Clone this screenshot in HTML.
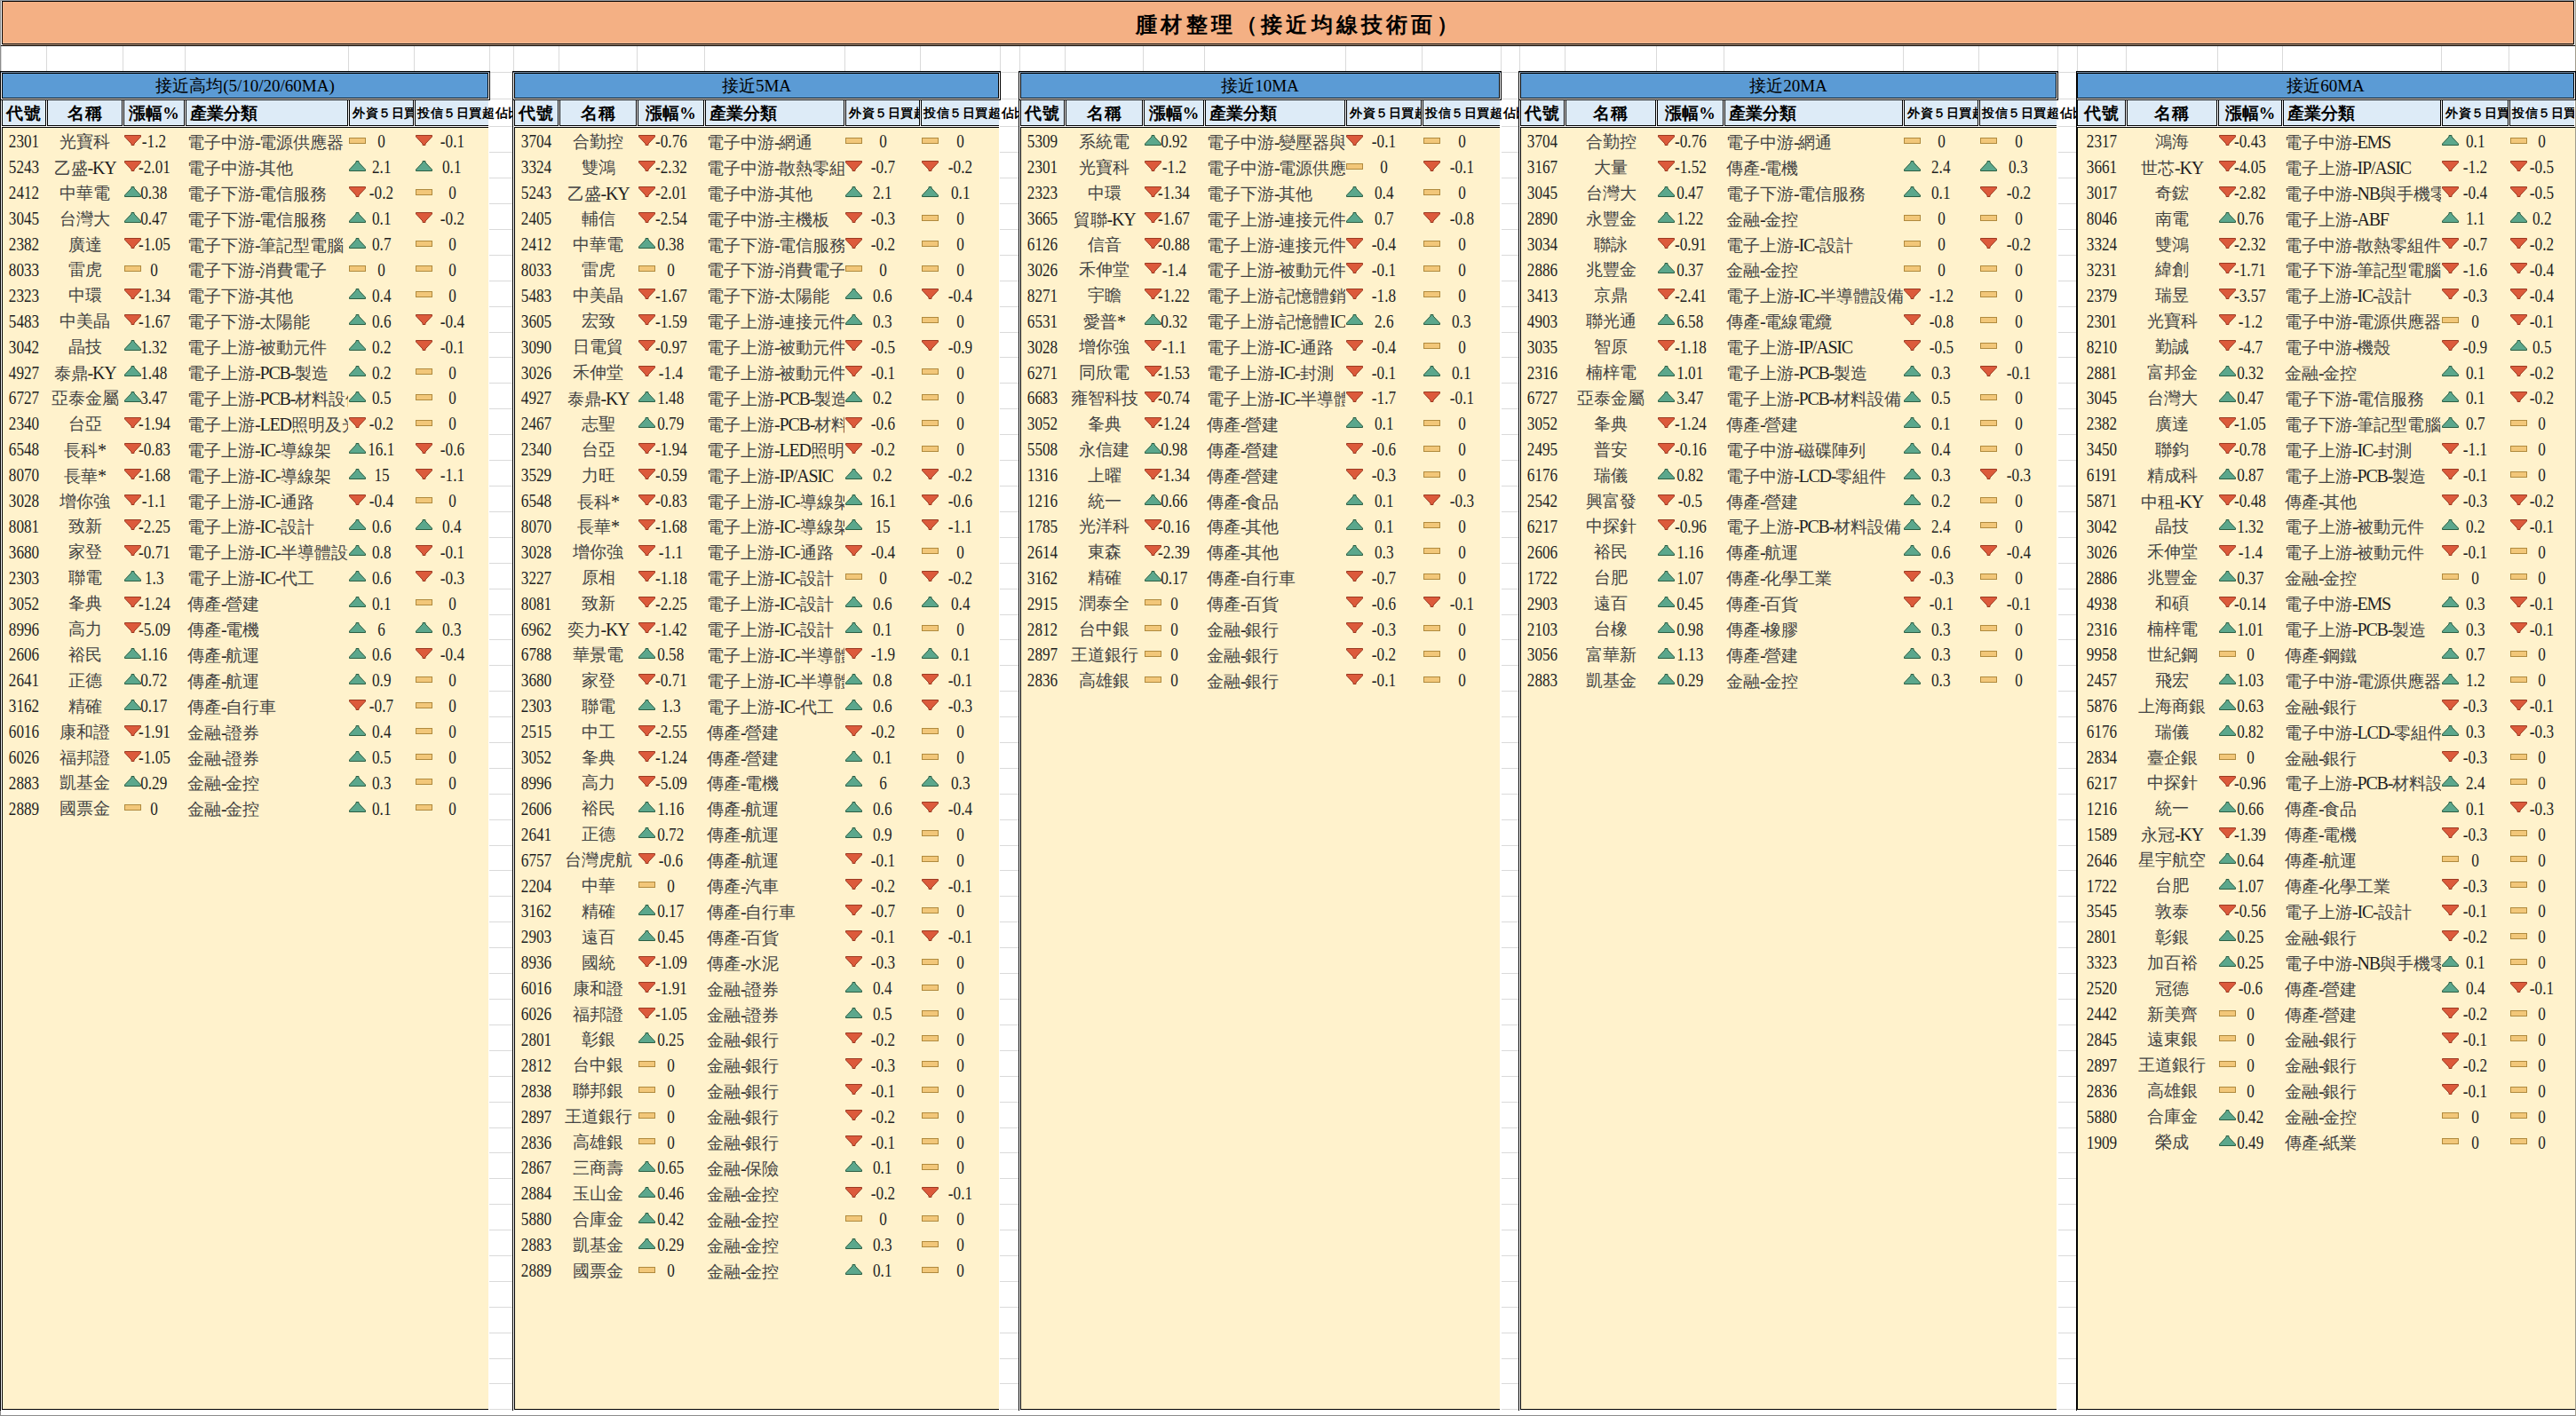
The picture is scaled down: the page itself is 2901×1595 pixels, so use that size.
<!DOCTYPE html><html><head><meta charset="utf-8"><style>
*{margin:0;padding:0;box-sizing:border-box}
html,body{width:2901px;height:1595px;overflow:hidden;background:#fff}
body{position:relative;font-family:"Liberation Serif",serif;color:#444}
.a{position:absolute}
.gv{position:absolute;width:1px;background:#dadada}
.gh{position:absolute;height:1px;background:#dadada}
.k{position:absolute;background:#000}
.c{position:absolute;white-space:nowrap;overflow:hidden;font-size:19px;line-height:28.9px}
.n{display:inline-block;color:#1e1e1e;font-size:22px;transform:scaleX(.78);position:relative;top:-0.5px}
.l{color:#1e1e1e;font-weight:normal;font-size:20px;letter-spacing:-1.2px}
.ic{position:absolute;width:19px;height:12px}
.pu{fill:#5ba78c;stroke:#2c5f44;stroke-width:1}
.pd{fill:#dc5a3b;stroke:#9c3a22;stroke-width:1}
.pz{fill:#f2c779;stroke:#b08a3e;stroke-width:1}
.hd{position:absolute;white-space:nowrap;overflow:hidden;font-weight:bold;font-size:17px;line-height:26px;color:#000}
</style></head><body>
<div class="a" style="left:0px;top:0px;width:1px;height:1595px;background:#8c8c8c"></div>
<div class="a" style="left:0px;top:0px;width:2901px;height:1px;background:#9aa0a6"></div>
<div class="a" style="left:0px;top:1594px;width:2901px;height:1px;background:#8c8c8c"></div>
<div class="a" style="left:2900px;top:0px;width:1px;height:1595px;background:#a09c8c"></div>
<div class="gv" style="left:1px;top:52px;height:28px"></div>
<div class="gv" style="left:52px;top:52px;height:28px"></div>
<div class="gv" style="left:138px;top:52px;height:28px"></div>
<div class="gv" style="left:208px;top:52px;height:28px"></div>
<div class="gv" style="left:392px;top:52px;height:28px"></div>
<div class="gv" style="left:466px;top:52px;height:28px"></div>
<div class="gv" style="left:551px;top:52px;height:28px"></div>
<div class="gv" style="left:578px;top:52px;height:28px"></div>
<div class="gv" style="left:629px;top:52px;height:28px"></div>
<div class="gv" style="left:717px;top:52px;height:28px"></div>
<div class="gv" style="left:793px;top:52px;height:28px"></div>
<div class="gv" style="left:951px;top:52px;height:28px"></div>
<div class="gv" style="left:1036px;top:52px;height:28px"></div>
<div class="gv" style="left:1126px;top:52px;height:28px"></div>
<div class="gv" style="left:1148px;top:52px;height:28px"></div>
<div class="gv" style="left:1199px;top:52px;height:28px"></div>
<div class="gv" style="left:1287px;top:52px;height:28px"></div>
<div class="gv" style="left:1356px;top:52px;height:28px"></div>
<div class="gv" style="left:1515px;top:52px;height:28px"></div>
<div class="gv" style="left:1601px;top:52px;height:28px"></div>
<div class="gv" style="left:1690px;top:52px;height:28px"></div>
<div class="gv" style="left:1711px;top:52px;height:28px"></div>
<div class="gv" style="left:1762px;top:52px;height:28px"></div>
<div class="gv" style="left:1865px;top:52px;height:28px"></div>
<div class="gv" style="left:1941px;top:52px;height:28px"></div>
<div class="gv" style="left:2143px;top:52px;height:28px"></div>
<div class="gv" style="left:2228px;top:52px;height:28px"></div>
<div class="gv" style="left:2317px;top:52px;height:28px"></div>
<div class="gv" style="left:2339px;top:52px;height:28px"></div>
<div class="gv" style="left:2394px;top:52px;height:28px"></div>
<div class="gv" style="left:2497px;top:52px;height:28px"></div>
<div class="gv" style="left:2570px;top:52px;height:28px"></div>
<div class="gv" style="left:2749px;top:52px;height:28px"></div>
<div class="gv" style="left:2825px;top:52px;height:28px"></div>
<div class="gv" style="left:2901px;top:52px;height:28px"></div>
<div class="gh" style="left:551px;top:81px;width:26px"></div>
<div class="gh" style="left:551px;top:111px;width:26px"></div>
<div class="gh" style="left:551px;top:142px;width:26px"></div>
<div class="gh" style="left:551px;top:171px;width:26px"></div>
<div class="gh" style="left:551px;top:200px;width:26px"></div>
<div class="gh" style="left:551px;top:229px;width:26px"></div>
<div class="gh" style="left:551px;top:258px;width:26px"></div>
<div class="gh" style="left:551px;top:287px;width:26px"></div>
<div class="gh" style="left:551px;top:316px;width:26px"></div>
<div class="gh" style="left:551px;top:345px;width:26px"></div>
<div class="gh" style="left:551px;top:374px;width:26px"></div>
<div class="gh" style="left:551px;top:402px;width:26px"></div>
<div class="gh" style="left:551px;top:431px;width:26px"></div>
<div class="gh" style="left:551px;top:460px;width:26px"></div>
<div class="gh" style="left:551px;top:489px;width:26px"></div>
<div class="gh" style="left:551px;top:518px;width:26px"></div>
<div class="gh" style="left:551px;top:547px;width:26px"></div>
<div class="gh" style="left:551px;top:576px;width:26px"></div>
<div class="gh" style="left:551px;top:605px;width:26px"></div>
<div class="gh" style="left:551px;top:634px;width:26px"></div>
<div class="gh" style="left:551px;top:663px;width:26px"></div>
<div class="gh" style="left:551px;top:692px;width:26px"></div>
<div class="gh" style="left:551px;top:720px;width:26px"></div>
<div class="gh" style="left:551px;top:749px;width:26px"></div>
<div class="gh" style="left:551px;top:778px;width:26px"></div>
<div class="gh" style="left:551px;top:807px;width:26px"></div>
<div class="gh" style="left:551px;top:836px;width:26px"></div>
<div class="gh" style="left:551px;top:865px;width:26px"></div>
<div class="gh" style="left:551px;top:894px;width:26px"></div>
<div class="gh" style="left:551px;top:923px;width:26px"></div>
<div class="gh" style="left:551px;top:952px;width:26px"></div>
<div class="gh" style="left:551px;top:980px;width:26px"></div>
<div class="gh" style="left:551px;top:1009px;width:26px"></div>
<div class="gh" style="left:551px;top:1038px;width:26px"></div>
<div class="gh" style="left:551px;top:1067px;width:26px"></div>
<div class="gh" style="left:551px;top:1096px;width:26px"></div>
<div class="gh" style="left:551px;top:1125px;width:26px"></div>
<div class="gh" style="left:551px;top:1154px;width:26px"></div>
<div class="gh" style="left:551px;top:1183px;width:26px"></div>
<div class="gh" style="left:551px;top:1212px;width:26px"></div>
<div class="gh" style="left:551px;top:1241px;width:26px"></div>
<div class="gh" style="left:551px;top:1270px;width:26px"></div>
<div class="gh" style="left:551px;top:1298px;width:26px"></div>
<div class="gh" style="left:551px;top:1327px;width:26px"></div>
<div class="gh" style="left:551px;top:1356px;width:26px"></div>
<div class="gh" style="left:551px;top:1385px;width:26px"></div>
<div class="gh" style="left:551px;top:1414px;width:26px"></div>
<div class="gh" style="left:551px;top:1443px;width:26px"></div>
<div class="gh" style="left:551px;top:1472px;width:26px"></div>
<div class="gh" style="left:551px;top:1501px;width:26px"></div>
<div class="gh" style="left:551px;top:1530px;width:26px"></div>
<div class="gh" style="left:551px;top:1558px;width:26px"></div>
<div class="gh" style="left:551px;top:1587px;width:26px"></div>
<div class="gh" style="left:1126px;top:81px;width:21px"></div>
<div class="gh" style="left:1126px;top:111px;width:21px"></div>
<div class="gh" style="left:1126px;top:142px;width:21px"></div>
<div class="gh" style="left:1126px;top:171px;width:21px"></div>
<div class="gh" style="left:1126px;top:200px;width:21px"></div>
<div class="gh" style="left:1126px;top:229px;width:21px"></div>
<div class="gh" style="left:1126px;top:258px;width:21px"></div>
<div class="gh" style="left:1126px;top:287px;width:21px"></div>
<div class="gh" style="left:1126px;top:316px;width:21px"></div>
<div class="gh" style="left:1126px;top:345px;width:21px"></div>
<div class="gh" style="left:1126px;top:374px;width:21px"></div>
<div class="gh" style="left:1126px;top:402px;width:21px"></div>
<div class="gh" style="left:1126px;top:431px;width:21px"></div>
<div class="gh" style="left:1126px;top:460px;width:21px"></div>
<div class="gh" style="left:1126px;top:489px;width:21px"></div>
<div class="gh" style="left:1126px;top:518px;width:21px"></div>
<div class="gh" style="left:1126px;top:547px;width:21px"></div>
<div class="gh" style="left:1126px;top:576px;width:21px"></div>
<div class="gh" style="left:1126px;top:605px;width:21px"></div>
<div class="gh" style="left:1126px;top:634px;width:21px"></div>
<div class="gh" style="left:1126px;top:663px;width:21px"></div>
<div class="gh" style="left:1126px;top:692px;width:21px"></div>
<div class="gh" style="left:1126px;top:720px;width:21px"></div>
<div class="gh" style="left:1126px;top:749px;width:21px"></div>
<div class="gh" style="left:1126px;top:778px;width:21px"></div>
<div class="gh" style="left:1126px;top:807px;width:21px"></div>
<div class="gh" style="left:1126px;top:836px;width:21px"></div>
<div class="gh" style="left:1126px;top:865px;width:21px"></div>
<div class="gh" style="left:1126px;top:894px;width:21px"></div>
<div class="gh" style="left:1126px;top:923px;width:21px"></div>
<div class="gh" style="left:1126px;top:952px;width:21px"></div>
<div class="gh" style="left:1126px;top:980px;width:21px"></div>
<div class="gh" style="left:1126px;top:1009px;width:21px"></div>
<div class="gh" style="left:1126px;top:1038px;width:21px"></div>
<div class="gh" style="left:1126px;top:1067px;width:21px"></div>
<div class="gh" style="left:1126px;top:1096px;width:21px"></div>
<div class="gh" style="left:1126px;top:1125px;width:21px"></div>
<div class="gh" style="left:1126px;top:1154px;width:21px"></div>
<div class="gh" style="left:1126px;top:1183px;width:21px"></div>
<div class="gh" style="left:1126px;top:1212px;width:21px"></div>
<div class="gh" style="left:1126px;top:1241px;width:21px"></div>
<div class="gh" style="left:1126px;top:1270px;width:21px"></div>
<div class="gh" style="left:1126px;top:1298px;width:21px"></div>
<div class="gh" style="left:1126px;top:1327px;width:21px"></div>
<div class="gh" style="left:1126px;top:1356px;width:21px"></div>
<div class="gh" style="left:1126px;top:1385px;width:21px"></div>
<div class="gh" style="left:1126px;top:1414px;width:21px"></div>
<div class="gh" style="left:1126px;top:1443px;width:21px"></div>
<div class="gh" style="left:1126px;top:1472px;width:21px"></div>
<div class="gh" style="left:1126px;top:1501px;width:21px"></div>
<div class="gh" style="left:1126px;top:1530px;width:21px"></div>
<div class="gh" style="left:1126px;top:1558px;width:21px"></div>
<div class="gh" style="left:1126px;top:1587px;width:21px"></div>
<div class="gh" style="left:1691px;top:81px;width:19px"></div>
<div class="gh" style="left:1691px;top:111px;width:19px"></div>
<div class="gh" style="left:1691px;top:142px;width:19px"></div>
<div class="gh" style="left:1691px;top:171px;width:19px"></div>
<div class="gh" style="left:1691px;top:200px;width:19px"></div>
<div class="gh" style="left:1691px;top:229px;width:19px"></div>
<div class="gh" style="left:1691px;top:258px;width:19px"></div>
<div class="gh" style="left:1691px;top:287px;width:19px"></div>
<div class="gh" style="left:1691px;top:316px;width:19px"></div>
<div class="gh" style="left:1691px;top:345px;width:19px"></div>
<div class="gh" style="left:1691px;top:374px;width:19px"></div>
<div class="gh" style="left:1691px;top:402px;width:19px"></div>
<div class="gh" style="left:1691px;top:431px;width:19px"></div>
<div class="gh" style="left:1691px;top:460px;width:19px"></div>
<div class="gh" style="left:1691px;top:489px;width:19px"></div>
<div class="gh" style="left:1691px;top:518px;width:19px"></div>
<div class="gh" style="left:1691px;top:547px;width:19px"></div>
<div class="gh" style="left:1691px;top:576px;width:19px"></div>
<div class="gh" style="left:1691px;top:605px;width:19px"></div>
<div class="gh" style="left:1691px;top:634px;width:19px"></div>
<div class="gh" style="left:1691px;top:663px;width:19px"></div>
<div class="gh" style="left:1691px;top:692px;width:19px"></div>
<div class="gh" style="left:1691px;top:720px;width:19px"></div>
<div class="gh" style="left:1691px;top:749px;width:19px"></div>
<div class="gh" style="left:1691px;top:778px;width:19px"></div>
<div class="gh" style="left:1691px;top:807px;width:19px"></div>
<div class="gh" style="left:1691px;top:836px;width:19px"></div>
<div class="gh" style="left:1691px;top:865px;width:19px"></div>
<div class="gh" style="left:1691px;top:894px;width:19px"></div>
<div class="gh" style="left:1691px;top:923px;width:19px"></div>
<div class="gh" style="left:1691px;top:952px;width:19px"></div>
<div class="gh" style="left:1691px;top:980px;width:19px"></div>
<div class="gh" style="left:1691px;top:1009px;width:19px"></div>
<div class="gh" style="left:1691px;top:1038px;width:19px"></div>
<div class="gh" style="left:1691px;top:1067px;width:19px"></div>
<div class="gh" style="left:1691px;top:1096px;width:19px"></div>
<div class="gh" style="left:1691px;top:1125px;width:19px"></div>
<div class="gh" style="left:1691px;top:1154px;width:19px"></div>
<div class="gh" style="left:1691px;top:1183px;width:19px"></div>
<div class="gh" style="left:1691px;top:1212px;width:19px"></div>
<div class="gh" style="left:1691px;top:1241px;width:19px"></div>
<div class="gh" style="left:1691px;top:1270px;width:19px"></div>
<div class="gh" style="left:1691px;top:1298px;width:19px"></div>
<div class="gh" style="left:1691px;top:1327px;width:19px"></div>
<div class="gh" style="left:1691px;top:1356px;width:19px"></div>
<div class="gh" style="left:1691px;top:1385px;width:19px"></div>
<div class="gh" style="left:1691px;top:1414px;width:19px"></div>
<div class="gh" style="left:1691px;top:1443px;width:19px"></div>
<div class="gh" style="left:1691px;top:1472px;width:19px"></div>
<div class="gh" style="left:1691px;top:1501px;width:19px"></div>
<div class="gh" style="left:1691px;top:1530px;width:19px"></div>
<div class="gh" style="left:1691px;top:1558px;width:19px"></div>
<div class="gh" style="left:1691px;top:1587px;width:19px"></div>
<div class="gh" style="left:2318px;top:81px;width:20px"></div>
<div class="gh" style="left:2318px;top:111px;width:20px"></div>
<div class="gh" style="left:2318px;top:142px;width:20px"></div>
<div class="gh" style="left:2318px;top:171px;width:20px"></div>
<div class="gh" style="left:2318px;top:200px;width:20px"></div>
<div class="gh" style="left:2318px;top:229px;width:20px"></div>
<div class="gh" style="left:2318px;top:258px;width:20px"></div>
<div class="gh" style="left:2318px;top:287px;width:20px"></div>
<div class="gh" style="left:2318px;top:316px;width:20px"></div>
<div class="gh" style="left:2318px;top:345px;width:20px"></div>
<div class="gh" style="left:2318px;top:374px;width:20px"></div>
<div class="gh" style="left:2318px;top:402px;width:20px"></div>
<div class="gh" style="left:2318px;top:431px;width:20px"></div>
<div class="gh" style="left:2318px;top:460px;width:20px"></div>
<div class="gh" style="left:2318px;top:489px;width:20px"></div>
<div class="gh" style="left:2318px;top:518px;width:20px"></div>
<div class="gh" style="left:2318px;top:547px;width:20px"></div>
<div class="gh" style="left:2318px;top:576px;width:20px"></div>
<div class="gh" style="left:2318px;top:605px;width:20px"></div>
<div class="gh" style="left:2318px;top:634px;width:20px"></div>
<div class="gh" style="left:2318px;top:663px;width:20px"></div>
<div class="gh" style="left:2318px;top:692px;width:20px"></div>
<div class="gh" style="left:2318px;top:720px;width:20px"></div>
<div class="gh" style="left:2318px;top:749px;width:20px"></div>
<div class="gh" style="left:2318px;top:778px;width:20px"></div>
<div class="gh" style="left:2318px;top:807px;width:20px"></div>
<div class="gh" style="left:2318px;top:836px;width:20px"></div>
<div class="gh" style="left:2318px;top:865px;width:20px"></div>
<div class="gh" style="left:2318px;top:894px;width:20px"></div>
<div class="gh" style="left:2318px;top:923px;width:20px"></div>
<div class="gh" style="left:2318px;top:952px;width:20px"></div>
<div class="gh" style="left:2318px;top:980px;width:20px"></div>
<div class="gh" style="left:2318px;top:1009px;width:20px"></div>
<div class="gh" style="left:2318px;top:1038px;width:20px"></div>
<div class="gh" style="left:2318px;top:1067px;width:20px"></div>
<div class="gh" style="left:2318px;top:1096px;width:20px"></div>
<div class="gh" style="left:2318px;top:1125px;width:20px"></div>
<div class="gh" style="left:2318px;top:1154px;width:20px"></div>
<div class="gh" style="left:2318px;top:1183px;width:20px"></div>
<div class="gh" style="left:2318px;top:1212px;width:20px"></div>
<div class="gh" style="left:2318px;top:1241px;width:20px"></div>
<div class="gh" style="left:2318px;top:1270px;width:20px"></div>
<div class="gh" style="left:2318px;top:1298px;width:20px"></div>
<div class="gh" style="left:2318px;top:1327px;width:20px"></div>
<div class="gh" style="left:2318px;top:1356px;width:20px"></div>
<div class="gh" style="left:2318px;top:1385px;width:20px"></div>
<div class="gh" style="left:2318px;top:1414px;width:20px"></div>
<div class="gh" style="left:2318px;top:1443px;width:20px"></div>
<div class="gh" style="left:2318px;top:1472px;width:20px"></div>
<div class="gh" style="left:2318px;top:1501px;width:20px"></div>
<div class="gh" style="left:2318px;top:1530px;width:20px"></div>
<div class="gh" style="left:2318px;top:1558px;width:20px"></div>
<div class="gh" style="left:2318px;top:1587px;width:20px"></div>
<div class="a" style="left:3px;top:2px;width:2895px;height:47px;background:#f4b084"></div>
<div class="k" style="left:2px;top:1px;width:2897px;height:1px"></div>
<div class="k" style="left:2px;top:1px;width:1px;height:49px"></div>
<div class="k" style="left:2898px;top:1px;width:1px;height:49px"></div>
<div class="k" style="left:2px;top:49px;width:2897px;height:1px"></div>
<div class="k" style="left:1px;top:51px;width:2899px;height:1px"></div>
<div class="a" style="left:3px;top:50px;width:2895px;height:1px;background:#c9a386"></div>
<div class="a" style="left:3px;top:48px;width:2895px;height:1px;background:#f6bd98"></div>
<div class="a" style="left:0;top:2px;width:2901px;height:47px;text-align:center;font-weight:bold;font-size:24px;line-height:47px;letter-spacing:4.2px;padding-left:24px;padding-top:3px;color:#000">腫材整理（接近均線技術面）</div>
<div class="a" style="left:3px;top:83px;width:546px;height:27px;background:#5b9bd5"></div>
<div class="k" style="left:0px;top:80px;width:552px;height:1px"></div>
<div class="a" style="left:1px;top:81px;width:550px;height:1px;background:#6f8aa6"></div>
<div class="k" style="left:2px;top:82px;width:548px;height:1px"></div>
<div class="k" style="left:2px;top:110px;width:548px;height:1px"></div>
<div class="k" style="left:2px;top:82px;width:1px;height:29px"></div>
<div class="k" style="left:549px;top:82px;width:1px;height:29px"></div>
<div class="k" style="left:551px;top:80px;width:1px;height:33px"></div>
<div class="k" style="left:0px;top:80px;width:1px;height:1509px"></div>
<div class="a" style="left:3px;top:83px;width:546px;height:27px;text-align:center;font-size:19px;line-height:27px;color:#000">接近高均<span style="font-size:19px;letter-spacing:0;font-weight:normal">(5/10/20/60MA)</span></div>
<div class="k" style="left:0px;top:112px;width:551px;height:1px"></div>
<div class="a" style="left:3px;top:113px;width:49px;height:28px;background:#ddebf7"></div>
<div class="k" style="left:2px;top:112px;width:50px;height:1px"></div>
<div class="k" style="left:2px;top:141px;width:50px;height:1px"></div>
<div class="k" style="left:2px;top:112px;width:1px;height:30px"></div>
<div class="k" style="left:51px;top:112px;width:1px;height:30px"></div>
<div class="hd" style="left:3px;top:115px;width:48px;height:26px;text-align:center;padding-left:0px;font-size:18.5px;letter-spacing:1px">代號</div>
<div class="a" style="left:54px;top:113px;width:84px;height:28px;background:#ddebf7"></div>
<div class="k" style="left:53px;top:112px;width:85px;height:1px"></div>
<div class="k" style="left:53px;top:141px;width:85px;height:1px"></div>
<div class="k" style="left:53px;top:112px;width:1px;height:30px"></div>
<div class="k" style="left:137px;top:112px;width:1px;height:30px"></div>
<div class="hd" style="left:54px;top:115px;width:83px;height:26px;text-align:center;padding-left:0px;font-size:18.5px;letter-spacing:1px">名稱</div>
<div class="a" style="left:140px;top:113px;width:68px;height:28px;background:#ddebf7"></div>
<div class="k" style="left:139px;top:112px;width:69px;height:1px"></div>
<div class="k" style="left:139px;top:141px;width:69px;height:1px"></div>
<div class="k" style="left:139px;top:112px;width:1px;height:30px"></div>
<div class="k" style="left:207px;top:112px;width:1px;height:30px"></div>
<div class="hd" style="left:140px;top:115px;width:67px;height:26px;text-align:center;padding-left:0px;font-size:18.5px;letter-spacing:0">漲幅%</div>
<div class="a" style="left:210px;top:113px;width:182px;height:28px;background:#ddebf7"></div>
<div class="k" style="left:209px;top:112px;width:183px;height:1px"></div>
<div class="k" style="left:209px;top:141px;width:183px;height:1px"></div>
<div class="k" style="left:209px;top:112px;width:1px;height:30px"></div>
<div class="k" style="left:391px;top:112px;width:1px;height:30px"></div>
<div class="hd" style="left:210px;top:115px;width:181px;height:26px;text-align:left;padding-left:4px;font-size:18.5px;letter-spacing:0">產業分類</div>
<div class="a" style="left:394px;top:113px;width:72px;height:28px;background:#ddebf7"></div>
<div class="k" style="left:393px;top:112px;width:73px;height:1px"></div>
<div class="k" style="left:393px;top:141px;width:73px;height:1px"></div>
<div class="k" style="left:393px;top:112px;width:1px;height:30px"></div>
<div class="k" style="left:465px;top:112px;width:1px;height:30px"></div>
<div class="hd" style="left:394px;top:115px;width:71px;height:26px;text-align:left;padding-left:3px;font-size:13.5px;letter-spacing:0.6px">外資５日買超佔比</div>
<div class="a" style="left:468px;top:113px;width:82px;height:28px;background:#ddebf7"></div>
<div class="k" style="left:467px;top:112px;width:83px;height:1px"></div>
<div class="k" style="left:467px;top:141px;width:83px;height:1px"></div>
<div class="k" style="left:467px;top:112px;width:1px;height:30px"></div>
<div class="hd" style="left:468px;top:115px;width:109px;height:26px;text-align:left;padding-left:2px;font-size:13.5px;letter-spacing:0.6px">投信５日買超佔比</div>
<div class="a" style="left:3px;top:144px;width:547px;height:1443px;background:#fff2cc"></div>
<div class="k" style="left:2px;top:143px;width:548px;height:1px"></div>
<div class="k" style="left:2px;top:143px;width:1px;height:1445px"></div>
<div class="k" style="left:2px;top:1587px;width:548px;height:1px"></div>
<div class="c" style="left:2px;top:145.9px;width:50px;text-align:center"><span class="n">2301</span></div>
<div class="c" style="left:53px;top:145.9px;width:85px;text-align:center">光寶科</div>
<div class="c" style="left:209px;top:145.9px;width:183px;padding-left:2px">電子中游<span class="l">-</span>電源供應器</div>
<svg class="ic" viewBox="0 0 19 12" style="left:140px;top:151.9px"><path class="pd" d="M.5 .5H18.5V2L11 10V11.5H8V10L.5 2Z"/></svg>
<div class="c" style="left:139px;top:145.9px;width:69px;text-align:center"><span class="n">-1.2</span></div>
<svg class="ic" viewBox="0 0 19 12" style="left:393px;top:151.9px"><rect class="pz" x=".5" y="3.5" width="18" height="6"/></svg>
<div class="c" style="left:393px;top:145.9px;width:73px;text-align:center"><span class="n">0</span></div>
<svg class="ic" viewBox="0 0 19 12" style="left:468px;top:151.9px"><path class="pd" d="M.5 .5H18.5V2L11 10V11.5H8V10L.5 2Z"/></svg>
<div class="c" style="left:467px;top:145.9px;width:84px;text-align:center"><span class="n">-0.1</span></div>
<div class="c" style="left:2px;top:174.8px;width:50px;text-align:center"><span class="n">5243</span></div>
<div class="c" style="left:53px;top:174.8px;width:85px;text-align:center">乙盛<span class="l">-KY</span></div>
<div class="c" style="left:209px;top:174.8px;width:183px;padding-left:2px">電子中游<span class="l">-</span>其他</div>
<svg class="ic" viewBox="0 0 19 12" style="left:140px;top:180.8px"><path class="pd" d="M.5 .5H18.5V2L11 10V11.5H8V10L.5 2Z"/></svg>
<div class="c" style="left:139px;top:174.8px;width:69px;text-align:center"><span class="n">-2.01</span></div>
<svg class="ic" viewBox="0 0 19 12" style="left:393px;top:180.8px"><path class="pu" d="M8 .5H11V2L18.5 10V11.5H.5V10L8 2Z"/></svg>
<div class="c" style="left:393px;top:174.8px;width:73px;text-align:center"><span class="n">2.1</span></div>
<svg class="ic" viewBox="0 0 19 12" style="left:468px;top:180.8px"><path class="pu" d="M8 .5H11V2L18.5 10V11.5H.5V10L8 2Z"/></svg>
<div class="c" style="left:467px;top:174.8px;width:84px;text-align:center"><span class="n">0.1</span></div>
<div class="c" style="left:2px;top:203.7px;width:50px;text-align:center"><span class="n">2412</span></div>
<div class="c" style="left:53px;top:203.7px;width:85px;text-align:center">中華電</div>
<div class="c" style="left:209px;top:203.7px;width:183px;padding-left:2px">電子下游<span class="l">-</span>電信服務</div>
<svg class="ic" viewBox="0 0 19 12" style="left:140px;top:209.7px"><path class="pu" d="M8 .5H11V2L18.5 10V11.5H.5V10L8 2Z"/></svg>
<div class="c" style="left:139px;top:203.7px;width:69px;text-align:center"><span class="n">0.38</span></div>
<svg class="ic" viewBox="0 0 19 12" style="left:393px;top:209.7px"><path class="pd" d="M.5 .5H18.5V2L11 10V11.5H8V10L.5 2Z"/></svg>
<div class="c" style="left:393px;top:203.7px;width:73px;text-align:center"><span class="n">-0.2</span></div>
<svg class="ic" viewBox="0 0 19 12" style="left:468px;top:209.7px"><rect class="pz" x=".5" y="3.5" width="18" height="6"/></svg>
<div class="c" style="left:467px;top:203.7px;width:84px;text-align:center"><span class="n">0</span></div>
<div class="c" style="left:2px;top:232.6px;width:50px;text-align:center"><span class="n">3045</span></div>
<div class="c" style="left:53px;top:232.6px;width:85px;text-align:center">台灣大</div>
<div class="c" style="left:209px;top:232.6px;width:183px;padding-left:2px">電子下游<span class="l">-</span>電信服務</div>
<svg class="ic" viewBox="0 0 19 12" style="left:140px;top:238.6px"><path class="pu" d="M8 .5H11V2L18.5 10V11.5H.5V10L8 2Z"/></svg>
<div class="c" style="left:139px;top:232.6px;width:69px;text-align:center"><span class="n">0.47</span></div>
<svg class="ic" viewBox="0 0 19 12" style="left:393px;top:238.6px"><path class="pu" d="M8 .5H11V2L18.5 10V11.5H.5V10L8 2Z"/></svg>
<div class="c" style="left:393px;top:232.6px;width:73px;text-align:center"><span class="n">0.1</span></div>
<svg class="ic" viewBox="0 0 19 12" style="left:468px;top:238.6px"><path class="pd" d="M.5 .5H18.5V2L11 10V11.5H8V10L.5 2Z"/></svg>
<div class="c" style="left:467px;top:232.6px;width:84px;text-align:center"><span class="n">-0.2</span></div>
<div class="c" style="left:2px;top:261.5px;width:50px;text-align:center"><span class="n">2382</span></div>
<div class="c" style="left:53px;top:261.5px;width:85px;text-align:center">廣達</div>
<div class="c" style="left:209px;top:261.5px;width:183px;padding-left:2px">電子下游<span class="l">-</span>筆記型電腦</div>
<svg class="ic" viewBox="0 0 19 12" style="left:140px;top:267.5px"><path class="pd" d="M.5 .5H18.5V2L11 10V11.5H8V10L.5 2Z"/></svg>
<div class="c" style="left:139px;top:261.5px;width:69px;text-align:center"><span class="n">-1.05</span></div>
<svg class="ic" viewBox="0 0 19 12" style="left:393px;top:267.5px"><path class="pu" d="M8 .5H11V2L18.5 10V11.5H.5V10L8 2Z"/></svg>
<div class="c" style="left:393px;top:261.5px;width:73px;text-align:center"><span class="n">0.7</span></div>
<svg class="ic" viewBox="0 0 19 12" style="left:468px;top:267.5px"><rect class="pz" x=".5" y="3.5" width="18" height="6"/></svg>
<div class="c" style="left:467px;top:261.5px;width:84px;text-align:center"><span class="n">0</span></div>
<div class="c" style="left:2px;top:290.4px;width:50px;text-align:center"><span class="n">8033</span></div>
<div class="c" style="left:53px;top:290.4px;width:85px;text-align:center">雷虎</div>
<div class="c" style="left:209px;top:290.4px;width:183px;padding-left:2px">電子下游<span class="l">-</span>消費電子</div>
<svg class="ic" viewBox="0 0 19 12" style="left:140px;top:296.4px"><rect class="pz" x=".5" y="3.5" width="18" height="6"/></svg>
<div class="c" style="left:139px;top:290.4px;width:69px;text-align:center"><span class="n">0</span></div>
<svg class="ic" viewBox="0 0 19 12" style="left:393px;top:296.4px"><rect class="pz" x=".5" y="3.5" width="18" height="6"/></svg>
<div class="c" style="left:393px;top:290.4px;width:73px;text-align:center"><span class="n">0</span></div>
<svg class="ic" viewBox="0 0 19 12" style="left:468px;top:296.4px"><rect class="pz" x=".5" y="3.5" width="18" height="6"/></svg>
<div class="c" style="left:467px;top:290.4px;width:84px;text-align:center"><span class="n">0</span></div>
<div class="c" style="left:2px;top:319.3px;width:50px;text-align:center"><span class="n">2323</span></div>
<div class="c" style="left:53px;top:319.3px;width:85px;text-align:center">中環</div>
<div class="c" style="left:209px;top:319.3px;width:183px;padding-left:2px">電子下游<span class="l">-</span>其他</div>
<svg class="ic" viewBox="0 0 19 12" style="left:140px;top:325.3px"><path class="pd" d="M.5 .5H18.5V2L11 10V11.5H8V10L.5 2Z"/></svg>
<div class="c" style="left:139px;top:319.3px;width:69px;text-align:center"><span class="n">-1.34</span></div>
<svg class="ic" viewBox="0 0 19 12" style="left:393px;top:325.3px"><path class="pu" d="M8 .5H11V2L18.5 10V11.5H.5V10L8 2Z"/></svg>
<div class="c" style="left:393px;top:319.3px;width:73px;text-align:center"><span class="n">0.4</span></div>
<svg class="ic" viewBox="0 0 19 12" style="left:468px;top:325.3px"><rect class="pz" x=".5" y="3.5" width="18" height="6"/></svg>
<div class="c" style="left:467px;top:319.3px;width:84px;text-align:center"><span class="n">0</span></div>
<div class="c" style="left:2px;top:348.2px;width:50px;text-align:center"><span class="n">5483</span></div>
<div class="c" style="left:53px;top:348.2px;width:85px;text-align:center">中美晶</div>
<div class="c" style="left:209px;top:348.2px;width:183px;padding-left:2px">電子下游<span class="l">-</span>太陽能</div>
<svg class="ic" viewBox="0 0 19 12" style="left:140px;top:354.2px"><path class="pd" d="M.5 .5H18.5V2L11 10V11.5H8V10L.5 2Z"/></svg>
<div class="c" style="left:139px;top:348.2px;width:69px;text-align:center"><span class="n">-1.67</span></div>
<svg class="ic" viewBox="0 0 19 12" style="left:393px;top:354.2px"><path class="pu" d="M8 .5H11V2L18.5 10V11.5H.5V10L8 2Z"/></svg>
<div class="c" style="left:393px;top:348.2px;width:73px;text-align:center"><span class="n">0.6</span></div>
<svg class="ic" viewBox="0 0 19 12" style="left:468px;top:354.2px"><path class="pd" d="M.5 .5H18.5V2L11 10V11.5H8V10L.5 2Z"/></svg>
<div class="c" style="left:467px;top:348.2px;width:84px;text-align:center"><span class="n">-0.4</span></div>
<div class="c" style="left:2px;top:377.1px;width:50px;text-align:center"><span class="n">3042</span></div>
<div class="c" style="left:53px;top:377.1px;width:85px;text-align:center">晶技</div>
<div class="c" style="left:209px;top:377.1px;width:183px;padding-left:2px">電子上游<span class="l">-</span>被動元件</div>
<svg class="ic" viewBox="0 0 19 12" style="left:140px;top:383.1px"><path class="pu" d="M8 .5H11V2L18.5 10V11.5H.5V10L8 2Z"/></svg>
<div class="c" style="left:139px;top:377.1px;width:69px;text-align:center"><span class="n">1.32</span></div>
<svg class="ic" viewBox="0 0 19 12" style="left:393px;top:383.1px"><path class="pu" d="M8 .5H11V2L18.5 10V11.5H.5V10L8 2Z"/></svg>
<div class="c" style="left:393px;top:377.1px;width:73px;text-align:center"><span class="n">0.2</span></div>
<svg class="ic" viewBox="0 0 19 12" style="left:468px;top:383.1px"><path class="pd" d="M.5 .5H18.5V2L11 10V11.5H8V10L.5 2Z"/></svg>
<div class="c" style="left:467px;top:377.1px;width:84px;text-align:center"><span class="n">-0.1</span></div>
<div class="c" style="left:2px;top:406.0px;width:50px;text-align:center"><span class="n">4927</span></div>
<div class="c" style="left:53px;top:406.0px;width:85px;text-align:center">泰鼎<span class="l">-KY</span></div>
<div class="c" style="left:209px;top:406.0px;width:183px;padding-left:2px">電子上游<span class="l">-PCB-</span>製造</div>
<svg class="ic" viewBox="0 0 19 12" style="left:140px;top:412.0px"><path class="pu" d="M8 .5H11V2L18.5 10V11.5H.5V10L8 2Z"/></svg>
<div class="c" style="left:139px;top:406.0px;width:69px;text-align:center"><span class="n">1.48</span></div>
<svg class="ic" viewBox="0 0 19 12" style="left:393px;top:412.0px"><path class="pu" d="M8 .5H11V2L18.5 10V11.5H.5V10L8 2Z"/></svg>
<div class="c" style="left:393px;top:406.0px;width:73px;text-align:center"><span class="n">0.2</span></div>
<svg class="ic" viewBox="0 0 19 12" style="left:468px;top:412.0px"><rect class="pz" x=".5" y="3.5" width="18" height="6"/></svg>
<div class="c" style="left:467px;top:406.0px;width:84px;text-align:center"><span class="n">0</span></div>
<div class="c" style="left:2px;top:434.9px;width:50px;text-align:center"><span class="n">6727</span></div>
<div class="c" style="left:53px;top:434.9px;width:85px;text-align:center">亞泰金屬</div>
<div class="c" style="left:209px;top:434.9px;width:183px;padding-left:2px">電子上游<span class="l">-PCB-</span>材料設備</div>
<svg class="ic" viewBox="0 0 19 12" style="left:140px;top:440.9px"><path class="pu" d="M8 .5H11V2L18.5 10V11.5H.5V10L8 2Z"/></svg>
<div class="c" style="left:139px;top:434.9px;width:69px;text-align:center"><span class="n">3.47</span></div>
<svg class="ic" viewBox="0 0 19 12" style="left:393px;top:440.9px"><path class="pu" d="M8 .5H11V2L18.5 10V11.5H.5V10L8 2Z"/></svg>
<div class="c" style="left:393px;top:434.9px;width:73px;text-align:center"><span class="n">0.5</span></div>
<svg class="ic" viewBox="0 0 19 12" style="left:468px;top:440.9px"><rect class="pz" x=".5" y="3.5" width="18" height="6"/></svg>
<div class="c" style="left:467px;top:434.9px;width:84px;text-align:center"><span class="n">0</span></div>
<div class="c" style="left:2px;top:463.8px;width:50px;text-align:center"><span class="n">2340</span></div>
<div class="c" style="left:53px;top:463.8px;width:85px;text-align:center">台亞</div>
<div class="c" style="left:209px;top:463.8px;width:183px;padding-left:2px">電子上游<span class="l">-LED</span>照明及光電</div>
<svg class="ic" viewBox="0 0 19 12" style="left:140px;top:469.8px"><path class="pd" d="M.5 .5H18.5V2L11 10V11.5H8V10L.5 2Z"/></svg>
<div class="c" style="left:139px;top:463.8px;width:69px;text-align:center"><span class="n">-1.94</span></div>
<svg class="ic" viewBox="0 0 19 12" style="left:393px;top:469.8px"><path class="pd" d="M.5 .5H18.5V2L11 10V11.5H8V10L.5 2Z"/></svg>
<div class="c" style="left:393px;top:463.8px;width:73px;text-align:center"><span class="n">-0.2</span></div>
<svg class="ic" viewBox="0 0 19 12" style="left:468px;top:469.8px"><rect class="pz" x=".5" y="3.5" width="18" height="6"/></svg>
<div class="c" style="left:467px;top:463.8px;width:84px;text-align:center"><span class="n">0</span></div>
<div class="c" style="left:2px;top:492.7px;width:50px;text-align:center"><span class="n">6548</span></div>
<div class="c" style="left:53px;top:492.7px;width:85px;text-align:center">長科<span class="l">*</span></div>
<div class="c" style="left:209px;top:492.7px;width:183px;padding-left:2px">電子上游<span class="l">-IC-</span>導線架</div>
<svg class="ic" viewBox="0 0 19 12" style="left:140px;top:498.7px"><path class="pd" d="M.5 .5H18.5V2L11 10V11.5H8V10L.5 2Z"/></svg>
<div class="c" style="left:139px;top:492.7px;width:69px;text-align:center"><span class="n">-0.83</span></div>
<svg class="ic" viewBox="0 0 19 12" style="left:393px;top:498.7px"><path class="pu" d="M8 .5H11V2L18.5 10V11.5H.5V10L8 2Z"/></svg>
<div class="c" style="left:393px;top:492.7px;width:73px;text-align:center"><span class="n">16.1</span></div>
<svg class="ic" viewBox="0 0 19 12" style="left:468px;top:498.7px"><path class="pd" d="M.5 .5H18.5V2L11 10V11.5H8V10L.5 2Z"/></svg>
<div class="c" style="left:467px;top:492.7px;width:84px;text-align:center"><span class="n">-0.6</span></div>
<div class="c" style="left:2px;top:521.6px;width:50px;text-align:center"><span class="n">8070</span></div>
<div class="c" style="left:53px;top:521.6px;width:85px;text-align:center">長華<span class="l">*</span></div>
<div class="c" style="left:209px;top:521.6px;width:183px;padding-left:2px">電子上游<span class="l">-IC-</span>導線架</div>
<svg class="ic" viewBox="0 0 19 12" style="left:140px;top:527.6px"><path class="pd" d="M.5 .5H18.5V2L11 10V11.5H8V10L.5 2Z"/></svg>
<div class="c" style="left:139px;top:521.6px;width:69px;text-align:center"><span class="n">-1.68</span></div>
<svg class="ic" viewBox="0 0 19 12" style="left:393px;top:527.6px"><path class="pu" d="M8 .5H11V2L18.5 10V11.5H.5V10L8 2Z"/></svg>
<div class="c" style="left:393px;top:521.6px;width:73px;text-align:center"><span class="n">15</span></div>
<svg class="ic" viewBox="0 0 19 12" style="left:468px;top:527.6px"><path class="pd" d="M.5 .5H18.5V2L11 10V11.5H8V10L.5 2Z"/></svg>
<div class="c" style="left:467px;top:521.6px;width:84px;text-align:center"><span class="n">-1.1</span></div>
<div class="c" style="left:2px;top:550.5px;width:50px;text-align:center"><span class="n">3028</span></div>
<div class="c" style="left:53px;top:550.5px;width:85px;text-align:center">增你強</div>
<div class="c" style="left:209px;top:550.5px;width:183px;padding-left:2px">電子上游<span class="l">-IC-</span>通路</div>
<svg class="ic" viewBox="0 0 19 12" style="left:140px;top:556.5px"><path class="pd" d="M.5 .5H18.5V2L11 10V11.5H8V10L.5 2Z"/></svg>
<div class="c" style="left:139px;top:550.5px;width:69px;text-align:center"><span class="n">-1.1</span></div>
<svg class="ic" viewBox="0 0 19 12" style="left:393px;top:556.5px"><path class="pd" d="M.5 .5H18.5V2L11 10V11.5H8V10L.5 2Z"/></svg>
<div class="c" style="left:393px;top:550.5px;width:73px;text-align:center"><span class="n">-0.4</span></div>
<svg class="ic" viewBox="0 0 19 12" style="left:468px;top:556.5px"><rect class="pz" x=".5" y="3.5" width="18" height="6"/></svg>
<div class="c" style="left:467px;top:550.5px;width:84px;text-align:center"><span class="n">0</span></div>
<div class="c" style="left:2px;top:579.4px;width:50px;text-align:center"><span class="n">8081</span></div>
<div class="c" style="left:53px;top:579.4px;width:85px;text-align:center">致新</div>
<div class="c" style="left:209px;top:579.4px;width:183px;padding-left:2px">電子上游<span class="l">-IC-</span>設計</div>
<svg class="ic" viewBox="0 0 19 12" style="left:140px;top:585.4px"><path class="pd" d="M.5 .5H18.5V2L11 10V11.5H8V10L.5 2Z"/></svg>
<div class="c" style="left:139px;top:579.4px;width:69px;text-align:center"><span class="n">-2.25</span></div>
<svg class="ic" viewBox="0 0 19 12" style="left:393px;top:585.4px"><path class="pu" d="M8 .5H11V2L18.5 10V11.5H.5V10L8 2Z"/></svg>
<div class="c" style="left:393px;top:579.4px;width:73px;text-align:center"><span class="n">0.6</span></div>
<svg class="ic" viewBox="0 0 19 12" style="left:468px;top:585.4px"><path class="pu" d="M8 .5H11V2L18.5 10V11.5H.5V10L8 2Z"/></svg>
<div class="c" style="left:467px;top:579.4px;width:84px;text-align:center"><span class="n">0.4</span></div>
<div class="c" style="left:2px;top:608.3px;width:50px;text-align:center"><span class="n">3680</span></div>
<div class="c" style="left:53px;top:608.3px;width:85px;text-align:center">家登</div>
<div class="c" style="left:209px;top:608.3px;width:183px;padding-left:2px">電子上游<span class="l">-IC-</span>半導體設備</div>
<svg class="ic" viewBox="0 0 19 12" style="left:140px;top:614.3px"><path class="pd" d="M.5 .5H18.5V2L11 10V11.5H8V10L.5 2Z"/></svg>
<div class="c" style="left:139px;top:608.3px;width:69px;text-align:center"><span class="n">-0.71</span></div>
<svg class="ic" viewBox="0 0 19 12" style="left:393px;top:614.3px"><path class="pu" d="M8 .5H11V2L18.5 10V11.5H.5V10L8 2Z"/></svg>
<div class="c" style="left:393px;top:608.3px;width:73px;text-align:center"><span class="n">0.8</span></div>
<svg class="ic" viewBox="0 0 19 12" style="left:468px;top:614.3px"><path class="pd" d="M.5 .5H18.5V2L11 10V11.5H8V10L.5 2Z"/></svg>
<div class="c" style="left:467px;top:608.3px;width:84px;text-align:center"><span class="n">-0.1</span></div>
<div class="c" style="left:2px;top:637.2px;width:50px;text-align:center"><span class="n">2303</span></div>
<div class="c" style="left:53px;top:637.2px;width:85px;text-align:center">聯電</div>
<div class="c" style="left:209px;top:637.2px;width:183px;padding-left:2px">電子上游<span class="l">-IC-</span>代工</div>
<svg class="ic" viewBox="0 0 19 12" style="left:140px;top:643.2px"><path class="pu" d="M8 .5H11V2L18.5 10V11.5H.5V10L8 2Z"/></svg>
<div class="c" style="left:139px;top:637.2px;width:69px;text-align:center"><span class="n">1.3</span></div>
<svg class="ic" viewBox="0 0 19 12" style="left:393px;top:643.2px"><path class="pu" d="M8 .5H11V2L18.5 10V11.5H.5V10L8 2Z"/></svg>
<div class="c" style="left:393px;top:637.2px;width:73px;text-align:center"><span class="n">0.6</span></div>
<svg class="ic" viewBox="0 0 19 12" style="left:468px;top:643.2px"><path class="pd" d="M.5 .5H18.5V2L11 10V11.5H8V10L.5 2Z"/></svg>
<div class="c" style="left:467px;top:637.2px;width:84px;text-align:center"><span class="n">-0.3</span></div>
<div class="c" style="left:2px;top:666.1px;width:50px;text-align:center"><span class="n">3052</span></div>
<div class="c" style="left:53px;top:666.1px;width:85px;text-align:center">夆典</div>
<div class="c" style="left:209px;top:666.1px;width:183px;padding-left:2px">傳產<span class="l">-</span>營建</div>
<svg class="ic" viewBox="0 0 19 12" style="left:140px;top:672.1px"><path class="pd" d="M.5 .5H18.5V2L11 10V11.5H8V10L.5 2Z"/></svg>
<div class="c" style="left:139px;top:666.1px;width:69px;text-align:center"><span class="n">-1.24</span></div>
<svg class="ic" viewBox="0 0 19 12" style="left:393px;top:672.1px"><path class="pu" d="M8 .5H11V2L18.5 10V11.5H.5V10L8 2Z"/></svg>
<div class="c" style="left:393px;top:666.1px;width:73px;text-align:center"><span class="n">0.1</span></div>
<svg class="ic" viewBox="0 0 19 12" style="left:468px;top:672.1px"><rect class="pz" x=".5" y="3.5" width="18" height="6"/></svg>
<div class="c" style="left:467px;top:666.1px;width:84px;text-align:center"><span class="n">0</span></div>
<div class="c" style="left:2px;top:695.0px;width:50px;text-align:center"><span class="n">8996</span></div>
<div class="c" style="left:53px;top:695.0px;width:85px;text-align:center">高力</div>
<div class="c" style="left:209px;top:695.0px;width:183px;padding-left:2px">傳產<span class="l">-</span>電機</div>
<svg class="ic" viewBox="0 0 19 12" style="left:140px;top:701.0px"><path class="pd" d="M.5 .5H18.5V2L11 10V11.5H8V10L.5 2Z"/></svg>
<div class="c" style="left:139px;top:695.0px;width:69px;text-align:center"><span class="n">-5.09</span></div>
<svg class="ic" viewBox="0 0 19 12" style="left:393px;top:701.0px"><path class="pu" d="M8 .5H11V2L18.5 10V11.5H.5V10L8 2Z"/></svg>
<div class="c" style="left:393px;top:695.0px;width:73px;text-align:center"><span class="n">6</span></div>
<svg class="ic" viewBox="0 0 19 12" style="left:468px;top:701.0px"><path class="pu" d="M8 .5H11V2L18.5 10V11.5H.5V10L8 2Z"/></svg>
<div class="c" style="left:467px;top:695.0px;width:84px;text-align:center"><span class="n">0.3</span></div>
<div class="c" style="left:2px;top:723.9px;width:50px;text-align:center"><span class="n">2606</span></div>
<div class="c" style="left:53px;top:723.9px;width:85px;text-align:center">裕民</div>
<div class="c" style="left:209px;top:723.9px;width:183px;padding-left:2px">傳產<span class="l">-</span>航運</div>
<svg class="ic" viewBox="0 0 19 12" style="left:140px;top:729.9px"><path class="pu" d="M8 .5H11V2L18.5 10V11.5H.5V10L8 2Z"/></svg>
<div class="c" style="left:139px;top:723.9px;width:69px;text-align:center"><span class="n">1.16</span></div>
<svg class="ic" viewBox="0 0 19 12" style="left:393px;top:729.9px"><path class="pu" d="M8 .5H11V2L18.5 10V11.5H.5V10L8 2Z"/></svg>
<div class="c" style="left:393px;top:723.9px;width:73px;text-align:center"><span class="n">0.6</span></div>
<svg class="ic" viewBox="0 0 19 12" style="left:468px;top:729.9px"><path class="pd" d="M.5 .5H18.5V2L11 10V11.5H8V10L.5 2Z"/></svg>
<div class="c" style="left:467px;top:723.9px;width:84px;text-align:center"><span class="n">-0.4</span></div>
<div class="c" style="left:2px;top:752.8px;width:50px;text-align:center"><span class="n">2641</span></div>
<div class="c" style="left:53px;top:752.8px;width:85px;text-align:center">正德</div>
<div class="c" style="left:209px;top:752.8px;width:183px;padding-left:2px">傳產<span class="l">-</span>航運</div>
<svg class="ic" viewBox="0 0 19 12" style="left:140px;top:758.8px"><path class="pu" d="M8 .5H11V2L18.5 10V11.5H.5V10L8 2Z"/></svg>
<div class="c" style="left:139px;top:752.8px;width:69px;text-align:center"><span class="n">0.72</span></div>
<svg class="ic" viewBox="0 0 19 12" style="left:393px;top:758.8px"><path class="pu" d="M8 .5H11V2L18.5 10V11.5H.5V10L8 2Z"/></svg>
<div class="c" style="left:393px;top:752.8px;width:73px;text-align:center"><span class="n">0.9</span></div>
<svg class="ic" viewBox="0 0 19 12" style="left:468px;top:758.8px"><rect class="pz" x=".5" y="3.5" width="18" height="6"/></svg>
<div class="c" style="left:467px;top:752.8px;width:84px;text-align:center"><span class="n">0</span></div>
<div class="c" style="left:2px;top:781.7px;width:50px;text-align:center"><span class="n">3162</span></div>
<div class="c" style="left:53px;top:781.7px;width:85px;text-align:center">精確</div>
<div class="c" style="left:209px;top:781.7px;width:183px;padding-left:2px">傳產<span class="l">-</span>自行車</div>
<svg class="ic" viewBox="0 0 19 12" style="left:140px;top:787.7px"><path class="pu" d="M8 .5H11V2L18.5 10V11.5H.5V10L8 2Z"/></svg>
<div class="c" style="left:139px;top:781.7px;width:69px;text-align:center"><span class="n">0.17</span></div>
<svg class="ic" viewBox="0 0 19 12" style="left:393px;top:787.7px"><path class="pd" d="M.5 .5H18.5V2L11 10V11.5H8V10L.5 2Z"/></svg>
<div class="c" style="left:393px;top:781.7px;width:73px;text-align:center"><span class="n">-0.7</span></div>
<svg class="ic" viewBox="0 0 19 12" style="left:468px;top:787.7px"><rect class="pz" x=".5" y="3.5" width="18" height="6"/></svg>
<div class="c" style="left:467px;top:781.7px;width:84px;text-align:center"><span class="n">0</span></div>
<div class="c" style="left:2px;top:810.6px;width:50px;text-align:center"><span class="n">6016</span></div>
<div class="c" style="left:53px;top:810.6px;width:85px;text-align:center">康和證</div>
<div class="c" style="left:209px;top:810.6px;width:183px;padding-left:2px">金融<span class="l">-</span>證券</div>
<svg class="ic" viewBox="0 0 19 12" style="left:140px;top:816.6px"><path class="pd" d="M.5 .5H18.5V2L11 10V11.5H8V10L.5 2Z"/></svg>
<div class="c" style="left:139px;top:810.6px;width:69px;text-align:center"><span class="n">-1.91</span></div>
<svg class="ic" viewBox="0 0 19 12" style="left:393px;top:816.6px"><path class="pu" d="M8 .5H11V2L18.5 10V11.5H.5V10L8 2Z"/></svg>
<div class="c" style="left:393px;top:810.6px;width:73px;text-align:center"><span class="n">0.4</span></div>
<svg class="ic" viewBox="0 0 19 12" style="left:468px;top:816.6px"><rect class="pz" x=".5" y="3.5" width="18" height="6"/></svg>
<div class="c" style="left:467px;top:810.6px;width:84px;text-align:center"><span class="n">0</span></div>
<div class="c" style="left:2px;top:839.5px;width:50px;text-align:center"><span class="n">6026</span></div>
<div class="c" style="left:53px;top:839.5px;width:85px;text-align:center">福邦證</div>
<div class="c" style="left:209px;top:839.5px;width:183px;padding-left:2px">金融<span class="l">-</span>證券</div>
<svg class="ic" viewBox="0 0 19 12" style="left:140px;top:845.5px"><path class="pd" d="M.5 .5H18.5V2L11 10V11.5H8V10L.5 2Z"/></svg>
<div class="c" style="left:139px;top:839.5px;width:69px;text-align:center"><span class="n">-1.05</span></div>
<svg class="ic" viewBox="0 0 19 12" style="left:393px;top:845.5px"><path class="pu" d="M8 .5H11V2L18.5 10V11.5H.5V10L8 2Z"/></svg>
<div class="c" style="left:393px;top:839.5px;width:73px;text-align:center"><span class="n">0.5</span></div>
<svg class="ic" viewBox="0 0 19 12" style="left:468px;top:845.5px"><rect class="pz" x=".5" y="3.5" width="18" height="6"/></svg>
<div class="c" style="left:467px;top:839.5px;width:84px;text-align:center"><span class="n">0</span></div>
<div class="c" style="left:2px;top:868.4px;width:50px;text-align:center"><span class="n">2883</span></div>
<div class="c" style="left:53px;top:868.4px;width:85px;text-align:center">凱基金</div>
<div class="c" style="left:209px;top:868.4px;width:183px;padding-left:2px">金融<span class="l">-</span>金控</div>
<svg class="ic" viewBox="0 0 19 12" style="left:140px;top:874.4px"><path class="pu" d="M8 .5H11V2L18.5 10V11.5H.5V10L8 2Z"/></svg>
<div class="c" style="left:139px;top:868.4px;width:69px;text-align:center"><span class="n">0.29</span></div>
<svg class="ic" viewBox="0 0 19 12" style="left:393px;top:874.4px"><path class="pu" d="M8 .5H11V2L18.5 10V11.5H.5V10L8 2Z"/></svg>
<div class="c" style="left:393px;top:868.4px;width:73px;text-align:center"><span class="n">0.3</span></div>
<svg class="ic" viewBox="0 0 19 12" style="left:468px;top:874.4px"><rect class="pz" x=".5" y="3.5" width="18" height="6"/></svg>
<div class="c" style="left:467px;top:868.4px;width:84px;text-align:center"><span class="n">0</span></div>
<div class="c" style="left:2px;top:897.3px;width:50px;text-align:center"><span class="n">2889</span></div>
<div class="c" style="left:53px;top:897.3px;width:85px;text-align:center">國票金</div>
<div class="c" style="left:209px;top:897.3px;width:183px;padding-left:2px">金融<span class="l">-</span>金控</div>
<svg class="ic" viewBox="0 0 19 12" style="left:140px;top:903.3px"><rect class="pz" x=".5" y="3.5" width="18" height="6"/></svg>
<div class="c" style="left:139px;top:897.3px;width:69px;text-align:center"><span class="n">0</span></div>
<svg class="ic" viewBox="0 0 19 12" style="left:393px;top:903.3px"><path class="pu" d="M8 .5H11V2L18.5 10V11.5H.5V10L8 2Z"/></svg>
<div class="c" style="left:393px;top:897.3px;width:73px;text-align:center"><span class="n">0.1</span></div>
<svg class="ic" viewBox="0 0 19 12" style="left:468px;top:903.3px"><rect class="pz" x=".5" y="3.5" width="18" height="6"/></svg>
<div class="c" style="left:467px;top:897.3px;width:84px;text-align:center"><span class="n">0</span></div>
<div class="a" style="left:580px;top:83px;width:544px;height:27px;background:#5b9bd5"></div>
<div class="k" style="left:577px;top:80px;width:550px;height:1px"></div>
<div class="a" style="left:578px;top:81px;width:548px;height:1px;background:#6f8aa6"></div>
<div class="k" style="left:579px;top:82px;width:546px;height:1px"></div>
<div class="k" style="left:579px;top:110px;width:546px;height:1px"></div>
<div class="k" style="left:579px;top:82px;width:1px;height:29px"></div>
<div class="k" style="left:1124px;top:82px;width:1px;height:29px"></div>
<div class="k" style="left:1126px;top:80px;width:1px;height:33px"></div>
<div class="k" style="left:577px;top:80px;width:1px;height:1509px"></div>
<div class="a" style="left:580px;top:83px;width:544px;height:27px;text-align:center;font-size:19px;line-height:27px;color:#000">接近<span style="font-size:19px;letter-spacing:0;font-weight:normal">5MA</span></div>
<div class="k" style="left:577px;top:112px;width:549px;height:1px"></div>
<div class="a" style="left:580px;top:113px;width:49px;height:28px;background:#ddebf7"></div>
<div class="k" style="left:579px;top:112px;width:50px;height:1px"></div>
<div class="k" style="left:579px;top:141px;width:50px;height:1px"></div>
<div class="k" style="left:579px;top:112px;width:1px;height:30px"></div>
<div class="k" style="left:628px;top:112px;width:1px;height:30px"></div>
<div class="hd" style="left:580px;top:115px;width:48px;height:26px;text-align:center;padding-left:0px;font-size:18.5px;letter-spacing:1px">代號</div>
<div class="a" style="left:631px;top:113px;width:86px;height:28px;background:#ddebf7"></div>
<div class="k" style="left:630px;top:112px;width:87px;height:1px"></div>
<div class="k" style="left:630px;top:141px;width:87px;height:1px"></div>
<div class="k" style="left:630px;top:112px;width:1px;height:30px"></div>
<div class="k" style="left:716px;top:112px;width:1px;height:30px"></div>
<div class="hd" style="left:631px;top:115px;width:85px;height:26px;text-align:center;padding-left:0px;font-size:18.5px;letter-spacing:1px">名稱</div>
<div class="a" style="left:719px;top:113px;width:74px;height:28px;background:#ddebf7"></div>
<div class="k" style="left:718px;top:112px;width:75px;height:1px"></div>
<div class="k" style="left:718px;top:141px;width:75px;height:1px"></div>
<div class="k" style="left:718px;top:112px;width:1px;height:30px"></div>
<div class="k" style="left:792px;top:112px;width:1px;height:30px"></div>
<div class="hd" style="left:719px;top:115px;width:73px;height:26px;text-align:center;padding-left:0px;font-size:18.5px;letter-spacing:0">漲幅%</div>
<div class="a" style="left:795px;top:113px;width:156px;height:28px;background:#ddebf7"></div>
<div class="k" style="left:794px;top:112px;width:157px;height:1px"></div>
<div class="k" style="left:794px;top:141px;width:157px;height:1px"></div>
<div class="k" style="left:794px;top:112px;width:1px;height:30px"></div>
<div class="k" style="left:950px;top:112px;width:1px;height:30px"></div>
<div class="hd" style="left:795px;top:115px;width:155px;height:26px;text-align:left;padding-left:4px;font-size:18.5px;letter-spacing:0">產業分類</div>
<div class="a" style="left:953px;top:113px;width:83px;height:28px;background:#ddebf7"></div>
<div class="k" style="left:952px;top:112px;width:84px;height:1px"></div>
<div class="k" style="left:952px;top:141px;width:84px;height:1px"></div>
<div class="k" style="left:952px;top:112px;width:1px;height:30px"></div>
<div class="k" style="left:1035px;top:112px;width:1px;height:30px"></div>
<div class="hd" style="left:953px;top:115px;width:82px;height:26px;text-align:left;padding-left:3px;font-size:13.5px;letter-spacing:0.6px">外資５日買超佔比</div>
<div class="a" style="left:1038px;top:113px;width:87px;height:28px;background:#ddebf7"></div>
<div class="k" style="left:1037px;top:112px;width:88px;height:1px"></div>
<div class="k" style="left:1037px;top:141px;width:88px;height:1px"></div>
<div class="k" style="left:1037px;top:112px;width:1px;height:30px"></div>
<div class="hd" style="left:1038px;top:115px;width:109px;height:26px;text-align:left;padding-left:2px;font-size:13.5px;letter-spacing:0.6px">投信５日買超佔比</div>
<div class="a" style="left:580px;top:144px;width:545px;height:1443px;background:#fff2cc"></div>
<div class="k" style="left:579px;top:143px;width:546px;height:1px"></div>
<div class="k" style="left:579px;top:143px;width:1px;height:1445px"></div>
<div class="k" style="left:579px;top:1587px;width:546px;height:1px"></div>
<div class="c" style="left:579px;top:145.9px;width:50px;text-align:center"><span class="n">3704</span></div>
<div class="c" style="left:630px;top:145.9px;width:87px;text-align:center">合勤控</div>
<div class="c" style="left:794px;top:145.9px;width:157px;padding-left:2px">電子中游<span class="l">-</span>網通</div>
<svg class="ic" viewBox="0 0 19 12" style="left:719px;top:151.9px"><path class="pd" d="M.5 .5H18.5V2L11 10V11.5H8V10L.5 2Z"/></svg>
<div class="c" style="left:718px;top:145.9px;width:75px;text-align:center"><span class="n">-0.76</span></div>
<svg class="ic" viewBox="0 0 19 12" style="left:952px;top:151.9px"><rect class="pz" x=".5" y="3.5" width="18" height="6"/></svg>
<div class="c" style="left:952px;top:145.9px;width:84px;text-align:center"><span class="n">0</span></div>
<svg class="ic" viewBox="0 0 19 12" style="left:1038px;top:151.9px"><rect class="pz" x=".5" y="3.5" width="18" height="6"/></svg>
<div class="c" style="left:1037px;top:145.9px;width:89px;text-align:center"><span class="n">0</span></div>
<div class="c" style="left:579px;top:174.8px;width:50px;text-align:center"><span class="n">3324</span></div>
<div class="c" style="left:630px;top:174.8px;width:87px;text-align:center">雙鴻</div>
<div class="c" style="left:794px;top:174.8px;width:157px;padding-left:2px">電子中游<span class="l">-</span>散熱零組件</div>
<svg class="ic" viewBox="0 0 19 12" style="left:719px;top:180.8px"><path class="pd" d="M.5 .5H18.5V2L11 10V11.5H8V10L.5 2Z"/></svg>
<div class="c" style="left:718px;top:174.8px;width:75px;text-align:center"><span class="n">-2.32</span></div>
<svg class="ic" viewBox="0 0 19 12" style="left:952px;top:180.8px"><path class="pd" d="M.5 .5H18.5V2L11 10V11.5H8V10L.5 2Z"/></svg>
<div class="c" style="left:952px;top:174.8px;width:84px;text-align:center"><span class="n">-0.7</span></div>
<svg class="ic" viewBox="0 0 19 12" style="left:1038px;top:180.8px"><path class="pd" d="M.5 .5H18.5V2L11 10V11.5H8V10L.5 2Z"/></svg>
<div class="c" style="left:1037px;top:174.8px;width:89px;text-align:center"><span class="n">-0.2</span></div>
<div class="c" style="left:579px;top:203.7px;width:50px;text-align:center"><span class="n">5243</span></div>
<div class="c" style="left:630px;top:203.7px;width:87px;text-align:center">乙盛<span class="l">-KY</span></div>
<div class="c" style="left:794px;top:203.7px;width:157px;padding-left:2px">電子中游<span class="l">-</span>其他</div>
<svg class="ic" viewBox="0 0 19 12" style="left:719px;top:209.7px"><path class="pd" d="M.5 .5H18.5V2L11 10V11.5H8V10L.5 2Z"/></svg>
<div class="c" style="left:718px;top:203.7px;width:75px;text-align:center"><span class="n">-2.01</span></div>
<svg class="ic" viewBox="0 0 19 12" style="left:952px;top:209.7px"><path class="pu" d="M8 .5H11V2L18.5 10V11.5H.5V10L8 2Z"/></svg>
<div class="c" style="left:952px;top:203.7px;width:84px;text-align:center"><span class="n">2.1</span></div>
<svg class="ic" viewBox="0 0 19 12" style="left:1038px;top:209.7px"><path class="pu" d="M8 .5H11V2L18.5 10V11.5H.5V10L8 2Z"/></svg>
<div class="c" style="left:1037px;top:203.7px;width:89px;text-align:center"><span class="n">0.1</span></div>
<div class="c" style="left:579px;top:232.6px;width:50px;text-align:center"><span class="n">2405</span></div>
<div class="c" style="left:630px;top:232.6px;width:87px;text-align:center">輔信</div>
<div class="c" style="left:794px;top:232.6px;width:157px;padding-left:2px">電子中游<span class="l">-</span>主機板</div>
<svg class="ic" viewBox="0 0 19 12" style="left:719px;top:238.6px"><path class="pd" d="M.5 .5H18.5V2L11 10V11.5H8V10L.5 2Z"/></svg>
<div class="c" style="left:718px;top:232.6px;width:75px;text-align:center"><span class="n">-2.54</span></div>
<svg class="ic" viewBox="0 0 19 12" style="left:952px;top:238.6px"><path class="pd" d="M.5 .5H18.5V2L11 10V11.5H8V10L.5 2Z"/></svg>
<div class="c" style="left:952px;top:232.6px;width:84px;text-align:center"><span class="n">-0.3</span></div>
<svg class="ic" viewBox="0 0 19 12" style="left:1038px;top:238.6px"><rect class="pz" x=".5" y="3.5" width="18" height="6"/></svg>
<div class="c" style="left:1037px;top:232.6px;width:89px;text-align:center"><span class="n">0</span></div>
<div class="c" style="left:579px;top:261.5px;width:50px;text-align:center"><span class="n">2412</span></div>
<div class="c" style="left:630px;top:261.5px;width:87px;text-align:center">中華電</div>
<div class="c" style="left:794px;top:261.5px;width:157px;padding-left:2px">電子下游<span class="l">-</span>電信服務</div>
<svg class="ic" viewBox="0 0 19 12" style="left:719px;top:267.5px"><path class="pu" d="M8 .5H11V2L18.5 10V11.5H.5V10L8 2Z"/></svg>
<div class="c" style="left:718px;top:261.5px;width:75px;text-align:center"><span class="n">0.38</span></div>
<svg class="ic" viewBox="0 0 19 12" style="left:952px;top:267.5px"><path class="pd" d="M.5 .5H18.5V2L11 10V11.5H8V10L.5 2Z"/></svg>
<div class="c" style="left:952px;top:261.5px;width:84px;text-align:center"><span class="n">-0.2</span></div>
<svg class="ic" viewBox="0 0 19 12" style="left:1038px;top:267.5px"><rect class="pz" x=".5" y="3.5" width="18" height="6"/></svg>
<div class="c" style="left:1037px;top:261.5px;width:89px;text-align:center"><span class="n">0</span></div>
<div class="c" style="left:579px;top:290.4px;width:50px;text-align:center"><span class="n">8033</span></div>
<div class="c" style="left:630px;top:290.4px;width:87px;text-align:center">雷虎</div>
<div class="c" style="left:794px;top:290.4px;width:157px;padding-left:2px">電子下游<span class="l">-</span>消費電子</div>
<svg class="ic" viewBox="0 0 19 12" style="left:719px;top:296.4px"><rect class="pz" x=".5" y="3.5" width="18" height="6"/></svg>
<div class="c" style="left:718px;top:290.4px;width:75px;text-align:center"><span class="n">0</span></div>
<svg class="ic" viewBox="0 0 19 12" style="left:952px;top:296.4px"><rect class="pz" x=".5" y="3.5" width="18" height="6"/></svg>
<div class="c" style="left:952px;top:290.4px;width:84px;text-align:center"><span class="n">0</span></div>
<svg class="ic" viewBox="0 0 19 12" style="left:1038px;top:296.4px"><rect class="pz" x=".5" y="3.5" width="18" height="6"/></svg>
<div class="c" style="left:1037px;top:290.4px;width:89px;text-align:center"><span class="n">0</span></div>
<div class="c" style="left:579px;top:319.3px;width:50px;text-align:center"><span class="n">5483</span></div>
<div class="c" style="left:630px;top:319.3px;width:87px;text-align:center">中美晶</div>
<div class="c" style="left:794px;top:319.3px;width:157px;padding-left:2px">電子下游<span class="l">-</span>太陽能</div>
<svg class="ic" viewBox="0 0 19 12" style="left:719px;top:325.3px"><path class="pd" d="M.5 .5H18.5V2L11 10V11.5H8V10L.5 2Z"/></svg>
<div class="c" style="left:718px;top:319.3px;width:75px;text-align:center"><span class="n">-1.67</span></div>
<svg class="ic" viewBox="0 0 19 12" style="left:952px;top:325.3px"><path class="pu" d="M8 .5H11V2L18.5 10V11.5H.5V10L8 2Z"/></svg>
<div class="c" style="left:952px;top:319.3px;width:84px;text-align:center"><span class="n">0.6</span></div>
<svg class="ic" viewBox="0 0 19 12" style="left:1038px;top:325.3px"><path class="pd" d="M.5 .5H18.5V2L11 10V11.5H8V10L.5 2Z"/></svg>
<div class="c" style="left:1037px;top:319.3px;width:89px;text-align:center"><span class="n">-0.4</span></div>
<div class="c" style="left:579px;top:348.2px;width:50px;text-align:center"><span class="n">3605</span></div>
<div class="c" style="left:630px;top:348.2px;width:87px;text-align:center">宏致</div>
<div class="c" style="left:794px;top:348.2px;width:157px;padding-left:2px">電子上游<span class="l">-</span>連接元件</div>
<svg class="ic" viewBox="0 0 19 12" style="left:719px;top:354.2px"><path class="pd" d="M.5 .5H18.5V2L11 10V11.5H8V10L.5 2Z"/></svg>
<div class="c" style="left:718px;top:348.2px;width:75px;text-align:center"><span class="n">-1.59</span></div>
<svg class="ic" viewBox="0 0 19 12" style="left:952px;top:354.2px"><path class="pu" d="M8 .5H11V2L18.5 10V11.5H.5V10L8 2Z"/></svg>
<div class="c" style="left:952px;top:348.2px;width:84px;text-align:center"><span class="n">0.3</span></div>
<svg class="ic" viewBox="0 0 19 12" style="left:1038px;top:354.2px"><rect class="pz" x=".5" y="3.5" width="18" height="6"/></svg>
<div class="c" style="left:1037px;top:348.2px;width:89px;text-align:center"><span class="n">0</span></div>
<div class="c" style="left:579px;top:377.1px;width:50px;text-align:center"><span class="n">3090</span></div>
<div class="c" style="left:630px;top:377.1px;width:87px;text-align:center">日電貿</div>
<div class="c" style="left:794px;top:377.1px;width:157px;padding-left:2px">電子上游<span class="l">-</span>被動元件</div>
<svg class="ic" viewBox="0 0 19 12" style="left:719px;top:383.1px"><path class="pd" d="M.5 .5H18.5V2L11 10V11.5H8V10L.5 2Z"/></svg>
<div class="c" style="left:718px;top:377.1px;width:75px;text-align:center"><span class="n">-0.97</span></div>
<svg class="ic" viewBox="0 0 19 12" style="left:952px;top:383.1px"><path class="pd" d="M.5 .5H18.5V2L11 10V11.5H8V10L.5 2Z"/></svg>
<div class="c" style="left:952px;top:377.1px;width:84px;text-align:center"><span class="n">-0.5</span></div>
<svg class="ic" viewBox="0 0 19 12" style="left:1038px;top:383.1px"><path class="pd" d="M.5 .5H18.5V2L11 10V11.5H8V10L.5 2Z"/></svg>
<div class="c" style="left:1037px;top:377.1px;width:89px;text-align:center"><span class="n">-0.9</span></div>
<div class="c" style="left:579px;top:406.0px;width:50px;text-align:center"><span class="n">3026</span></div>
<div class="c" style="left:630px;top:406.0px;width:87px;text-align:center">禾伸堂</div>
<div class="c" style="left:794px;top:406.0px;width:157px;padding-left:2px">電子上游<span class="l">-</span>被動元件</div>
<svg class="ic" viewBox="0 0 19 12" style="left:719px;top:412.0px"><path class="pd" d="M.5 .5H18.5V2L11 10V11.5H8V10L.5 2Z"/></svg>
<div class="c" style="left:718px;top:406.0px;width:75px;text-align:center"><span class="n">-1.4</span></div>
<svg class="ic" viewBox="0 0 19 12" style="left:952px;top:412.0px"><path class="pd" d="M.5 .5H18.5V2L11 10V11.5H8V10L.5 2Z"/></svg>
<div class="c" style="left:952px;top:406.0px;width:84px;text-align:center"><span class="n">-0.1</span></div>
<svg class="ic" viewBox="0 0 19 12" style="left:1038px;top:412.0px"><rect class="pz" x=".5" y="3.5" width="18" height="6"/></svg>
<div class="c" style="left:1037px;top:406.0px;width:89px;text-align:center"><span class="n">0</span></div>
<div class="c" style="left:579px;top:434.9px;width:50px;text-align:center"><span class="n">4927</span></div>
<div class="c" style="left:630px;top:434.9px;width:87px;text-align:center">泰鼎<span class="l">-KY</span></div>
<div class="c" style="left:794px;top:434.9px;width:157px;padding-left:2px">電子上游<span class="l">-PCB-</span>製造</div>
<svg class="ic" viewBox="0 0 19 12" style="left:719px;top:440.9px"><path class="pu" d="M8 .5H11V2L18.5 10V11.5H.5V10L8 2Z"/></svg>
<div class="c" style="left:718px;top:434.9px;width:75px;text-align:center"><span class="n">1.48</span></div>
<svg class="ic" viewBox="0 0 19 12" style="left:952px;top:440.9px"><path class="pu" d="M8 .5H11V2L18.5 10V11.5H.5V10L8 2Z"/></svg>
<div class="c" style="left:952px;top:434.9px;width:84px;text-align:center"><span class="n">0.2</span></div>
<svg class="ic" viewBox="0 0 19 12" style="left:1038px;top:440.9px"><rect class="pz" x=".5" y="3.5" width="18" height="6"/></svg>
<div class="c" style="left:1037px;top:434.9px;width:89px;text-align:center"><span class="n">0</span></div>
<div class="c" style="left:579px;top:463.8px;width:50px;text-align:center"><span class="n">2467</span></div>
<div class="c" style="left:630px;top:463.8px;width:87px;text-align:center">志聖</div>
<div class="c" style="left:794px;top:463.8px;width:157px;padding-left:2px">電子上游<span class="l">-PCB-</span>材料設備</div>
<svg class="ic" viewBox="0 0 19 12" style="left:719px;top:469.8px"><path class="pu" d="M8 .5H11V2L18.5 10V11.5H.5V10L8 2Z"/></svg>
<div class="c" style="left:718px;top:463.8px;width:75px;text-align:center"><span class="n">0.79</span></div>
<svg class="ic" viewBox="0 0 19 12" style="left:952px;top:469.8px"><path class="pd" d="M.5 .5H18.5V2L11 10V11.5H8V10L.5 2Z"/></svg>
<div class="c" style="left:952px;top:463.8px;width:84px;text-align:center"><span class="n">-0.6</span></div>
<svg class="ic" viewBox="0 0 19 12" style="left:1038px;top:469.8px"><rect class="pz" x=".5" y="3.5" width="18" height="6"/></svg>
<div class="c" style="left:1037px;top:463.8px;width:89px;text-align:center"><span class="n">0</span></div>
<div class="c" style="left:579px;top:492.7px;width:50px;text-align:center"><span class="n">2340</span></div>
<div class="c" style="left:630px;top:492.7px;width:87px;text-align:center">台亞</div>
<div class="c" style="left:794px;top:492.7px;width:157px;padding-left:2px">電子上游<span class="l">-LED</span>照明及光電</div>
<svg class="ic" viewBox="0 0 19 12" style="left:719px;top:498.7px"><path class="pd" d="M.5 .5H18.5V2L11 10V11.5H8V10L.5 2Z"/></svg>
<div class="c" style="left:718px;top:492.7px;width:75px;text-align:center"><span class="n">-1.94</span></div>
<svg class="ic" viewBox="0 0 19 12" style="left:952px;top:498.7px"><path class="pd" d="M.5 .5H18.5V2L11 10V11.5H8V10L.5 2Z"/></svg>
<div class="c" style="left:952px;top:492.7px;width:84px;text-align:center"><span class="n">-0.2</span></div>
<svg class="ic" viewBox="0 0 19 12" style="left:1038px;top:498.7px"><rect class="pz" x=".5" y="3.5" width="18" height="6"/></svg>
<div class="c" style="left:1037px;top:492.7px;width:89px;text-align:center"><span class="n">0</span></div>
<div class="c" style="left:579px;top:521.6px;width:50px;text-align:center"><span class="n">3529</span></div>
<div class="c" style="left:630px;top:521.6px;width:87px;text-align:center">力旺</div>
<div class="c" style="left:794px;top:521.6px;width:157px;padding-left:2px">電子上游<span class="l">-IP/ASIC</span></div>
<svg class="ic" viewBox="0 0 19 12" style="left:719px;top:527.6px"><path class="pd" d="M.5 .5H18.5V2L11 10V11.5H8V10L.5 2Z"/></svg>
<div class="c" style="left:718px;top:521.6px;width:75px;text-align:center"><span class="n">-0.59</span></div>
<svg class="ic" viewBox="0 0 19 12" style="left:952px;top:527.6px"><path class="pu" d="M8 .5H11V2L18.5 10V11.5H.5V10L8 2Z"/></svg>
<div class="c" style="left:952px;top:521.6px;width:84px;text-align:center"><span class="n">0.2</span></div>
<svg class="ic" viewBox="0 0 19 12" style="left:1038px;top:527.6px"><path class="pd" d="M.5 .5H18.5V2L11 10V11.5H8V10L.5 2Z"/></svg>
<div class="c" style="left:1037px;top:521.6px;width:89px;text-align:center"><span class="n">-0.2</span></div>
<div class="c" style="left:579px;top:550.5px;width:50px;text-align:center"><span class="n">6548</span></div>
<div class="c" style="left:630px;top:550.5px;width:87px;text-align:center">長科<span class="l">*</span></div>
<div class="c" style="left:794px;top:550.5px;width:157px;padding-left:2px">電子上游<span class="l">-IC-</span>導線架</div>
<svg class="ic" viewBox="0 0 19 12" style="left:719px;top:556.5px"><path class="pd" d="M.5 .5H18.5V2L11 10V11.5H8V10L.5 2Z"/></svg>
<div class="c" style="left:718px;top:550.5px;width:75px;text-align:center"><span class="n">-0.83</span></div>
<svg class="ic" viewBox="0 0 19 12" style="left:952px;top:556.5px"><path class="pu" d="M8 .5H11V2L18.5 10V11.5H.5V10L8 2Z"/></svg>
<div class="c" style="left:952px;top:550.5px;width:84px;text-align:center"><span class="n">16.1</span></div>
<svg class="ic" viewBox="0 0 19 12" style="left:1038px;top:556.5px"><path class="pd" d="M.5 .5H18.5V2L11 10V11.5H8V10L.5 2Z"/></svg>
<div class="c" style="left:1037px;top:550.5px;width:89px;text-align:center"><span class="n">-0.6</span></div>
<div class="c" style="left:579px;top:579.4px;width:50px;text-align:center"><span class="n">8070</span></div>
<div class="c" style="left:630px;top:579.4px;width:87px;text-align:center">長華<span class="l">*</span></div>
<div class="c" style="left:794px;top:579.4px;width:157px;padding-left:2px">電子上游<span class="l">-IC-</span>導線架</div>
<svg class="ic" viewBox="0 0 19 12" style="left:719px;top:585.4px"><path class="pd" d="M.5 .5H18.5V2L11 10V11.5H8V10L.5 2Z"/></svg>
<div class="c" style="left:718px;top:579.4px;width:75px;text-align:center"><span class="n">-1.68</span></div>
<svg class="ic" viewBox="0 0 19 12" style="left:952px;top:585.4px"><path class="pu" d="M8 .5H11V2L18.5 10V11.5H.5V10L8 2Z"/></svg>
<div class="c" style="left:952px;top:579.4px;width:84px;text-align:center"><span class="n">15</span></div>
<svg class="ic" viewBox="0 0 19 12" style="left:1038px;top:585.4px"><path class="pd" d="M.5 .5H18.5V2L11 10V11.5H8V10L.5 2Z"/></svg>
<div class="c" style="left:1037px;top:579.4px;width:89px;text-align:center"><span class="n">-1.1</span></div>
<div class="c" style="left:579px;top:608.3px;width:50px;text-align:center"><span class="n">3028</span></div>
<div class="c" style="left:630px;top:608.3px;width:87px;text-align:center">增你強</div>
<div class="c" style="left:794px;top:608.3px;width:157px;padding-left:2px">電子上游<span class="l">-IC-</span>通路</div>
<svg class="ic" viewBox="0 0 19 12" style="left:719px;top:614.3px"><path class="pd" d="M.5 .5H18.5V2L11 10V11.5H8V10L.5 2Z"/></svg>
<div class="c" style="left:718px;top:608.3px;width:75px;text-align:center"><span class="n">-1.1</span></div>
<svg class="ic" viewBox="0 0 19 12" style="left:952px;top:614.3px"><path class="pd" d="M.5 .5H18.5V2L11 10V11.5H8V10L.5 2Z"/></svg>
<div class="c" style="left:952px;top:608.3px;width:84px;text-align:center"><span class="n">-0.4</span></div>
<svg class="ic" viewBox="0 0 19 12" style="left:1038px;top:614.3px"><rect class="pz" x=".5" y="3.5" width="18" height="6"/></svg>
<div class="c" style="left:1037px;top:608.3px;width:89px;text-align:center"><span class="n">0</span></div>
<div class="c" style="left:579px;top:637.2px;width:50px;text-align:center"><span class="n">3227</span></div>
<div class="c" style="left:630px;top:637.2px;width:87px;text-align:center">原相</div>
<div class="c" style="left:794px;top:637.2px;width:157px;padding-left:2px">電子上游<span class="l">-IC-</span>設計</div>
<svg class="ic" viewBox="0 0 19 12" style="left:719px;top:643.2px"><path class="pd" d="M.5 .5H18.5V2L11 10V11.5H8V10L.5 2Z"/></svg>
<div class="c" style="left:718px;top:637.2px;width:75px;text-align:center"><span class="n">-1.18</span></div>
<svg class="ic" viewBox="0 0 19 12" style="left:952px;top:643.2px"><rect class="pz" x=".5" y="3.5" width="18" height="6"/></svg>
<div class="c" style="left:952px;top:637.2px;width:84px;text-align:center"><span class="n">0</span></div>
<svg class="ic" viewBox="0 0 19 12" style="left:1038px;top:643.2px"><path class="pd" d="M.5 .5H18.5V2L11 10V11.5H8V10L.5 2Z"/></svg>
<div class="c" style="left:1037px;top:637.2px;width:89px;text-align:center"><span class="n">-0.2</span></div>
<div class="c" style="left:579px;top:666.1px;width:50px;text-align:center"><span class="n">8081</span></div>
<div class="c" style="left:630px;top:666.1px;width:87px;text-align:center">致新</div>
<div class="c" style="left:794px;top:666.1px;width:157px;padding-left:2px">電子上游<span class="l">-IC-</span>設計</div>
<svg class="ic" viewBox="0 0 19 12" style="left:719px;top:672.1px"><path class="pd" d="M.5 .5H18.5V2L11 10V11.5H8V10L.5 2Z"/></svg>
<div class="c" style="left:718px;top:666.1px;width:75px;text-align:center"><span class="n">-2.25</span></div>
<svg class="ic" viewBox="0 0 19 12" style="left:952px;top:672.1px"><path class="pu" d="M8 .5H11V2L18.5 10V11.5H.5V10L8 2Z"/></svg>
<div class="c" style="left:952px;top:666.1px;width:84px;text-align:center"><span class="n">0.6</span></div>
<svg class="ic" viewBox="0 0 19 12" style="left:1038px;top:672.1px"><path class="pu" d="M8 .5H11V2L18.5 10V11.5H.5V10L8 2Z"/></svg>
<div class="c" style="left:1037px;top:666.1px;width:89px;text-align:center"><span class="n">0.4</span></div>
<div class="c" style="left:579px;top:695.0px;width:50px;text-align:center"><span class="n">6962</span></div>
<div class="c" style="left:630px;top:695.0px;width:87px;text-align:center">奕力<span class="l">-KY</span></div>
<div class="c" style="left:794px;top:695.0px;width:157px;padding-left:2px">電子上游<span class="l">-IC-</span>設計</div>
<svg class="ic" viewBox="0 0 19 12" style="left:719px;top:701.0px"><path class="pd" d="M.5 .5H18.5V2L11 10V11.5H8V10L.5 2Z"/></svg>
<div class="c" style="left:718px;top:695.0px;width:75px;text-align:center"><span class="n">-1.42</span></div>
<svg class="ic" viewBox="0 0 19 12" style="left:952px;top:701.0px"><path class="pu" d="M8 .5H11V2L18.5 10V11.5H.5V10L8 2Z"/></svg>
<div class="c" style="left:952px;top:695.0px;width:84px;text-align:center"><span class="n">0.1</span></div>
<svg class="ic" viewBox="0 0 19 12" style="left:1038px;top:701.0px"><rect class="pz" x=".5" y="3.5" width="18" height="6"/></svg>
<div class="c" style="left:1037px;top:695.0px;width:89px;text-align:center"><span class="n">0</span></div>
<div class="c" style="left:579px;top:723.9px;width:50px;text-align:center"><span class="n">6788</span></div>
<div class="c" style="left:630px;top:723.9px;width:87px;text-align:center">華景電</div>
<div class="c" style="left:794px;top:723.9px;width:157px;padding-left:2px">電子上游<span class="l">-IC-</span>半導體設備</div>
<svg class="ic" viewBox="0 0 19 12" style="left:719px;top:729.9px"><path class="pu" d="M8 .5H11V2L18.5 10V11.5H.5V10L8 2Z"/></svg>
<div class="c" style="left:718px;top:723.9px;width:75px;text-align:center"><span class="n">0.58</span></div>
<svg class="ic" viewBox="0 0 19 12" style="left:952px;top:729.9px"><path class="pd" d="M.5 .5H18.5V2L11 10V11.5H8V10L.5 2Z"/></svg>
<div class="c" style="left:952px;top:723.9px;width:84px;text-align:center"><span class="n">-1.9</span></div>
<svg class="ic" viewBox="0 0 19 12" style="left:1038px;top:729.9px"><path class="pu" d="M8 .5H11V2L18.5 10V11.5H.5V10L8 2Z"/></svg>
<div class="c" style="left:1037px;top:723.9px;width:89px;text-align:center"><span class="n">0.1</span></div>
<div class="c" style="left:579px;top:752.8px;width:50px;text-align:center"><span class="n">3680</span></div>
<div class="c" style="left:630px;top:752.8px;width:87px;text-align:center">家登</div>
<div class="c" style="left:794px;top:752.8px;width:157px;padding-left:2px">電子上游<span class="l">-IC-</span>半導體設備</div>
<svg class="ic" viewBox="0 0 19 12" style="left:719px;top:758.8px"><path class="pd" d="M.5 .5H18.5V2L11 10V11.5H8V10L.5 2Z"/></svg>
<div class="c" style="left:718px;top:752.8px;width:75px;text-align:center"><span class="n">-0.71</span></div>
<svg class="ic" viewBox="0 0 19 12" style="left:952px;top:758.8px"><path class="pu" d="M8 .5H11V2L18.5 10V11.5H.5V10L8 2Z"/></svg>
<div class="c" style="left:952px;top:752.8px;width:84px;text-align:center"><span class="n">0.8</span></div>
<svg class="ic" viewBox="0 0 19 12" style="left:1038px;top:758.8px"><path class="pd" d="M.5 .5H18.5V2L11 10V11.5H8V10L.5 2Z"/></svg>
<div class="c" style="left:1037px;top:752.8px;width:89px;text-align:center"><span class="n">-0.1</span></div>
<div class="c" style="left:579px;top:781.7px;width:50px;text-align:center"><span class="n">2303</span></div>
<div class="c" style="left:630px;top:781.7px;width:87px;text-align:center">聯電</div>
<div class="c" style="left:794px;top:781.7px;width:157px;padding-left:2px">電子上游<span class="l">-IC-</span>代工</div>
<svg class="ic" viewBox="0 0 19 12" style="left:719px;top:787.7px"><path class="pu" d="M8 .5H11V2L18.5 10V11.5H.5V10L8 2Z"/></svg>
<div class="c" style="left:718px;top:781.7px;width:75px;text-align:center"><span class="n">1.3</span></div>
<svg class="ic" viewBox="0 0 19 12" style="left:952px;top:787.7px"><path class="pu" d="M8 .5H11V2L18.5 10V11.5H.5V10L8 2Z"/></svg>
<div class="c" style="left:952px;top:781.7px;width:84px;text-align:center"><span class="n">0.6</span></div>
<svg class="ic" viewBox="0 0 19 12" style="left:1038px;top:787.7px"><path class="pd" d="M.5 .5H18.5V2L11 10V11.5H8V10L.5 2Z"/></svg>
<div class="c" style="left:1037px;top:781.7px;width:89px;text-align:center"><span class="n">-0.3</span></div>
<div class="c" style="left:579px;top:810.6px;width:50px;text-align:center"><span class="n">2515</span></div>
<div class="c" style="left:630px;top:810.6px;width:87px;text-align:center">中工</div>
<div class="c" style="left:794px;top:810.6px;width:157px;padding-left:2px">傳產<span class="l">-</span>營建</div>
<svg class="ic" viewBox="0 0 19 12" style="left:719px;top:816.6px"><path class="pd" d="M.5 .5H18.5V2L11 10V11.5H8V10L.5 2Z"/></svg>
<div class="c" style="left:718px;top:810.6px;width:75px;text-align:center"><span class="n">-2.55</span></div>
<svg class="ic" viewBox="0 0 19 12" style="left:952px;top:816.6px"><path class="pd" d="M.5 .5H18.5V2L11 10V11.5H8V10L.5 2Z"/></svg>
<div class="c" style="left:952px;top:810.6px;width:84px;text-align:center"><span class="n">-0.2</span></div>
<svg class="ic" viewBox="0 0 19 12" style="left:1038px;top:816.6px"><rect class="pz" x=".5" y="3.5" width="18" height="6"/></svg>
<div class="c" style="left:1037px;top:810.6px;width:89px;text-align:center"><span class="n">0</span></div>
<div class="c" style="left:579px;top:839.5px;width:50px;text-align:center"><span class="n">3052</span></div>
<div class="c" style="left:630px;top:839.5px;width:87px;text-align:center">夆典</div>
<div class="c" style="left:794px;top:839.5px;width:157px;padding-left:2px">傳產<span class="l">-</span>營建</div>
<svg class="ic" viewBox="0 0 19 12" style="left:719px;top:845.5px"><path class="pd" d="M.5 .5H18.5V2L11 10V11.5H8V10L.5 2Z"/></svg>
<div class="c" style="left:718px;top:839.5px;width:75px;text-align:center"><span class="n">-1.24</span></div>
<svg class="ic" viewBox="0 0 19 12" style="left:952px;top:845.5px"><path class="pu" d="M8 .5H11V2L18.5 10V11.5H.5V10L8 2Z"/></svg>
<div class="c" style="left:952px;top:839.5px;width:84px;text-align:center"><span class="n">0.1</span></div>
<svg class="ic" viewBox="0 0 19 12" style="left:1038px;top:845.5px"><rect class="pz" x=".5" y="3.5" width="18" height="6"/></svg>
<div class="c" style="left:1037px;top:839.5px;width:89px;text-align:center"><span class="n">0</span></div>
<div class="c" style="left:579px;top:868.4px;width:50px;text-align:center"><span class="n">8996</span></div>
<div class="c" style="left:630px;top:868.4px;width:87px;text-align:center">高力</div>
<div class="c" style="left:794px;top:868.4px;width:157px;padding-left:2px">傳產<span class="l">-</span>電機</div>
<svg class="ic" viewBox="0 0 19 12" style="left:719px;top:874.4px"><path class="pd" d="M.5 .5H18.5V2L11 10V11.5H8V10L.5 2Z"/></svg>
<div class="c" style="left:718px;top:868.4px;width:75px;text-align:center"><span class="n">-5.09</span></div>
<svg class="ic" viewBox="0 0 19 12" style="left:952px;top:874.4px"><path class="pu" d="M8 .5H11V2L18.5 10V11.5H.5V10L8 2Z"/></svg>
<div class="c" style="left:952px;top:868.4px;width:84px;text-align:center"><span class="n">6</span></div>
<svg class="ic" viewBox="0 0 19 12" style="left:1038px;top:874.4px"><path class="pu" d="M8 .5H11V2L18.5 10V11.5H.5V10L8 2Z"/></svg>
<div class="c" style="left:1037px;top:868.4px;width:89px;text-align:center"><span class="n">0.3</span></div>
<div class="c" style="left:579px;top:897.3px;width:50px;text-align:center"><span class="n">2606</span></div>
<div class="c" style="left:630px;top:897.3px;width:87px;text-align:center">裕民</div>
<div class="c" style="left:794px;top:897.3px;width:157px;padding-left:2px">傳產<span class="l">-</span>航運</div>
<svg class="ic" viewBox="0 0 19 12" style="left:719px;top:903.3px"><path class="pu" d="M8 .5H11V2L18.5 10V11.5H.5V10L8 2Z"/></svg>
<div class="c" style="left:718px;top:897.3px;width:75px;text-align:center"><span class="n">1.16</span></div>
<svg class="ic" viewBox="0 0 19 12" style="left:952px;top:903.3px"><path class="pu" d="M8 .5H11V2L18.5 10V11.5H.5V10L8 2Z"/></svg>
<div class="c" style="left:952px;top:897.3px;width:84px;text-align:center"><span class="n">0.6</span></div>
<svg class="ic" viewBox="0 0 19 12" style="left:1038px;top:903.3px"><path class="pd" d="M.5 .5H18.5V2L11 10V11.5H8V10L.5 2Z"/></svg>
<div class="c" style="left:1037px;top:897.3px;width:89px;text-align:center"><span class="n">-0.4</span></div>
<div class="c" style="left:579px;top:926.2px;width:50px;text-align:center"><span class="n">2641</span></div>
<div class="c" style="left:630px;top:926.2px;width:87px;text-align:center">正德</div>
<div class="c" style="left:794px;top:926.2px;width:157px;padding-left:2px">傳產<span class="l">-</span>航運</div>
<svg class="ic" viewBox="0 0 19 12" style="left:719px;top:932.2px"><path class="pu" d="M8 .5H11V2L18.5 10V11.5H.5V10L8 2Z"/></svg>
<div class="c" style="left:718px;top:926.2px;width:75px;text-align:center"><span class="n">0.72</span></div>
<svg class="ic" viewBox="0 0 19 12" style="left:952px;top:932.2px"><path class="pu" d="M8 .5H11V2L18.5 10V11.5H.5V10L8 2Z"/></svg>
<div class="c" style="left:952px;top:926.2px;width:84px;text-align:center"><span class="n">0.9</span></div>
<svg class="ic" viewBox="0 0 19 12" style="left:1038px;top:932.2px"><rect class="pz" x=".5" y="3.5" width="18" height="6"/></svg>
<div class="c" style="left:1037px;top:926.2px;width:89px;text-align:center"><span class="n">0</span></div>
<div class="c" style="left:579px;top:955.1px;width:50px;text-align:center"><span class="n">6757</span></div>
<div class="c" style="left:630px;top:955.1px;width:87px;text-align:center">台灣虎航</div>
<div class="c" style="left:794px;top:955.1px;width:157px;padding-left:2px">傳產<span class="l">-</span>航運</div>
<svg class="ic" viewBox="0 0 19 12" style="left:719px;top:961.1px"><path class="pd" d="M.5 .5H18.5V2L11 10V11.5H8V10L.5 2Z"/></svg>
<div class="c" style="left:718px;top:955.1px;width:75px;text-align:center"><span class="n">-0.6</span></div>
<svg class="ic" viewBox="0 0 19 12" style="left:952px;top:961.1px"><path class="pd" d="M.5 .5H18.5V2L11 10V11.5H8V10L.5 2Z"/></svg>
<div class="c" style="left:952px;top:955.1px;width:84px;text-align:center"><span class="n">-0.1</span></div>
<svg class="ic" viewBox="0 0 19 12" style="left:1038px;top:961.1px"><rect class="pz" x=".5" y="3.5" width="18" height="6"/></svg>
<div class="c" style="left:1037px;top:955.1px;width:89px;text-align:center"><span class="n">0</span></div>
<div class="c" style="left:579px;top:984.0px;width:50px;text-align:center"><span class="n">2204</span></div>
<div class="c" style="left:630px;top:984.0px;width:87px;text-align:center">中華</div>
<div class="c" style="left:794px;top:984.0px;width:157px;padding-left:2px">傳產<span class="l">-</span>汽車</div>
<svg class="ic" viewBox="0 0 19 12" style="left:719px;top:990.0px"><rect class="pz" x=".5" y="3.5" width="18" height="6"/></svg>
<div class="c" style="left:718px;top:984.0px;width:75px;text-align:center"><span class="n">0</span></div>
<svg class="ic" viewBox="0 0 19 12" style="left:952px;top:990.0px"><path class="pd" d="M.5 .5H18.5V2L11 10V11.5H8V10L.5 2Z"/></svg>
<div class="c" style="left:952px;top:984.0px;width:84px;text-align:center"><span class="n">-0.2</span></div>
<svg class="ic" viewBox="0 0 19 12" style="left:1038px;top:990.0px"><path class="pd" d="M.5 .5H18.5V2L11 10V11.5H8V10L.5 2Z"/></svg>
<div class="c" style="left:1037px;top:984.0px;width:89px;text-align:center"><span class="n">-0.1</span></div>
<div class="c" style="left:579px;top:1012.9px;width:50px;text-align:center"><span class="n">3162</span></div>
<div class="c" style="left:630px;top:1012.9px;width:87px;text-align:center">精確</div>
<div class="c" style="left:794px;top:1012.9px;width:157px;padding-left:2px">傳產<span class="l">-</span>自行車</div>
<svg class="ic" viewBox="0 0 19 12" style="left:719px;top:1018.9px"><path class="pu" d="M8 .5H11V2L18.5 10V11.5H.5V10L8 2Z"/></svg>
<div class="c" style="left:718px;top:1012.9px;width:75px;text-align:center"><span class="n">0.17</span></div>
<svg class="ic" viewBox="0 0 19 12" style="left:952px;top:1018.9px"><path class="pd" d="M.5 .5H18.5V2L11 10V11.5H8V10L.5 2Z"/></svg>
<div class="c" style="left:952px;top:1012.9px;width:84px;text-align:center"><span class="n">-0.7</span></div>
<svg class="ic" viewBox="0 0 19 12" style="left:1038px;top:1018.9px"><rect class="pz" x=".5" y="3.5" width="18" height="6"/></svg>
<div class="c" style="left:1037px;top:1012.9px;width:89px;text-align:center"><span class="n">0</span></div>
<div class="c" style="left:579px;top:1041.8px;width:50px;text-align:center"><span class="n">2903</span></div>
<div class="c" style="left:630px;top:1041.8px;width:87px;text-align:center">遠百</div>
<div class="c" style="left:794px;top:1041.8px;width:157px;padding-left:2px">傳產<span class="l">-</span>百貨</div>
<svg class="ic" viewBox="0 0 19 12" style="left:719px;top:1047.8px"><path class="pu" d="M8 .5H11V2L18.5 10V11.5H.5V10L8 2Z"/></svg>
<div class="c" style="left:718px;top:1041.8px;width:75px;text-align:center"><span class="n">0.45</span></div>
<svg class="ic" viewBox="0 0 19 12" style="left:952px;top:1047.8px"><path class="pd" d="M.5 .5H18.5V2L11 10V11.5H8V10L.5 2Z"/></svg>
<div class="c" style="left:952px;top:1041.8px;width:84px;text-align:center"><span class="n">-0.1</span></div>
<svg class="ic" viewBox="0 0 19 12" style="left:1038px;top:1047.8px"><path class="pd" d="M.5 .5H18.5V2L11 10V11.5H8V10L.5 2Z"/></svg>
<div class="c" style="left:1037px;top:1041.8px;width:89px;text-align:center"><span class="n">-0.1</span></div>
<div class="c" style="left:579px;top:1070.7px;width:50px;text-align:center"><span class="n">8936</span></div>
<div class="c" style="left:630px;top:1070.7px;width:87px;text-align:center">國統</div>
<div class="c" style="left:794px;top:1070.7px;width:157px;padding-left:2px">傳產<span class="l">-</span>水泥</div>
<svg class="ic" viewBox="0 0 19 12" style="left:719px;top:1076.7px"><path class="pd" d="M.5 .5H18.5V2L11 10V11.5H8V10L.5 2Z"/></svg>
<div class="c" style="left:718px;top:1070.7px;width:75px;text-align:center"><span class="n">-1.09</span></div>
<svg class="ic" viewBox="0 0 19 12" style="left:952px;top:1076.7px"><path class="pd" d="M.5 .5H18.5V2L11 10V11.5H8V10L.5 2Z"/></svg>
<div class="c" style="left:952px;top:1070.7px;width:84px;text-align:center"><span class="n">-0.3</span></div>
<svg class="ic" viewBox="0 0 19 12" style="left:1038px;top:1076.7px"><rect class="pz" x=".5" y="3.5" width="18" height="6"/></svg>
<div class="c" style="left:1037px;top:1070.7px;width:89px;text-align:center"><span class="n">0</span></div>
<div class="c" style="left:579px;top:1099.6px;width:50px;text-align:center"><span class="n">6016</span></div>
<div class="c" style="left:630px;top:1099.6px;width:87px;text-align:center">康和證</div>
<div class="c" style="left:794px;top:1099.6px;width:157px;padding-left:2px">金融<span class="l">-</span>證券</div>
<svg class="ic" viewBox="0 0 19 12" style="left:719px;top:1105.6px"><path class="pd" d="M.5 .5H18.5V2L11 10V11.5H8V10L.5 2Z"/></svg>
<div class="c" style="left:718px;top:1099.6px;width:75px;text-align:center"><span class="n">-1.91</span></div>
<svg class="ic" viewBox="0 0 19 12" style="left:952px;top:1105.6px"><path class="pu" d="M8 .5H11V2L18.5 10V11.5H.5V10L8 2Z"/></svg>
<div class="c" style="left:952px;top:1099.6px;width:84px;text-align:center"><span class="n">0.4</span></div>
<svg class="ic" viewBox="0 0 19 12" style="left:1038px;top:1105.6px"><rect class="pz" x=".5" y="3.5" width="18" height="6"/></svg>
<div class="c" style="left:1037px;top:1099.6px;width:89px;text-align:center"><span class="n">0</span></div>
<div class="c" style="left:579px;top:1128.5px;width:50px;text-align:center"><span class="n">6026</span></div>
<div class="c" style="left:630px;top:1128.5px;width:87px;text-align:center">福邦證</div>
<div class="c" style="left:794px;top:1128.5px;width:157px;padding-left:2px">金融<span class="l">-</span>證券</div>
<svg class="ic" viewBox="0 0 19 12" style="left:719px;top:1134.5px"><path class="pd" d="M.5 .5H18.5V2L11 10V11.5H8V10L.5 2Z"/></svg>
<div class="c" style="left:718px;top:1128.5px;width:75px;text-align:center"><span class="n">-1.05</span></div>
<svg class="ic" viewBox="0 0 19 12" style="left:952px;top:1134.5px"><path class="pu" d="M8 .5H11V2L18.5 10V11.5H.5V10L8 2Z"/></svg>
<div class="c" style="left:952px;top:1128.5px;width:84px;text-align:center"><span class="n">0.5</span></div>
<svg class="ic" viewBox="0 0 19 12" style="left:1038px;top:1134.5px"><rect class="pz" x=".5" y="3.5" width="18" height="6"/></svg>
<div class="c" style="left:1037px;top:1128.5px;width:89px;text-align:center"><span class="n">0</span></div>
<div class="c" style="left:579px;top:1157.4px;width:50px;text-align:center"><span class="n">2801</span></div>
<div class="c" style="left:630px;top:1157.4px;width:87px;text-align:center">彰銀</div>
<div class="c" style="left:794px;top:1157.4px;width:157px;padding-left:2px">金融<span class="l">-</span>銀行</div>
<svg class="ic" viewBox="0 0 19 12" style="left:719px;top:1163.4px"><path class="pu" d="M8 .5H11V2L18.5 10V11.5H.5V10L8 2Z"/></svg>
<div class="c" style="left:718px;top:1157.4px;width:75px;text-align:center"><span class="n">0.25</span></div>
<svg class="ic" viewBox="0 0 19 12" style="left:952px;top:1163.4px"><path class="pd" d="M.5 .5H18.5V2L11 10V11.5H8V10L.5 2Z"/></svg>
<div class="c" style="left:952px;top:1157.4px;width:84px;text-align:center"><span class="n">-0.2</span></div>
<svg class="ic" viewBox="0 0 19 12" style="left:1038px;top:1163.4px"><rect class="pz" x=".5" y="3.5" width="18" height="6"/></svg>
<div class="c" style="left:1037px;top:1157.4px;width:89px;text-align:center"><span class="n">0</span></div>
<div class="c" style="left:579px;top:1186.3px;width:50px;text-align:center"><span class="n">2812</span></div>
<div class="c" style="left:630px;top:1186.3px;width:87px;text-align:center">台中銀</div>
<div class="c" style="left:794px;top:1186.3px;width:157px;padding-left:2px">金融<span class="l">-</span>銀行</div>
<svg class="ic" viewBox="0 0 19 12" style="left:719px;top:1192.3px"><rect class="pz" x=".5" y="3.5" width="18" height="6"/></svg>
<div class="c" style="left:718px;top:1186.3px;width:75px;text-align:center"><span class="n">0</span></div>
<svg class="ic" viewBox="0 0 19 12" style="left:952px;top:1192.3px"><path class="pd" d="M.5 .5H18.5V2L11 10V11.5H8V10L.5 2Z"/></svg>
<div class="c" style="left:952px;top:1186.3px;width:84px;text-align:center"><span class="n">-0.3</span></div>
<svg class="ic" viewBox="0 0 19 12" style="left:1038px;top:1192.3px"><rect class="pz" x=".5" y="3.5" width="18" height="6"/></svg>
<div class="c" style="left:1037px;top:1186.3px;width:89px;text-align:center"><span class="n">0</span></div>
<div class="c" style="left:579px;top:1215.2px;width:50px;text-align:center"><span class="n">2838</span></div>
<div class="c" style="left:630px;top:1215.2px;width:87px;text-align:center">聯邦銀</div>
<div class="c" style="left:794px;top:1215.2px;width:157px;padding-left:2px">金融<span class="l">-</span>銀行</div>
<svg class="ic" viewBox="0 0 19 12" style="left:719px;top:1221.2px"><rect class="pz" x=".5" y="3.5" width="18" height="6"/></svg>
<div class="c" style="left:718px;top:1215.2px;width:75px;text-align:center"><span class="n">0</span></div>
<svg class="ic" viewBox="0 0 19 12" style="left:952px;top:1221.2px"><path class="pd" d="M.5 .5H18.5V2L11 10V11.5H8V10L.5 2Z"/></svg>
<div class="c" style="left:952px;top:1215.2px;width:84px;text-align:center"><span class="n">-0.1</span></div>
<svg class="ic" viewBox="0 0 19 12" style="left:1038px;top:1221.2px"><rect class="pz" x=".5" y="3.5" width="18" height="6"/></svg>
<div class="c" style="left:1037px;top:1215.2px;width:89px;text-align:center"><span class="n">0</span></div>
<div class="c" style="left:579px;top:1244.1px;width:50px;text-align:center"><span class="n">2897</span></div>
<div class="c" style="left:630px;top:1244.1px;width:87px;text-align:center">王道銀行</div>
<div class="c" style="left:794px;top:1244.1px;width:157px;padding-left:2px">金融<span class="l">-</span>銀行</div>
<svg class="ic" viewBox="0 0 19 12" style="left:719px;top:1250.1px"><rect class="pz" x=".5" y="3.5" width="18" height="6"/></svg>
<div class="c" style="left:718px;top:1244.1px;width:75px;text-align:center"><span class="n">0</span></div>
<svg class="ic" viewBox="0 0 19 12" style="left:952px;top:1250.1px"><path class="pd" d="M.5 .5H18.5V2L11 10V11.5H8V10L.5 2Z"/></svg>
<div class="c" style="left:952px;top:1244.1px;width:84px;text-align:center"><span class="n">-0.2</span></div>
<svg class="ic" viewBox="0 0 19 12" style="left:1038px;top:1250.1px"><rect class="pz" x=".5" y="3.5" width="18" height="6"/></svg>
<div class="c" style="left:1037px;top:1244.1px;width:89px;text-align:center"><span class="n">0</span></div>
<div class="c" style="left:579px;top:1273.0px;width:50px;text-align:center"><span class="n">2836</span></div>
<div class="c" style="left:630px;top:1273.0px;width:87px;text-align:center">高雄銀</div>
<div class="c" style="left:794px;top:1273.0px;width:157px;padding-left:2px">金融<span class="l">-</span>銀行</div>
<svg class="ic" viewBox="0 0 19 12" style="left:719px;top:1279.0px"><rect class="pz" x=".5" y="3.5" width="18" height="6"/></svg>
<div class="c" style="left:718px;top:1273.0px;width:75px;text-align:center"><span class="n">0</span></div>
<svg class="ic" viewBox="0 0 19 12" style="left:952px;top:1279.0px"><path class="pd" d="M.5 .5H18.5V2L11 10V11.5H8V10L.5 2Z"/></svg>
<div class="c" style="left:952px;top:1273.0px;width:84px;text-align:center"><span class="n">-0.1</span></div>
<svg class="ic" viewBox="0 0 19 12" style="left:1038px;top:1279.0px"><rect class="pz" x=".5" y="3.5" width="18" height="6"/></svg>
<div class="c" style="left:1037px;top:1273.0px;width:89px;text-align:center"><span class="n">0</span></div>
<div class="c" style="left:579px;top:1301.9px;width:50px;text-align:center"><span class="n">2867</span></div>
<div class="c" style="left:630px;top:1301.9px;width:87px;text-align:center">三商壽</div>
<div class="c" style="left:794px;top:1301.9px;width:157px;padding-left:2px">金融<span class="l">-</span>保險</div>
<svg class="ic" viewBox="0 0 19 12" style="left:719px;top:1307.9px"><path class="pu" d="M8 .5H11V2L18.5 10V11.5H.5V10L8 2Z"/></svg>
<div class="c" style="left:718px;top:1301.9px;width:75px;text-align:center"><span class="n">0.65</span></div>
<svg class="ic" viewBox="0 0 19 12" style="left:952px;top:1307.9px"><path class="pu" d="M8 .5H11V2L18.5 10V11.5H.5V10L8 2Z"/></svg>
<div class="c" style="left:952px;top:1301.9px;width:84px;text-align:center"><span class="n">0.1</span></div>
<svg class="ic" viewBox="0 0 19 12" style="left:1038px;top:1307.9px"><rect class="pz" x=".5" y="3.5" width="18" height="6"/></svg>
<div class="c" style="left:1037px;top:1301.9px;width:89px;text-align:center"><span class="n">0</span></div>
<div class="c" style="left:579px;top:1330.8px;width:50px;text-align:center"><span class="n">2884</span></div>
<div class="c" style="left:630px;top:1330.8px;width:87px;text-align:center">玉山金</div>
<div class="c" style="left:794px;top:1330.8px;width:157px;padding-left:2px">金融<span class="l">-</span>金控</div>
<svg class="ic" viewBox="0 0 19 12" style="left:719px;top:1336.8px"><path class="pu" d="M8 .5H11V2L18.5 10V11.5H.5V10L8 2Z"/></svg>
<div class="c" style="left:718px;top:1330.8px;width:75px;text-align:center"><span class="n">0.46</span></div>
<svg class="ic" viewBox="0 0 19 12" style="left:952px;top:1336.8px"><path class="pd" d="M.5 .5H18.5V2L11 10V11.5H8V10L.5 2Z"/></svg>
<div class="c" style="left:952px;top:1330.8px;width:84px;text-align:center"><span class="n">-0.2</span></div>
<svg class="ic" viewBox="0 0 19 12" style="left:1038px;top:1336.8px"><path class="pd" d="M.5 .5H18.5V2L11 10V11.5H8V10L.5 2Z"/></svg>
<div class="c" style="left:1037px;top:1330.8px;width:89px;text-align:center"><span class="n">-0.1</span></div>
<div class="c" style="left:579px;top:1359.7px;width:50px;text-align:center"><span class="n">5880</span></div>
<div class="c" style="left:630px;top:1359.7px;width:87px;text-align:center">合庫金</div>
<div class="c" style="left:794px;top:1359.7px;width:157px;padding-left:2px">金融<span class="l">-</span>金控</div>
<svg class="ic" viewBox="0 0 19 12" style="left:719px;top:1365.7px"><path class="pu" d="M8 .5H11V2L18.5 10V11.5H.5V10L8 2Z"/></svg>
<div class="c" style="left:718px;top:1359.7px;width:75px;text-align:center"><span class="n">0.42</span></div>
<svg class="ic" viewBox="0 0 19 12" style="left:952px;top:1365.7px"><rect class="pz" x=".5" y="3.5" width="18" height="6"/></svg>
<div class="c" style="left:952px;top:1359.7px;width:84px;text-align:center"><span class="n">0</span></div>
<svg class="ic" viewBox="0 0 19 12" style="left:1038px;top:1365.7px"><rect class="pz" x=".5" y="3.5" width="18" height="6"/></svg>
<div class="c" style="left:1037px;top:1359.7px;width:89px;text-align:center"><span class="n">0</span></div>
<div class="c" style="left:579px;top:1388.6px;width:50px;text-align:center"><span class="n">2883</span></div>
<div class="c" style="left:630px;top:1388.6px;width:87px;text-align:center">凱基金</div>
<div class="c" style="left:794px;top:1388.6px;width:157px;padding-left:2px">金融<span class="l">-</span>金控</div>
<svg class="ic" viewBox="0 0 19 12" style="left:719px;top:1394.6px"><path class="pu" d="M8 .5H11V2L18.5 10V11.5H.5V10L8 2Z"/></svg>
<div class="c" style="left:718px;top:1388.6px;width:75px;text-align:center"><span class="n">0.29</span></div>
<svg class="ic" viewBox="0 0 19 12" style="left:952px;top:1394.6px"><path class="pu" d="M8 .5H11V2L18.5 10V11.5H.5V10L8 2Z"/></svg>
<div class="c" style="left:952px;top:1388.6px;width:84px;text-align:center"><span class="n">0.3</span></div>
<svg class="ic" viewBox="0 0 19 12" style="left:1038px;top:1394.6px"><rect class="pz" x=".5" y="3.5" width="18" height="6"/></svg>
<div class="c" style="left:1037px;top:1388.6px;width:89px;text-align:center"><span class="n">0</span></div>
<div class="c" style="left:579px;top:1417.5px;width:50px;text-align:center"><span class="n">2889</span></div>
<div class="c" style="left:630px;top:1417.5px;width:87px;text-align:center">國票金</div>
<div class="c" style="left:794px;top:1417.5px;width:157px;padding-left:2px">金融<span class="l">-</span>金控</div>
<svg class="ic" viewBox="0 0 19 12" style="left:719px;top:1423.5px"><rect class="pz" x=".5" y="3.5" width="18" height="6"/></svg>
<div class="c" style="left:718px;top:1417.5px;width:75px;text-align:center"><span class="n">0</span></div>
<svg class="ic" viewBox="0 0 19 12" style="left:952px;top:1423.5px"><path class="pu" d="M8 .5H11V2L18.5 10V11.5H.5V10L8 2Z"/></svg>
<div class="c" style="left:952px;top:1417.5px;width:84px;text-align:center"><span class="n">0.1</span></div>
<svg class="ic" viewBox="0 0 19 12" style="left:1038px;top:1423.5px"><rect class="pz" x=".5" y="3.5" width="18" height="6"/></svg>
<div class="c" style="left:1037px;top:1417.5px;width:89px;text-align:center"><span class="n">0</span></div>
<div class="a" style="left:1150px;top:83px;width:538px;height:27px;background:#5b9bd5"></div>
<div class="k" style="left:1147px;top:80px;width:544px;height:1px"></div>
<div class="a" style="left:1148px;top:81px;width:542px;height:1px;background:#6f8aa6"></div>
<div class="k" style="left:1149px;top:82px;width:540px;height:1px"></div>
<div class="k" style="left:1149px;top:110px;width:540px;height:1px"></div>
<div class="k" style="left:1149px;top:82px;width:1px;height:29px"></div>
<div class="k" style="left:1688px;top:82px;width:1px;height:29px"></div>
<div class="k" style="left:1690px;top:80px;width:1px;height:33px"></div>
<div class="k" style="left:1147px;top:80px;width:1px;height:1509px"></div>
<div class="a" style="left:1150px;top:83px;width:538px;height:27px;text-align:center;font-size:19px;line-height:27px;color:#000">接近<span style="font-size:19px;letter-spacing:0;font-weight:normal">10MA</span></div>
<div class="k" style="left:1147px;top:112px;width:543px;height:1px"></div>
<div class="a" style="left:1150px;top:113px;width:49px;height:28px;background:#ddebf7"></div>
<div class="k" style="left:1149px;top:112px;width:50px;height:1px"></div>
<div class="k" style="left:1149px;top:141px;width:50px;height:1px"></div>
<div class="k" style="left:1149px;top:112px;width:1px;height:30px"></div>
<div class="k" style="left:1198px;top:112px;width:1px;height:30px"></div>
<div class="hd" style="left:1150px;top:115px;width:48px;height:26px;text-align:center;padding-left:0px;font-size:18.5px;letter-spacing:1px">代號</div>
<div class="a" style="left:1201px;top:113px;width:86px;height:28px;background:#ddebf7"></div>
<div class="k" style="left:1200px;top:112px;width:87px;height:1px"></div>
<div class="k" style="left:1200px;top:141px;width:87px;height:1px"></div>
<div class="k" style="left:1200px;top:112px;width:1px;height:30px"></div>
<div class="k" style="left:1286px;top:112px;width:1px;height:30px"></div>
<div class="hd" style="left:1201px;top:115px;width:85px;height:26px;text-align:center;padding-left:0px;font-size:18.5px;letter-spacing:1px">名稱</div>
<div class="a" style="left:1289px;top:113px;width:67px;height:28px;background:#ddebf7"></div>
<div class="k" style="left:1288px;top:112px;width:68px;height:1px"></div>
<div class="k" style="left:1288px;top:141px;width:68px;height:1px"></div>
<div class="k" style="left:1288px;top:112px;width:1px;height:30px"></div>
<div class="k" style="left:1355px;top:112px;width:1px;height:30px"></div>
<div class="hd" style="left:1289px;top:115px;width:66px;height:26px;text-align:center;padding-left:0px;font-size:18.5px;letter-spacing:0">漲幅%</div>
<div class="a" style="left:1358px;top:113px;width:157px;height:28px;background:#ddebf7"></div>
<div class="k" style="left:1357px;top:112px;width:158px;height:1px"></div>
<div class="k" style="left:1357px;top:141px;width:158px;height:1px"></div>
<div class="k" style="left:1357px;top:112px;width:1px;height:30px"></div>
<div class="k" style="left:1514px;top:112px;width:1px;height:30px"></div>
<div class="hd" style="left:1358px;top:115px;width:156px;height:26px;text-align:left;padding-left:4px;font-size:18.5px;letter-spacing:0">產業分類</div>
<div class="a" style="left:1517px;top:113px;width:84px;height:28px;background:#ddebf7"></div>
<div class="k" style="left:1516px;top:112px;width:85px;height:1px"></div>
<div class="k" style="left:1516px;top:141px;width:85px;height:1px"></div>
<div class="k" style="left:1516px;top:112px;width:1px;height:30px"></div>
<div class="k" style="left:1600px;top:112px;width:1px;height:30px"></div>
<div class="hd" style="left:1517px;top:115px;width:83px;height:26px;text-align:left;padding-left:3px;font-size:13.5px;letter-spacing:0.6px">外資５日買超佔比</div>
<div class="a" style="left:1603px;top:113px;width:86px;height:28px;background:#ddebf7"></div>
<div class="k" style="left:1602px;top:112px;width:87px;height:1px"></div>
<div class="k" style="left:1602px;top:141px;width:87px;height:1px"></div>
<div class="k" style="left:1602px;top:112px;width:1px;height:30px"></div>
<div class="hd" style="left:1603px;top:115px;width:107px;height:26px;text-align:left;padding-left:2px;font-size:13.5px;letter-spacing:0.6px">投信５日買超佔比</div>
<div class="a" style="left:1150px;top:144px;width:539px;height:1443px;background:#fff2cc"></div>
<div class="k" style="left:1149px;top:143px;width:540px;height:1px"></div>
<div class="k" style="left:1149px;top:143px;width:1px;height:1445px"></div>
<div class="k" style="left:1149px;top:1587px;width:540px;height:1px"></div>
<div class="c" style="left:1149px;top:145.9px;width:50px;text-align:center"><span class="n">5309</span></div>
<div class="c" style="left:1200px;top:145.9px;width:87px;text-align:center">系統電</div>
<div class="c" style="left:1357px;top:145.9px;width:158px;padding-left:2px">電子中游<span class="l">-</span>變壓器與電源</div>
<svg class="ic" viewBox="0 0 19 12" style="left:1289px;top:151.9px"><path class="pu" d="M8 .5H11V2L18.5 10V11.5H.5V10L8 2Z"/></svg>
<div class="c" style="left:1288px;top:145.9px;width:68px;text-align:center"><span class="n">0.92</span></div>
<svg class="ic" viewBox="0 0 19 12" style="left:1516px;top:151.9px"><path class="pd" d="M.5 .5H18.5V2L11 10V11.5H8V10L.5 2Z"/></svg>
<div class="c" style="left:1516px;top:145.9px;width:85px;text-align:center"><span class="n">-0.1</span></div>
<svg class="ic" viewBox="0 0 19 12" style="left:1603px;top:151.9px"><rect class="pz" x=".5" y="3.5" width="18" height="6"/></svg>
<div class="c" style="left:1602px;top:145.9px;width:88px;text-align:center"><span class="n">0</span></div>
<div class="c" style="left:1149px;top:174.8px;width:50px;text-align:center"><span class="n">2301</span></div>
<div class="c" style="left:1200px;top:174.8px;width:87px;text-align:center">光寶科</div>
<div class="c" style="left:1357px;top:174.8px;width:158px;padding-left:2px">電子中游<span class="l">-</span>電源供應器</div>
<svg class="ic" viewBox="0 0 19 12" style="left:1289px;top:180.8px"><path class="pd" d="M.5 .5H18.5V2L11 10V11.5H8V10L.5 2Z"/></svg>
<div class="c" style="left:1288px;top:174.8px;width:68px;text-align:center"><span class="n">-1.2</span></div>
<svg class="ic" viewBox="0 0 19 12" style="left:1516px;top:180.8px"><rect class="pz" x=".5" y="3.5" width="18" height="6"/></svg>
<div class="c" style="left:1516px;top:174.8px;width:85px;text-align:center"><span class="n">0</span></div>
<svg class="ic" viewBox="0 0 19 12" style="left:1603px;top:180.8px"><path class="pd" d="M.5 .5H18.5V2L11 10V11.5H8V10L.5 2Z"/></svg>
<div class="c" style="left:1602px;top:174.8px;width:88px;text-align:center"><span class="n">-0.1</span></div>
<div class="c" style="left:1149px;top:203.7px;width:50px;text-align:center"><span class="n">2323</span></div>
<div class="c" style="left:1200px;top:203.7px;width:87px;text-align:center">中環</div>
<div class="c" style="left:1357px;top:203.7px;width:158px;padding-left:2px">電子下游<span class="l">-</span>其他</div>
<svg class="ic" viewBox="0 0 19 12" style="left:1289px;top:209.7px"><path class="pd" d="M.5 .5H18.5V2L11 10V11.5H8V10L.5 2Z"/></svg>
<div class="c" style="left:1288px;top:203.7px;width:68px;text-align:center"><span class="n">-1.34</span></div>
<svg class="ic" viewBox="0 0 19 12" style="left:1516px;top:209.7px"><path class="pu" d="M8 .5H11V2L18.5 10V11.5H.5V10L8 2Z"/></svg>
<div class="c" style="left:1516px;top:203.7px;width:85px;text-align:center"><span class="n">0.4</span></div>
<svg class="ic" viewBox="0 0 19 12" style="left:1603px;top:209.7px"><rect class="pz" x=".5" y="3.5" width="18" height="6"/></svg>
<div class="c" style="left:1602px;top:203.7px;width:88px;text-align:center"><span class="n">0</span></div>
<div class="c" style="left:1149px;top:232.6px;width:50px;text-align:center"><span class="n">3665</span></div>
<div class="c" style="left:1200px;top:232.6px;width:87px;text-align:center">貿聯<span class="l">-KY</span></div>
<div class="c" style="left:1357px;top:232.6px;width:158px;padding-left:2px">電子上游<span class="l">-</span>連接元件</div>
<svg class="ic" viewBox="0 0 19 12" style="left:1289px;top:238.6px"><path class="pd" d="M.5 .5H18.5V2L11 10V11.5H8V10L.5 2Z"/></svg>
<div class="c" style="left:1288px;top:232.6px;width:68px;text-align:center"><span class="n">-1.67</span></div>
<svg class="ic" viewBox="0 0 19 12" style="left:1516px;top:238.6px"><path class="pu" d="M8 .5H11V2L18.5 10V11.5H.5V10L8 2Z"/></svg>
<div class="c" style="left:1516px;top:232.6px;width:85px;text-align:center"><span class="n">0.7</span></div>
<svg class="ic" viewBox="0 0 19 12" style="left:1603px;top:238.6px"><path class="pd" d="M.5 .5H18.5V2L11 10V11.5H8V10L.5 2Z"/></svg>
<div class="c" style="left:1602px;top:232.6px;width:88px;text-align:center"><span class="n">-0.8</span></div>
<div class="c" style="left:1149px;top:261.5px;width:50px;text-align:center"><span class="n">6126</span></div>
<div class="c" style="left:1200px;top:261.5px;width:87px;text-align:center">信音</div>
<div class="c" style="left:1357px;top:261.5px;width:158px;padding-left:2px">電子上游<span class="l">-</span>連接元件</div>
<svg class="ic" viewBox="0 0 19 12" style="left:1289px;top:267.5px"><path class="pd" d="M.5 .5H18.5V2L11 10V11.5H8V10L.5 2Z"/></svg>
<div class="c" style="left:1288px;top:261.5px;width:68px;text-align:center"><span class="n">-0.88</span></div>
<svg class="ic" viewBox="0 0 19 12" style="left:1516px;top:267.5px"><path class="pd" d="M.5 .5H18.5V2L11 10V11.5H8V10L.5 2Z"/></svg>
<div class="c" style="left:1516px;top:261.5px;width:85px;text-align:center"><span class="n">-0.4</span></div>
<svg class="ic" viewBox="0 0 19 12" style="left:1603px;top:267.5px"><rect class="pz" x=".5" y="3.5" width="18" height="6"/></svg>
<div class="c" style="left:1602px;top:261.5px;width:88px;text-align:center"><span class="n">0</span></div>
<div class="c" style="left:1149px;top:290.4px;width:50px;text-align:center"><span class="n">3026</span></div>
<div class="c" style="left:1200px;top:290.4px;width:87px;text-align:center">禾伸堂</div>
<div class="c" style="left:1357px;top:290.4px;width:158px;padding-left:2px">電子上游<span class="l">-</span>被動元件</div>
<svg class="ic" viewBox="0 0 19 12" style="left:1289px;top:296.4px"><path class="pd" d="M.5 .5H18.5V2L11 10V11.5H8V10L.5 2Z"/></svg>
<div class="c" style="left:1288px;top:290.4px;width:68px;text-align:center"><span class="n">-1.4</span></div>
<svg class="ic" viewBox="0 0 19 12" style="left:1516px;top:296.4px"><path class="pd" d="M.5 .5H18.5V2L11 10V11.5H8V10L.5 2Z"/></svg>
<div class="c" style="left:1516px;top:290.4px;width:85px;text-align:center"><span class="n">-0.1</span></div>
<svg class="ic" viewBox="0 0 19 12" style="left:1603px;top:296.4px"><rect class="pz" x=".5" y="3.5" width="18" height="6"/></svg>
<div class="c" style="left:1602px;top:290.4px;width:88px;text-align:center"><span class="n">0</span></div>
<div class="c" style="left:1149px;top:319.3px;width:50px;text-align:center"><span class="n">8271</span></div>
<div class="c" style="left:1200px;top:319.3px;width:87px;text-align:center">宇瞻</div>
<div class="c" style="left:1357px;top:319.3px;width:158px;padding-left:2px">電子上游<span class="l">-</span>記憶體銷售</div>
<svg class="ic" viewBox="0 0 19 12" style="left:1289px;top:325.3px"><path class="pd" d="M.5 .5H18.5V2L11 10V11.5H8V10L.5 2Z"/></svg>
<div class="c" style="left:1288px;top:319.3px;width:68px;text-align:center"><span class="n">-1.22</span></div>
<svg class="ic" viewBox="0 0 19 12" style="left:1516px;top:325.3px"><path class="pd" d="M.5 .5H18.5V2L11 10V11.5H8V10L.5 2Z"/></svg>
<div class="c" style="left:1516px;top:319.3px;width:85px;text-align:center"><span class="n">-1.8</span></div>
<svg class="ic" viewBox="0 0 19 12" style="left:1603px;top:325.3px"><rect class="pz" x=".5" y="3.5" width="18" height="6"/></svg>
<div class="c" style="left:1602px;top:319.3px;width:88px;text-align:center"><span class="n">0</span></div>
<div class="c" style="left:1149px;top:348.2px;width:50px;text-align:center"><span class="n">6531</span></div>
<div class="c" style="left:1200px;top:348.2px;width:87px;text-align:center">愛普<span class="l">*</span></div>
<div class="c" style="left:1357px;top:348.2px;width:158px;padding-left:2px">電子上游<span class="l">-</span>記憶體<span class="l">IC</span>設計</div>
<svg class="ic" viewBox="0 0 19 12" style="left:1289px;top:354.2px"><path class="pu" d="M8 .5H11V2L18.5 10V11.5H.5V10L8 2Z"/></svg>
<div class="c" style="left:1288px;top:348.2px;width:68px;text-align:center"><span class="n">0.32</span></div>
<svg class="ic" viewBox="0 0 19 12" style="left:1516px;top:354.2px"><path class="pu" d="M8 .5H11V2L18.5 10V11.5H.5V10L8 2Z"/></svg>
<div class="c" style="left:1516px;top:348.2px;width:85px;text-align:center"><span class="n">2.6</span></div>
<svg class="ic" viewBox="0 0 19 12" style="left:1603px;top:354.2px"><path class="pu" d="M8 .5H11V2L18.5 10V11.5H.5V10L8 2Z"/></svg>
<div class="c" style="left:1602px;top:348.2px;width:88px;text-align:center"><span class="n">0.3</span></div>
<div class="c" style="left:1149px;top:377.1px;width:50px;text-align:center"><span class="n">3028</span></div>
<div class="c" style="left:1200px;top:377.1px;width:87px;text-align:center">增你強</div>
<div class="c" style="left:1357px;top:377.1px;width:158px;padding-left:2px">電子上游<span class="l">-IC-</span>通路</div>
<svg class="ic" viewBox="0 0 19 12" style="left:1289px;top:383.1px"><path class="pd" d="M.5 .5H18.5V2L11 10V11.5H8V10L.5 2Z"/></svg>
<div class="c" style="left:1288px;top:377.1px;width:68px;text-align:center"><span class="n">-1.1</span></div>
<svg class="ic" viewBox="0 0 19 12" style="left:1516px;top:383.1px"><path class="pd" d="M.5 .5H18.5V2L11 10V11.5H8V10L.5 2Z"/></svg>
<div class="c" style="left:1516px;top:377.1px;width:85px;text-align:center"><span class="n">-0.4</span></div>
<svg class="ic" viewBox="0 0 19 12" style="left:1603px;top:383.1px"><rect class="pz" x=".5" y="3.5" width="18" height="6"/></svg>
<div class="c" style="left:1602px;top:377.1px;width:88px;text-align:center"><span class="n">0</span></div>
<div class="c" style="left:1149px;top:406.0px;width:50px;text-align:center"><span class="n">6271</span></div>
<div class="c" style="left:1200px;top:406.0px;width:87px;text-align:center">同欣電</div>
<div class="c" style="left:1357px;top:406.0px;width:158px;padding-left:2px">電子上游<span class="l">-IC-</span>封測</div>
<svg class="ic" viewBox="0 0 19 12" style="left:1289px;top:412.0px"><path class="pd" d="M.5 .5H18.5V2L11 10V11.5H8V10L.5 2Z"/></svg>
<div class="c" style="left:1288px;top:406.0px;width:68px;text-align:center"><span class="n">-1.53</span></div>
<svg class="ic" viewBox="0 0 19 12" style="left:1516px;top:412.0px"><path class="pd" d="M.5 .5H18.5V2L11 10V11.5H8V10L.5 2Z"/></svg>
<div class="c" style="left:1516px;top:406.0px;width:85px;text-align:center"><span class="n">-0.1</span></div>
<svg class="ic" viewBox="0 0 19 12" style="left:1603px;top:412.0px"><path class="pu" d="M8 .5H11V2L18.5 10V11.5H.5V10L8 2Z"/></svg>
<div class="c" style="left:1602px;top:406.0px;width:88px;text-align:center"><span class="n">0.1</span></div>
<div class="c" style="left:1149px;top:434.9px;width:50px;text-align:center"><span class="n">6683</span></div>
<div class="c" style="left:1200px;top:434.9px;width:87px;text-align:center">雍智科技</div>
<div class="c" style="left:1357px;top:434.9px;width:158px;padding-left:2px">電子上游<span class="l">-IC-</span>半導體設備</div>
<svg class="ic" viewBox="0 0 19 12" style="left:1289px;top:440.9px"><path class="pd" d="M.5 .5H18.5V2L11 10V11.5H8V10L.5 2Z"/></svg>
<div class="c" style="left:1288px;top:434.9px;width:68px;text-align:center"><span class="n">-0.74</span></div>
<svg class="ic" viewBox="0 0 19 12" style="left:1516px;top:440.9px"><path class="pd" d="M.5 .5H18.5V2L11 10V11.5H8V10L.5 2Z"/></svg>
<div class="c" style="left:1516px;top:434.9px;width:85px;text-align:center"><span class="n">-1.7</span></div>
<svg class="ic" viewBox="0 0 19 12" style="left:1603px;top:440.9px"><path class="pd" d="M.5 .5H18.5V2L11 10V11.5H8V10L.5 2Z"/></svg>
<div class="c" style="left:1602px;top:434.9px;width:88px;text-align:center"><span class="n">-0.1</span></div>
<div class="c" style="left:1149px;top:463.8px;width:50px;text-align:center"><span class="n">3052</span></div>
<div class="c" style="left:1200px;top:463.8px;width:87px;text-align:center">夆典</div>
<div class="c" style="left:1357px;top:463.8px;width:158px;padding-left:2px">傳產<span class="l">-</span>營建</div>
<svg class="ic" viewBox="0 0 19 12" style="left:1289px;top:469.8px"><path class="pd" d="M.5 .5H18.5V2L11 10V11.5H8V10L.5 2Z"/></svg>
<div class="c" style="left:1288px;top:463.8px;width:68px;text-align:center"><span class="n">-1.24</span></div>
<svg class="ic" viewBox="0 0 19 12" style="left:1516px;top:469.8px"><path class="pu" d="M8 .5H11V2L18.5 10V11.5H.5V10L8 2Z"/></svg>
<div class="c" style="left:1516px;top:463.8px;width:85px;text-align:center"><span class="n">0.1</span></div>
<svg class="ic" viewBox="0 0 19 12" style="left:1603px;top:469.8px"><rect class="pz" x=".5" y="3.5" width="18" height="6"/></svg>
<div class="c" style="left:1602px;top:463.8px;width:88px;text-align:center"><span class="n">0</span></div>
<div class="c" style="left:1149px;top:492.7px;width:50px;text-align:center"><span class="n">5508</span></div>
<div class="c" style="left:1200px;top:492.7px;width:87px;text-align:center">永信建</div>
<div class="c" style="left:1357px;top:492.7px;width:158px;padding-left:2px">傳產<span class="l">-</span>營建</div>
<svg class="ic" viewBox="0 0 19 12" style="left:1289px;top:498.7px"><path class="pu" d="M8 .5H11V2L18.5 10V11.5H.5V10L8 2Z"/></svg>
<div class="c" style="left:1288px;top:492.7px;width:68px;text-align:center"><span class="n">0.98</span></div>
<svg class="ic" viewBox="0 0 19 12" style="left:1516px;top:498.7px"><path class="pd" d="M.5 .5H18.5V2L11 10V11.5H8V10L.5 2Z"/></svg>
<div class="c" style="left:1516px;top:492.7px;width:85px;text-align:center"><span class="n">-0.6</span></div>
<svg class="ic" viewBox="0 0 19 12" style="left:1603px;top:498.7px"><rect class="pz" x=".5" y="3.5" width="18" height="6"/></svg>
<div class="c" style="left:1602px;top:492.7px;width:88px;text-align:center"><span class="n">0</span></div>
<div class="c" style="left:1149px;top:521.6px;width:50px;text-align:center"><span class="n">1316</span></div>
<div class="c" style="left:1200px;top:521.6px;width:87px;text-align:center">上曜</div>
<div class="c" style="left:1357px;top:521.6px;width:158px;padding-left:2px">傳產<span class="l">-</span>營建</div>
<svg class="ic" viewBox="0 0 19 12" style="left:1289px;top:527.6px"><path class="pd" d="M.5 .5H18.5V2L11 10V11.5H8V10L.5 2Z"/></svg>
<div class="c" style="left:1288px;top:521.6px;width:68px;text-align:center"><span class="n">-1.34</span></div>
<svg class="ic" viewBox="0 0 19 12" style="left:1516px;top:527.6px"><path class="pd" d="M.5 .5H18.5V2L11 10V11.5H8V10L.5 2Z"/></svg>
<div class="c" style="left:1516px;top:521.6px;width:85px;text-align:center"><span class="n">-0.3</span></div>
<svg class="ic" viewBox="0 0 19 12" style="left:1603px;top:527.6px"><rect class="pz" x=".5" y="3.5" width="18" height="6"/></svg>
<div class="c" style="left:1602px;top:521.6px;width:88px;text-align:center"><span class="n">0</span></div>
<div class="c" style="left:1149px;top:550.5px;width:50px;text-align:center"><span class="n">1216</span></div>
<div class="c" style="left:1200px;top:550.5px;width:87px;text-align:center">統一</div>
<div class="c" style="left:1357px;top:550.5px;width:158px;padding-left:2px">傳產<span class="l">-</span>食品</div>
<svg class="ic" viewBox="0 0 19 12" style="left:1289px;top:556.5px"><path class="pu" d="M8 .5H11V2L18.5 10V11.5H.5V10L8 2Z"/></svg>
<div class="c" style="left:1288px;top:550.5px;width:68px;text-align:center"><span class="n">0.66</span></div>
<svg class="ic" viewBox="0 0 19 12" style="left:1516px;top:556.5px"><path class="pu" d="M8 .5H11V2L18.5 10V11.5H.5V10L8 2Z"/></svg>
<div class="c" style="left:1516px;top:550.5px;width:85px;text-align:center"><span class="n">0.1</span></div>
<svg class="ic" viewBox="0 0 19 12" style="left:1603px;top:556.5px"><path class="pd" d="M.5 .5H18.5V2L11 10V11.5H8V10L.5 2Z"/></svg>
<div class="c" style="left:1602px;top:550.5px;width:88px;text-align:center"><span class="n">-0.3</span></div>
<div class="c" style="left:1149px;top:579.4px;width:50px;text-align:center"><span class="n">1785</span></div>
<div class="c" style="left:1200px;top:579.4px;width:87px;text-align:center">光洋科</div>
<div class="c" style="left:1357px;top:579.4px;width:158px;padding-left:2px">傳產<span class="l">-</span>其他</div>
<svg class="ic" viewBox="0 0 19 12" style="left:1289px;top:585.4px"><path class="pd" d="M.5 .5H18.5V2L11 10V11.5H8V10L.5 2Z"/></svg>
<div class="c" style="left:1288px;top:579.4px;width:68px;text-align:center"><span class="n">-0.16</span></div>
<svg class="ic" viewBox="0 0 19 12" style="left:1516px;top:585.4px"><path class="pu" d="M8 .5H11V2L18.5 10V11.5H.5V10L8 2Z"/></svg>
<div class="c" style="left:1516px;top:579.4px;width:85px;text-align:center"><span class="n">0.1</span></div>
<svg class="ic" viewBox="0 0 19 12" style="left:1603px;top:585.4px"><rect class="pz" x=".5" y="3.5" width="18" height="6"/></svg>
<div class="c" style="left:1602px;top:579.4px;width:88px;text-align:center"><span class="n">0</span></div>
<div class="c" style="left:1149px;top:608.3px;width:50px;text-align:center"><span class="n">2614</span></div>
<div class="c" style="left:1200px;top:608.3px;width:87px;text-align:center">東森</div>
<div class="c" style="left:1357px;top:608.3px;width:158px;padding-left:2px">傳產<span class="l">-</span>其他</div>
<svg class="ic" viewBox="0 0 19 12" style="left:1289px;top:614.3px"><path class="pd" d="M.5 .5H18.5V2L11 10V11.5H8V10L.5 2Z"/></svg>
<div class="c" style="left:1288px;top:608.3px;width:68px;text-align:center"><span class="n">-2.39</span></div>
<svg class="ic" viewBox="0 0 19 12" style="left:1516px;top:614.3px"><path class="pu" d="M8 .5H11V2L18.5 10V11.5H.5V10L8 2Z"/></svg>
<div class="c" style="left:1516px;top:608.3px;width:85px;text-align:center"><span class="n">0.3</span></div>
<svg class="ic" viewBox="0 0 19 12" style="left:1603px;top:614.3px"><rect class="pz" x=".5" y="3.5" width="18" height="6"/></svg>
<div class="c" style="left:1602px;top:608.3px;width:88px;text-align:center"><span class="n">0</span></div>
<div class="c" style="left:1149px;top:637.2px;width:50px;text-align:center"><span class="n">3162</span></div>
<div class="c" style="left:1200px;top:637.2px;width:87px;text-align:center">精確</div>
<div class="c" style="left:1357px;top:637.2px;width:158px;padding-left:2px">傳產<span class="l">-</span>自行車</div>
<svg class="ic" viewBox="0 0 19 12" style="left:1289px;top:643.2px"><path class="pu" d="M8 .5H11V2L18.5 10V11.5H.5V10L8 2Z"/></svg>
<div class="c" style="left:1288px;top:637.2px;width:68px;text-align:center"><span class="n">0.17</span></div>
<svg class="ic" viewBox="0 0 19 12" style="left:1516px;top:643.2px"><path class="pd" d="M.5 .5H18.5V2L11 10V11.5H8V10L.5 2Z"/></svg>
<div class="c" style="left:1516px;top:637.2px;width:85px;text-align:center"><span class="n">-0.7</span></div>
<svg class="ic" viewBox="0 0 19 12" style="left:1603px;top:643.2px"><rect class="pz" x=".5" y="3.5" width="18" height="6"/></svg>
<div class="c" style="left:1602px;top:637.2px;width:88px;text-align:center"><span class="n">0</span></div>
<div class="c" style="left:1149px;top:666.1px;width:50px;text-align:center"><span class="n">2915</span></div>
<div class="c" style="left:1200px;top:666.1px;width:87px;text-align:center">潤泰全</div>
<div class="c" style="left:1357px;top:666.1px;width:158px;padding-left:2px">傳產<span class="l">-</span>百貨</div>
<svg class="ic" viewBox="0 0 19 12" style="left:1289px;top:672.1px"><rect class="pz" x=".5" y="3.5" width="18" height="6"/></svg>
<div class="c" style="left:1288px;top:666.1px;width:68px;text-align:center"><span class="n">0</span></div>
<svg class="ic" viewBox="0 0 19 12" style="left:1516px;top:672.1px"><path class="pd" d="M.5 .5H18.5V2L11 10V11.5H8V10L.5 2Z"/></svg>
<div class="c" style="left:1516px;top:666.1px;width:85px;text-align:center"><span class="n">-0.6</span></div>
<svg class="ic" viewBox="0 0 19 12" style="left:1603px;top:672.1px"><path class="pd" d="M.5 .5H18.5V2L11 10V11.5H8V10L.5 2Z"/></svg>
<div class="c" style="left:1602px;top:666.1px;width:88px;text-align:center"><span class="n">-0.1</span></div>
<div class="c" style="left:1149px;top:695.0px;width:50px;text-align:center"><span class="n">2812</span></div>
<div class="c" style="left:1200px;top:695.0px;width:87px;text-align:center">台中銀</div>
<div class="c" style="left:1357px;top:695.0px;width:158px;padding-left:2px">金融<span class="l">-</span>銀行</div>
<svg class="ic" viewBox="0 0 19 12" style="left:1289px;top:701.0px"><rect class="pz" x=".5" y="3.5" width="18" height="6"/></svg>
<div class="c" style="left:1288px;top:695.0px;width:68px;text-align:center"><span class="n">0</span></div>
<svg class="ic" viewBox="0 0 19 12" style="left:1516px;top:701.0px"><path class="pd" d="M.5 .5H18.5V2L11 10V11.5H8V10L.5 2Z"/></svg>
<div class="c" style="left:1516px;top:695.0px;width:85px;text-align:center"><span class="n">-0.3</span></div>
<svg class="ic" viewBox="0 0 19 12" style="left:1603px;top:701.0px"><rect class="pz" x=".5" y="3.5" width="18" height="6"/></svg>
<div class="c" style="left:1602px;top:695.0px;width:88px;text-align:center"><span class="n">0</span></div>
<div class="c" style="left:1149px;top:723.9px;width:50px;text-align:center"><span class="n">2897</span></div>
<div class="c" style="left:1200px;top:723.9px;width:87px;text-align:center">王道銀行</div>
<div class="c" style="left:1357px;top:723.9px;width:158px;padding-left:2px">金融<span class="l">-</span>銀行</div>
<svg class="ic" viewBox="0 0 19 12" style="left:1289px;top:729.9px"><rect class="pz" x=".5" y="3.5" width="18" height="6"/></svg>
<div class="c" style="left:1288px;top:723.9px;width:68px;text-align:center"><span class="n">0</span></div>
<svg class="ic" viewBox="0 0 19 12" style="left:1516px;top:729.9px"><path class="pd" d="M.5 .5H18.5V2L11 10V11.5H8V10L.5 2Z"/></svg>
<div class="c" style="left:1516px;top:723.9px;width:85px;text-align:center"><span class="n">-0.2</span></div>
<svg class="ic" viewBox="0 0 19 12" style="left:1603px;top:729.9px"><rect class="pz" x=".5" y="3.5" width="18" height="6"/></svg>
<div class="c" style="left:1602px;top:723.9px;width:88px;text-align:center"><span class="n">0</span></div>
<div class="c" style="left:1149px;top:752.8px;width:50px;text-align:center"><span class="n">2836</span></div>
<div class="c" style="left:1200px;top:752.8px;width:87px;text-align:center">高雄銀</div>
<div class="c" style="left:1357px;top:752.8px;width:158px;padding-left:2px">金融<span class="l">-</span>銀行</div>
<svg class="ic" viewBox="0 0 19 12" style="left:1289px;top:758.8px"><rect class="pz" x=".5" y="3.5" width="18" height="6"/></svg>
<div class="c" style="left:1288px;top:752.8px;width:68px;text-align:center"><span class="n">0</span></div>
<svg class="ic" viewBox="0 0 19 12" style="left:1516px;top:758.8px"><path class="pd" d="M.5 .5H18.5V2L11 10V11.5H8V10L.5 2Z"/></svg>
<div class="c" style="left:1516px;top:752.8px;width:85px;text-align:center"><span class="n">-0.1</span></div>
<svg class="ic" viewBox="0 0 19 12" style="left:1603px;top:758.8px"><rect class="pz" x=".5" y="3.5" width="18" height="6"/></svg>
<div class="c" style="left:1602px;top:752.8px;width:88px;text-align:center"><span class="n">0</span></div>
<div class="a" style="left:1713px;top:83px;width:602px;height:27px;background:#5b9bd5"></div>
<div class="k" style="left:1710px;top:80px;width:608px;height:1px"></div>
<div class="a" style="left:1711px;top:81px;width:606px;height:1px;background:#6f8aa6"></div>
<div class="k" style="left:1712px;top:82px;width:604px;height:1px"></div>
<div class="k" style="left:1712px;top:110px;width:604px;height:1px"></div>
<div class="k" style="left:1712px;top:82px;width:1px;height:29px"></div>
<div class="k" style="left:2315px;top:82px;width:1px;height:29px"></div>
<div class="k" style="left:2317px;top:80px;width:1px;height:33px"></div>
<div class="k" style="left:1710px;top:80px;width:1px;height:1509px"></div>
<div class="a" style="left:1713px;top:83px;width:602px;height:27px;text-align:center;font-size:19px;line-height:27px;color:#000">接近<span style="font-size:19px;letter-spacing:0;font-weight:normal">20MA</span></div>
<div class="k" style="left:1710px;top:112px;width:607px;height:1px"></div>
<div class="a" style="left:1713px;top:113px;width:49px;height:28px;background:#ddebf7"></div>
<div class="k" style="left:1712px;top:112px;width:50px;height:1px"></div>
<div class="k" style="left:1712px;top:141px;width:50px;height:1px"></div>
<div class="k" style="left:1712px;top:112px;width:1px;height:30px"></div>
<div class="k" style="left:1761px;top:112px;width:1px;height:30px"></div>
<div class="hd" style="left:1713px;top:115px;width:48px;height:26px;text-align:center;padding-left:0px;font-size:18.5px;letter-spacing:1px">代號</div>
<div class="a" style="left:1764px;top:113px;width:101px;height:28px;background:#ddebf7"></div>
<div class="k" style="left:1763px;top:112px;width:102px;height:1px"></div>
<div class="k" style="left:1763px;top:141px;width:102px;height:1px"></div>
<div class="k" style="left:1763px;top:112px;width:1px;height:30px"></div>
<div class="k" style="left:1864px;top:112px;width:1px;height:30px"></div>
<div class="hd" style="left:1764px;top:115px;width:100px;height:26px;text-align:center;padding-left:0px;font-size:18.5px;letter-spacing:1px">名稱</div>
<div class="a" style="left:1867px;top:113px;width:74px;height:28px;background:#ddebf7"></div>
<div class="k" style="left:1866px;top:112px;width:75px;height:1px"></div>
<div class="k" style="left:1866px;top:141px;width:75px;height:1px"></div>
<div class="k" style="left:1866px;top:112px;width:1px;height:30px"></div>
<div class="k" style="left:1940px;top:112px;width:1px;height:30px"></div>
<div class="hd" style="left:1867px;top:115px;width:73px;height:26px;text-align:center;padding-left:0px;font-size:18.5px;letter-spacing:0">漲幅%</div>
<div class="a" style="left:1943px;top:113px;width:200px;height:28px;background:#ddebf7"></div>
<div class="k" style="left:1942px;top:112px;width:201px;height:1px"></div>
<div class="k" style="left:1942px;top:141px;width:201px;height:1px"></div>
<div class="k" style="left:1942px;top:112px;width:1px;height:30px"></div>
<div class="k" style="left:2142px;top:112px;width:1px;height:30px"></div>
<div class="hd" style="left:1943px;top:115px;width:199px;height:26px;text-align:left;padding-left:4px;font-size:18.5px;letter-spacing:0">產業分類</div>
<div class="a" style="left:2145px;top:113px;width:83px;height:28px;background:#ddebf7"></div>
<div class="k" style="left:2144px;top:112px;width:84px;height:1px"></div>
<div class="k" style="left:2144px;top:141px;width:84px;height:1px"></div>
<div class="k" style="left:2144px;top:112px;width:1px;height:30px"></div>
<div class="k" style="left:2227px;top:112px;width:1px;height:30px"></div>
<div class="hd" style="left:2145px;top:115px;width:82px;height:26px;text-align:left;padding-left:3px;font-size:13.5px;letter-spacing:0.6px">外資５日買超佔比</div>
<div class="a" style="left:2230px;top:113px;width:86px;height:28px;background:#ddebf7"></div>
<div class="k" style="left:2229px;top:112px;width:87px;height:1px"></div>
<div class="k" style="left:2229px;top:141px;width:87px;height:1px"></div>
<div class="k" style="left:2229px;top:112px;width:1px;height:30px"></div>
<div class="hd" style="left:2230px;top:115px;width:108px;height:26px;text-align:left;padding-left:2px;font-size:13.5px;letter-spacing:0.6px">投信５日買超佔比</div>
<div class="a" style="left:1713px;top:144px;width:603px;height:1443px;background:#fff2cc"></div>
<div class="k" style="left:1712px;top:143px;width:604px;height:1px"></div>
<div class="k" style="left:1712px;top:143px;width:1px;height:1445px"></div>
<div class="k" style="left:1712px;top:1587px;width:604px;height:1px"></div>
<div class="c" style="left:1712px;top:145.9px;width:50px;text-align:center"><span class="n">3704</span></div>
<div class="c" style="left:1763px;top:145.9px;width:102px;text-align:center">合勤控</div>
<div class="c" style="left:1942px;top:145.9px;width:201px;padding-left:2px">電子中游<span class="l">-</span>網通</div>
<svg class="ic" viewBox="0 0 19 12" style="left:1867px;top:151.9px"><path class="pd" d="M.5 .5H18.5V2L11 10V11.5H8V10L.5 2Z"/></svg>
<div class="c" style="left:1866px;top:145.9px;width:75px;text-align:center"><span class="n">-0.76</span></div>
<svg class="ic" viewBox="0 0 19 12" style="left:2144px;top:151.9px"><rect class="pz" x=".5" y="3.5" width="18" height="6"/></svg>
<div class="c" style="left:2144px;top:145.9px;width:84px;text-align:center"><span class="n">0</span></div>
<svg class="ic" viewBox="0 0 19 12" style="left:2230px;top:151.9px"><rect class="pz" x=".5" y="3.5" width="18" height="6"/></svg>
<div class="c" style="left:2229px;top:145.9px;width:88px;text-align:center"><span class="n">0</span></div>
<div class="c" style="left:1712px;top:174.8px;width:50px;text-align:center"><span class="n">3167</span></div>
<div class="c" style="left:1763px;top:174.8px;width:102px;text-align:center">大量</div>
<div class="c" style="left:1942px;top:174.8px;width:201px;padding-left:2px">傳產<span class="l">-</span>電機</div>
<svg class="ic" viewBox="0 0 19 12" style="left:1867px;top:180.8px"><path class="pd" d="M.5 .5H18.5V2L11 10V11.5H8V10L.5 2Z"/></svg>
<div class="c" style="left:1866px;top:174.8px;width:75px;text-align:center"><span class="n">-1.52</span></div>
<svg class="ic" viewBox="0 0 19 12" style="left:2144px;top:180.8px"><path class="pu" d="M8 .5H11V2L18.5 10V11.5H.5V10L8 2Z"/></svg>
<div class="c" style="left:2144px;top:174.8px;width:84px;text-align:center"><span class="n">2.4</span></div>
<svg class="ic" viewBox="0 0 19 12" style="left:2230px;top:180.8px"><path class="pu" d="M8 .5H11V2L18.5 10V11.5H.5V10L8 2Z"/></svg>
<div class="c" style="left:2229px;top:174.8px;width:88px;text-align:center"><span class="n">0.3</span></div>
<div class="c" style="left:1712px;top:203.7px;width:50px;text-align:center"><span class="n">3045</span></div>
<div class="c" style="left:1763px;top:203.7px;width:102px;text-align:center">台灣大</div>
<div class="c" style="left:1942px;top:203.7px;width:201px;padding-left:2px">電子下游<span class="l">-</span>電信服務</div>
<svg class="ic" viewBox="0 0 19 12" style="left:1867px;top:209.7px"><path class="pu" d="M8 .5H11V2L18.5 10V11.5H.5V10L8 2Z"/></svg>
<div class="c" style="left:1866px;top:203.7px;width:75px;text-align:center"><span class="n">0.47</span></div>
<svg class="ic" viewBox="0 0 19 12" style="left:2144px;top:209.7px"><path class="pu" d="M8 .5H11V2L18.5 10V11.5H.5V10L8 2Z"/></svg>
<div class="c" style="left:2144px;top:203.7px;width:84px;text-align:center"><span class="n">0.1</span></div>
<svg class="ic" viewBox="0 0 19 12" style="left:2230px;top:209.7px"><path class="pd" d="M.5 .5H18.5V2L11 10V11.5H8V10L.5 2Z"/></svg>
<div class="c" style="left:2229px;top:203.7px;width:88px;text-align:center"><span class="n">-0.2</span></div>
<div class="c" style="left:1712px;top:232.6px;width:50px;text-align:center"><span class="n">2890</span></div>
<div class="c" style="left:1763px;top:232.6px;width:102px;text-align:center">永豐金</div>
<div class="c" style="left:1942px;top:232.6px;width:201px;padding-left:2px">金融<span class="l">-</span>金控</div>
<svg class="ic" viewBox="0 0 19 12" style="left:1867px;top:238.6px"><path class="pu" d="M8 .5H11V2L18.5 10V11.5H.5V10L8 2Z"/></svg>
<div class="c" style="left:1866px;top:232.6px;width:75px;text-align:center"><span class="n">1.22</span></div>
<svg class="ic" viewBox="0 0 19 12" style="left:2144px;top:238.6px"><rect class="pz" x=".5" y="3.5" width="18" height="6"/></svg>
<div class="c" style="left:2144px;top:232.6px;width:84px;text-align:center"><span class="n">0</span></div>
<svg class="ic" viewBox="0 0 19 12" style="left:2230px;top:238.6px"><rect class="pz" x=".5" y="3.5" width="18" height="6"/></svg>
<div class="c" style="left:2229px;top:232.6px;width:88px;text-align:center"><span class="n">0</span></div>
<div class="c" style="left:1712px;top:261.5px;width:50px;text-align:center"><span class="n">3034</span></div>
<div class="c" style="left:1763px;top:261.5px;width:102px;text-align:center">聯詠</div>
<div class="c" style="left:1942px;top:261.5px;width:201px;padding-left:2px">電子上游<span class="l">-IC-</span>設計</div>
<svg class="ic" viewBox="0 0 19 12" style="left:1867px;top:267.5px"><path class="pd" d="M.5 .5H18.5V2L11 10V11.5H8V10L.5 2Z"/></svg>
<div class="c" style="left:1866px;top:261.5px;width:75px;text-align:center"><span class="n">-0.91</span></div>
<svg class="ic" viewBox="0 0 19 12" style="left:2144px;top:267.5px"><rect class="pz" x=".5" y="3.5" width="18" height="6"/></svg>
<div class="c" style="left:2144px;top:261.5px;width:84px;text-align:center"><span class="n">0</span></div>
<svg class="ic" viewBox="0 0 19 12" style="left:2230px;top:267.5px"><path class="pd" d="M.5 .5H18.5V2L11 10V11.5H8V10L.5 2Z"/></svg>
<div class="c" style="left:2229px;top:261.5px;width:88px;text-align:center"><span class="n">-0.2</span></div>
<div class="c" style="left:1712px;top:290.4px;width:50px;text-align:center"><span class="n">2886</span></div>
<div class="c" style="left:1763px;top:290.4px;width:102px;text-align:center">兆豐金</div>
<div class="c" style="left:1942px;top:290.4px;width:201px;padding-left:2px">金融<span class="l">-</span>金控</div>
<svg class="ic" viewBox="0 0 19 12" style="left:1867px;top:296.4px"><path class="pu" d="M8 .5H11V2L18.5 10V11.5H.5V10L8 2Z"/></svg>
<div class="c" style="left:1866px;top:290.4px;width:75px;text-align:center"><span class="n">0.37</span></div>
<svg class="ic" viewBox="0 0 19 12" style="left:2144px;top:296.4px"><rect class="pz" x=".5" y="3.5" width="18" height="6"/></svg>
<div class="c" style="left:2144px;top:290.4px;width:84px;text-align:center"><span class="n">0</span></div>
<svg class="ic" viewBox="0 0 19 12" style="left:2230px;top:296.4px"><rect class="pz" x=".5" y="3.5" width="18" height="6"/></svg>
<div class="c" style="left:2229px;top:290.4px;width:88px;text-align:center"><span class="n">0</span></div>
<div class="c" style="left:1712px;top:319.3px;width:50px;text-align:center"><span class="n">3413</span></div>
<div class="c" style="left:1763px;top:319.3px;width:102px;text-align:center">京鼎</div>
<div class="c" style="left:1942px;top:319.3px;width:201px;padding-left:2px">電子上游<span class="l">-IC-</span>半導體設備</div>
<svg class="ic" viewBox="0 0 19 12" style="left:1867px;top:325.3px"><path class="pd" d="M.5 .5H18.5V2L11 10V11.5H8V10L.5 2Z"/></svg>
<div class="c" style="left:1866px;top:319.3px;width:75px;text-align:center"><span class="n">-2.41</span></div>
<svg class="ic" viewBox="0 0 19 12" style="left:2144px;top:325.3px"><path class="pd" d="M.5 .5H18.5V2L11 10V11.5H8V10L.5 2Z"/></svg>
<div class="c" style="left:2144px;top:319.3px;width:84px;text-align:center"><span class="n">-1.2</span></div>
<svg class="ic" viewBox="0 0 19 12" style="left:2230px;top:325.3px"><rect class="pz" x=".5" y="3.5" width="18" height="6"/></svg>
<div class="c" style="left:2229px;top:319.3px;width:88px;text-align:center"><span class="n">0</span></div>
<div class="c" style="left:1712px;top:348.2px;width:50px;text-align:center"><span class="n">4903</span></div>
<div class="c" style="left:1763px;top:348.2px;width:102px;text-align:center">聯光通</div>
<div class="c" style="left:1942px;top:348.2px;width:201px;padding-left:2px">傳產<span class="l">-</span>電線電纜</div>
<svg class="ic" viewBox="0 0 19 12" style="left:1867px;top:354.2px"><path class="pu" d="M8 .5H11V2L18.5 10V11.5H.5V10L8 2Z"/></svg>
<div class="c" style="left:1866px;top:348.2px;width:75px;text-align:center"><span class="n">6.58</span></div>
<svg class="ic" viewBox="0 0 19 12" style="left:2144px;top:354.2px"><path class="pd" d="M.5 .5H18.5V2L11 10V11.5H8V10L.5 2Z"/></svg>
<div class="c" style="left:2144px;top:348.2px;width:84px;text-align:center"><span class="n">-0.8</span></div>
<svg class="ic" viewBox="0 0 19 12" style="left:2230px;top:354.2px"><rect class="pz" x=".5" y="3.5" width="18" height="6"/></svg>
<div class="c" style="left:2229px;top:348.2px;width:88px;text-align:center"><span class="n">0</span></div>
<div class="c" style="left:1712px;top:377.1px;width:50px;text-align:center"><span class="n">3035</span></div>
<div class="c" style="left:1763px;top:377.1px;width:102px;text-align:center">智原</div>
<div class="c" style="left:1942px;top:377.1px;width:201px;padding-left:2px">電子上游<span class="l">-IP/ASIC</span></div>
<svg class="ic" viewBox="0 0 19 12" style="left:1867px;top:383.1px"><path class="pd" d="M.5 .5H18.5V2L11 10V11.5H8V10L.5 2Z"/></svg>
<div class="c" style="left:1866px;top:377.1px;width:75px;text-align:center"><span class="n">-1.18</span></div>
<svg class="ic" viewBox="0 0 19 12" style="left:2144px;top:383.1px"><path class="pd" d="M.5 .5H18.5V2L11 10V11.5H8V10L.5 2Z"/></svg>
<div class="c" style="left:2144px;top:377.1px;width:84px;text-align:center"><span class="n">-0.5</span></div>
<svg class="ic" viewBox="0 0 19 12" style="left:2230px;top:383.1px"><rect class="pz" x=".5" y="3.5" width="18" height="6"/></svg>
<div class="c" style="left:2229px;top:377.1px;width:88px;text-align:center"><span class="n">0</span></div>
<div class="c" style="left:1712px;top:406.0px;width:50px;text-align:center"><span class="n">2316</span></div>
<div class="c" style="left:1763px;top:406.0px;width:102px;text-align:center">楠梓電</div>
<div class="c" style="left:1942px;top:406.0px;width:201px;padding-left:2px">電子上游<span class="l">-PCB-</span>製造</div>
<svg class="ic" viewBox="0 0 19 12" style="left:1867px;top:412.0px"><path class="pu" d="M8 .5H11V2L18.5 10V11.5H.5V10L8 2Z"/></svg>
<div class="c" style="left:1866px;top:406.0px;width:75px;text-align:center"><span class="n">1.01</span></div>
<svg class="ic" viewBox="0 0 19 12" style="left:2144px;top:412.0px"><path class="pu" d="M8 .5H11V2L18.5 10V11.5H.5V10L8 2Z"/></svg>
<div class="c" style="left:2144px;top:406.0px;width:84px;text-align:center"><span class="n">0.3</span></div>
<svg class="ic" viewBox="0 0 19 12" style="left:2230px;top:412.0px"><path class="pd" d="M.5 .5H18.5V2L11 10V11.5H8V10L.5 2Z"/></svg>
<div class="c" style="left:2229px;top:406.0px;width:88px;text-align:center"><span class="n">-0.1</span></div>
<div class="c" style="left:1712px;top:434.9px;width:50px;text-align:center"><span class="n">6727</span></div>
<div class="c" style="left:1763px;top:434.9px;width:102px;text-align:center">亞泰金屬</div>
<div class="c" style="left:1942px;top:434.9px;width:201px;padding-left:2px">電子上游<span class="l">-PCB-</span>材料設備</div>
<svg class="ic" viewBox="0 0 19 12" style="left:1867px;top:440.9px"><path class="pu" d="M8 .5H11V2L18.5 10V11.5H.5V10L8 2Z"/></svg>
<div class="c" style="left:1866px;top:434.9px;width:75px;text-align:center"><span class="n">3.47</span></div>
<svg class="ic" viewBox="0 0 19 12" style="left:2144px;top:440.9px"><path class="pu" d="M8 .5H11V2L18.5 10V11.5H.5V10L8 2Z"/></svg>
<div class="c" style="left:2144px;top:434.9px;width:84px;text-align:center"><span class="n">0.5</span></div>
<svg class="ic" viewBox="0 0 19 12" style="left:2230px;top:440.9px"><rect class="pz" x=".5" y="3.5" width="18" height="6"/></svg>
<div class="c" style="left:2229px;top:434.9px;width:88px;text-align:center"><span class="n">0</span></div>
<div class="c" style="left:1712px;top:463.8px;width:50px;text-align:center"><span class="n">3052</span></div>
<div class="c" style="left:1763px;top:463.8px;width:102px;text-align:center">夆典</div>
<div class="c" style="left:1942px;top:463.8px;width:201px;padding-left:2px">傳產<span class="l">-</span>營建</div>
<svg class="ic" viewBox="0 0 19 12" style="left:1867px;top:469.8px"><path class="pd" d="M.5 .5H18.5V2L11 10V11.5H8V10L.5 2Z"/></svg>
<div class="c" style="left:1866px;top:463.8px;width:75px;text-align:center"><span class="n">-1.24</span></div>
<svg class="ic" viewBox="0 0 19 12" style="left:2144px;top:469.8px"><path class="pu" d="M8 .5H11V2L18.5 10V11.5H.5V10L8 2Z"/></svg>
<div class="c" style="left:2144px;top:463.8px;width:84px;text-align:center"><span class="n">0.1</span></div>
<svg class="ic" viewBox="0 0 19 12" style="left:2230px;top:469.8px"><rect class="pz" x=".5" y="3.5" width="18" height="6"/></svg>
<div class="c" style="left:2229px;top:463.8px;width:88px;text-align:center"><span class="n">0</span></div>
<div class="c" style="left:1712px;top:492.7px;width:50px;text-align:center"><span class="n">2495</span></div>
<div class="c" style="left:1763px;top:492.7px;width:102px;text-align:center">普安</div>
<div class="c" style="left:1942px;top:492.7px;width:201px;padding-left:2px">電子中游<span class="l">-</span>磁碟陣列</div>
<svg class="ic" viewBox="0 0 19 12" style="left:1867px;top:498.7px"><path class="pd" d="M.5 .5H18.5V2L11 10V11.5H8V10L.5 2Z"/></svg>
<div class="c" style="left:1866px;top:492.7px;width:75px;text-align:center"><span class="n">-0.16</span></div>
<svg class="ic" viewBox="0 0 19 12" style="left:2144px;top:498.7px"><path class="pu" d="M8 .5H11V2L18.5 10V11.5H.5V10L8 2Z"/></svg>
<div class="c" style="left:2144px;top:492.7px;width:84px;text-align:center"><span class="n">0.4</span></div>
<svg class="ic" viewBox="0 0 19 12" style="left:2230px;top:498.7px"><rect class="pz" x=".5" y="3.5" width="18" height="6"/></svg>
<div class="c" style="left:2229px;top:492.7px;width:88px;text-align:center"><span class="n">0</span></div>
<div class="c" style="left:1712px;top:521.6px;width:50px;text-align:center"><span class="n">6176</span></div>
<div class="c" style="left:1763px;top:521.6px;width:102px;text-align:center">瑞儀</div>
<div class="c" style="left:1942px;top:521.6px;width:201px;padding-left:2px">電子中游<span class="l">-LCD-</span>零組件</div>
<svg class="ic" viewBox="0 0 19 12" style="left:1867px;top:527.6px"><path class="pu" d="M8 .5H11V2L18.5 10V11.5H.5V10L8 2Z"/></svg>
<div class="c" style="left:1866px;top:521.6px;width:75px;text-align:center"><span class="n">0.82</span></div>
<svg class="ic" viewBox="0 0 19 12" style="left:2144px;top:527.6px"><path class="pu" d="M8 .5H11V2L18.5 10V11.5H.5V10L8 2Z"/></svg>
<div class="c" style="left:2144px;top:521.6px;width:84px;text-align:center"><span class="n">0.3</span></div>
<svg class="ic" viewBox="0 0 19 12" style="left:2230px;top:527.6px"><path class="pd" d="M.5 .5H18.5V2L11 10V11.5H8V10L.5 2Z"/></svg>
<div class="c" style="left:2229px;top:521.6px;width:88px;text-align:center"><span class="n">-0.3</span></div>
<div class="c" style="left:1712px;top:550.5px;width:50px;text-align:center"><span class="n">2542</span></div>
<div class="c" style="left:1763px;top:550.5px;width:102px;text-align:center">興富發</div>
<div class="c" style="left:1942px;top:550.5px;width:201px;padding-left:2px">傳產<span class="l">-</span>營建</div>
<svg class="ic" viewBox="0 0 19 12" style="left:1867px;top:556.5px"><path class="pd" d="M.5 .5H18.5V2L11 10V11.5H8V10L.5 2Z"/></svg>
<div class="c" style="left:1866px;top:550.5px;width:75px;text-align:center"><span class="n">-0.5</span></div>
<svg class="ic" viewBox="0 0 19 12" style="left:2144px;top:556.5px"><path class="pu" d="M8 .5H11V2L18.5 10V11.5H.5V10L8 2Z"/></svg>
<div class="c" style="left:2144px;top:550.5px;width:84px;text-align:center"><span class="n">0.2</span></div>
<svg class="ic" viewBox="0 0 19 12" style="left:2230px;top:556.5px"><rect class="pz" x=".5" y="3.5" width="18" height="6"/></svg>
<div class="c" style="left:2229px;top:550.5px;width:88px;text-align:center"><span class="n">0</span></div>
<div class="c" style="left:1712px;top:579.4px;width:50px;text-align:center"><span class="n">6217</span></div>
<div class="c" style="left:1763px;top:579.4px;width:102px;text-align:center">中探針</div>
<div class="c" style="left:1942px;top:579.4px;width:201px;padding-left:2px">電子上游<span class="l">-PCB-</span>材料設備</div>
<svg class="ic" viewBox="0 0 19 12" style="left:1867px;top:585.4px"><path class="pd" d="M.5 .5H18.5V2L11 10V11.5H8V10L.5 2Z"/></svg>
<div class="c" style="left:1866px;top:579.4px;width:75px;text-align:center"><span class="n">-0.96</span></div>
<svg class="ic" viewBox="0 0 19 12" style="left:2144px;top:585.4px"><path class="pu" d="M8 .5H11V2L18.5 10V11.5H.5V10L8 2Z"/></svg>
<div class="c" style="left:2144px;top:579.4px;width:84px;text-align:center"><span class="n">2.4</span></div>
<svg class="ic" viewBox="0 0 19 12" style="left:2230px;top:585.4px"><rect class="pz" x=".5" y="3.5" width="18" height="6"/></svg>
<div class="c" style="left:2229px;top:579.4px;width:88px;text-align:center"><span class="n">0</span></div>
<div class="c" style="left:1712px;top:608.3px;width:50px;text-align:center"><span class="n">2606</span></div>
<div class="c" style="left:1763px;top:608.3px;width:102px;text-align:center">裕民</div>
<div class="c" style="left:1942px;top:608.3px;width:201px;padding-left:2px">傳產<span class="l">-</span>航運</div>
<svg class="ic" viewBox="0 0 19 12" style="left:1867px;top:614.3px"><path class="pu" d="M8 .5H11V2L18.5 10V11.5H.5V10L8 2Z"/></svg>
<div class="c" style="left:1866px;top:608.3px;width:75px;text-align:center"><span class="n">1.16</span></div>
<svg class="ic" viewBox="0 0 19 12" style="left:2144px;top:614.3px"><path class="pu" d="M8 .5H11V2L18.5 10V11.5H.5V10L8 2Z"/></svg>
<div class="c" style="left:2144px;top:608.3px;width:84px;text-align:center"><span class="n">0.6</span></div>
<svg class="ic" viewBox="0 0 19 12" style="left:2230px;top:614.3px"><path class="pd" d="M.5 .5H18.5V2L11 10V11.5H8V10L.5 2Z"/></svg>
<div class="c" style="left:2229px;top:608.3px;width:88px;text-align:center"><span class="n">-0.4</span></div>
<div class="c" style="left:1712px;top:637.2px;width:50px;text-align:center"><span class="n">1722</span></div>
<div class="c" style="left:1763px;top:637.2px;width:102px;text-align:center">台肥</div>
<div class="c" style="left:1942px;top:637.2px;width:201px;padding-left:2px">傳產<span class="l">-</span>化學工業</div>
<svg class="ic" viewBox="0 0 19 12" style="left:1867px;top:643.2px"><path class="pu" d="M8 .5H11V2L18.5 10V11.5H.5V10L8 2Z"/></svg>
<div class="c" style="left:1866px;top:637.2px;width:75px;text-align:center"><span class="n">1.07</span></div>
<svg class="ic" viewBox="0 0 19 12" style="left:2144px;top:643.2px"><path class="pd" d="M.5 .5H18.5V2L11 10V11.5H8V10L.5 2Z"/></svg>
<div class="c" style="left:2144px;top:637.2px;width:84px;text-align:center"><span class="n">-0.3</span></div>
<svg class="ic" viewBox="0 0 19 12" style="left:2230px;top:643.2px"><rect class="pz" x=".5" y="3.5" width="18" height="6"/></svg>
<div class="c" style="left:2229px;top:637.2px;width:88px;text-align:center"><span class="n">0</span></div>
<div class="c" style="left:1712px;top:666.1px;width:50px;text-align:center"><span class="n">2903</span></div>
<div class="c" style="left:1763px;top:666.1px;width:102px;text-align:center">遠百</div>
<div class="c" style="left:1942px;top:666.1px;width:201px;padding-left:2px">傳產<span class="l">-</span>百貨</div>
<svg class="ic" viewBox="0 0 19 12" style="left:1867px;top:672.1px"><path class="pu" d="M8 .5H11V2L18.5 10V11.5H.5V10L8 2Z"/></svg>
<div class="c" style="left:1866px;top:666.1px;width:75px;text-align:center"><span class="n">0.45</span></div>
<svg class="ic" viewBox="0 0 19 12" style="left:2144px;top:672.1px"><path class="pd" d="M.5 .5H18.5V2L11 10V11.5H8V10L.5 2Z"/></svg>
<div class="c" style="left:2144px;top:666.1px;width:84px;text-align:center"><span class="n">-0.1</span></div>
<svg class="ic" viewBox="0 0 19 12" style="left:2230px;top:672.1px"><path class="pd" d="M.5 .5H18.5V2L11 10V11.5H8V10L.5 2Z"/></svg>
<div class="c" style="left:2229px;top:666.1px;width:88px;text-align:center"><span class="n">-0.1</span></div>
<div class="c" style="left:1712px;top:695.0px;width:50px;text-align:center"><span class="n">2103</span></div>
<div class="c" style="left:1763px;top:695.0px;width:102px;text-align:center">台橡</div>
<div class="c" style="left:1942px;top:695.0px;width:201px;padding-left:2px">傳產<span class="l">-</span>橡膠</div>
<svg class="ic" viewBox="0 0 19 12" style="left:1867px;top:701.0px"><path class="pu" d="M8 .5H11V2L18.5 10V11.5H.5V10L8 2Z"/></svg>
<div class="c" style="left:1866px;top:695.0px;width:75px;text-align:center"><span class="n">0.98</span></div>
<svg class="ic" viewBox="0 0 19 12" style="left:2144px;top:701.0px"><path class="pu" d="M8 .5H11V2L18.5 10V11.5H.5V10L8 2Z"/></svg>
<div class="c" style="left:2144px;top:695.0px;width:84px;text-align:center"><span class="n">0.3</span></div>
<svg class="ic" viewBox="0 0 19 12" style="left:2230px;top:701.0px"><rect class="pz" x=".5" y="3.5" width="18" height="6"/></svg>
<div class="c" style="left:2229px;top:695.0px;width:88px;text-align:center"><span class="n">0</span></div>
<div class="c" style="left:1712px;top:723.9px;width:50px;text-align:center"><span class="n">3056</span></div>
<div class="c" style="left:1763px;top:723.9px;width:102px;text-align:center">富華新</div>
<div class="c" style="left:1942px;top:723.9px;width:201px;padding-left:2px">傳產<span class="l">-</span>營建</div>
<svg class="ic" viewBox="0 0 19 12" style="left:1867px;top:729.9px"><path class="pu" d="M8 .5H11V2L18.5 10V11.5H.5V10L8 2Z"/></svg>
<div class="c" style="left:1866px;top:723.9px;width:75px;text-align:center"><span class="n">1.13</span></div>
<svg class="ic" viewBox="0 0 19 12" style="left:2144px;top:729.9px"><path class="pu" d="M8 .5H11V2L18.5 10V11.5H.5V10L8 2Z"/></svg>
<div class="c" style="left:2144px;top:723.9px;width:84px;text-align:center"><span class="n">0.3</span></div>
<svg class="ic" viewBox="0 0 19 12" style="left:2230px;top:729.9px"><rect class="pz" x=".5" y="3.5" width="18" height="6"/></svg>
<div class="c" style="left:2229px;top:723.9px;width:88px;text-align:center"><span class="n">0</span></div>
<div class="c" style="left:1712px;top:752.8px;width:50px;text-align:center"><span class="n">2883</span></div>
<div class="c" style="left:1763px;top:752.8px;width:102px;text-align:center">凱基金</div>
<div class="c" style="left:1942px;top:752.8px;width:201px;padding-left:2px">金融<span class="l">-</span>金控</div>
<svg class="ic" viewBox="0 0 19 12" style="left:1867px;top:758.8px"><path class="pu" d="M8 .5H11V2L18.5 10V11.5H.5V10L8 2Z"/></svg>
<div class="c" style="left:1866px;top:752.8px;width:75px;text-align:center"><span class="n">0.29</span></div>
<svg class="ic" viewBox="0 0 19 12" style="left:2144px;top:758.8px"><path class="pu" d="M8 .5H11V2L18.5 10V11.5H.5V10L8 2Z"/></svg>
<div class="c" style="left:2144px;top:752.8px;width:84px;text-align:center"><span class="n">0.3</span></div>
<svg class="ic" viewBox="0 0 19 12" style="left:2230px;top:758.8px"><rect class="pz" x=".5" y="3.5" width="18" height="6"/></svg>
<div class="c" style="left:2229px;top:752.8px;width:88px;text-align:center"><span class="n">0</span></div>
<div class="a" style="left:2340px;top:83px;width:558px;height:27px;background:#5b9bd5"></div>
<div class="k" style="left:2338px;top:80px;width:563px;height:1px"></div>
<div class="a" style="left:2339px;top:81px;width:561px;height:1px;background:#6f8aa6"></div>
<div class="k" style="left:2339px;top:82px;width:560px;height:1px"></div>
<div class="k" style="left:2339px;top:110px;width:560px;height:1px"></div>
<div class="k" style="left:2339px;top:82px;width:1px;height:29px"></div>
<div class="k" style="left:2898px;top:82px;width:1px;height:29px"></div>
<div class="k" style="left:2900px;top:80px;width:1px;height:33px"></div>
<div class="k" style="left:2338px;top:80px;width:1px;height:1509px"></div>
<div class="a" style="left:2340px;top:83px;width:558px;height:27px;text-align:center;font-size:19px;line-height:27px;color:#000">接近<span style="font-size:19px;letter-spacing:0;font-weight:normal">60MA</span></div>
<div class="k" style="left:2338px;top:112px;width:562px;height:1px"></div>
<div class="a" style="left:2340px;top:113px;width:54px;height:28px;background:#ddebf7"></div>
<div class="k" style="left:2339px;top:112px;width:55px;height:1px"></div>
<div class="k" style="left:2339px;top:141px;width:55px;height:1px"></div>
<div class="k" style="left:2339px;top:112px;width:1px;height:30px"></div>
<div class="k" style="left:2393px;top:112px;width:1px;height:30px"></div>
<div class="hd" style="left:2340px;top:115px;width:53px;height:26px;text-align:center;padding-left:0px;font-size:18.5px;letter-spacing:1px">代號</div>
<div class="a" style="left:2396px;top:113px;width:101px;height:28px;background:#ddebf7"></div>
<div class="k" style="left:2395px;top:112px;width:102px;height:1px"></div>
<div class="k" style="left:2395px;top:141px;width:102px;height:1px"></div>
<div class="k" style="left:2395px;top:112px;width:1px;height:30px"></div>
<div class="k" style="left:2496px;top:112px;width:1px;height:30px"></div>
<div class="hd" style="left:2396px;top:115px;width:100px;height:26px;text-align:center;padding-left:0px;font-size:18.5px;letter-spacing:1px">名稱</div>
<div class="a" style="left:2499px;top:113px;width:71px;height:28px;background:#ddebf7"></div>
<div class="k" style="left:2498px;top:112px;width:72px;height:1px"></div>
<div class="k" style="left:2498px;top:141px;width:72px;height:1px"></div>
<div class="k" style="left:2498px;top:112px;width:1px;height:30px"></div>
<div class="k" style="left:2569px;top:112px;width:1px;height:30px"></div>
<div class="hd" style="left:2499px;top:115px;width:70px;height:26px;text-align:center;padding-left:0px;font-size:18.5px;letter-spacing:0">漲幅%</div>
<div class="a" style="left:2572px;top:113px;width:177px;height:28px;background:#ddebf7"></div>
<div class="k" style="left:2571px;top:112px;width:178px;height:1px"></div>
<div class="k" style="left:2571px;top:141px;width:178px;height:1px"></div>
<div class="k" style="left:2571px;top:112px;width:1px;height:30px"></div>
<div class="k" style="left:2748px;top:112px;width:1px;height:30px"></div>
<div class="hd" style="left:2572px;top:115px;width:176px;height:26px;text-align:left;padding-left:4px;font-size:18.5px;letter-spacing:0">產業分類</div>
<div class="a" style="left:2751px;top:113px;width:74px;height:28px;background:#ddebf7"></div>
<div class="k" style="left:2750px;top:112px;width:75px;height:1px"></div>
<div class="k" style="left:2750px;top:141px;width:75px;height:1px"></div>
<div class="k" style="left:2750px;top:112px;width:1px;height:30px"></div>
<div class="k" style="left:2824px;top:112px;width:1px;height:30px"></div>
<div class="hd" style="left:2751px;top:115px;width:73px;height:26px;text-align:left;padding-left:3px;font-size:13.5px;letter-spacing:0.6px">外資５日買超佔比</div>
<div class="a" style="left:2827px;top:113px;width:72px;height:28px;background:#ddebf7"></div>
<div class="k" style="left:2826px;top:112px;width:73px;height:1px"></div>
<div class="k" style="left:2826px;top:141px;width:73px;height:1px"></div>
<div class="k" style="left:2826px;top:112px;width:1px;height:30px"></div>
<div class="hd" style="left:2827px;top:115px;width:72px;height:26px;text-align:left;padding-left:2px;font-size:13.5px;letter-spacing:0.6px">投信５日買超佔比</div>
<div class="a" style="left:2340px;top:144px;width:560px;height:1443px;background:#fff2cc"></div>
<div class="k" style="left:2339px;top:143px;width:561px;height:1px"></div>
<div class="k" style="left:2339px;top:143px;width:1px;height:1445px"></div>
<div class="k" style="left:2339px;top:1587px;width:561px;height:1px"></div>
<div class="c" style="left:2340px;top:145.9px;width:54px;text-align:center"><span class="n">2317</span></div>
<div class="c" style="left:2395px;top:145.9px;width:102px;text-align:center">鴻海</div>
<div class="c" style="left:2571px;top:145.9px;width:178px;padding-left:2px">電子中游<span class="l">-EMS</span></div>
<svg class="ic" viewBox="0 0 19 12" style="left:2499px;top:151.9px"><path class="pd" d="M.5 .5H18.5V2L11 10V11.5H8V10L.5 2Z"/></svg>
<div class="c" style="left:2498px;top:145.9px;width:72px;text-align:center"><span class="n">-0.43</span></div>
<svg class="ic" viewBox="0 0 19 12" style="left:2750px;top:151.9px"><path class="pu" d="M8 .5H11V2L18.5 10V11.5H.5V10L8 2Z"/></svg>
<div class="c" style="left:2750px;top:145.9px;width:75px;text-align:center"><span class="n">0.1</span></div>
<svg class="ic" viewBox="0 0 19 12" style="left:2827px;top:151.9px"><rect class="pz" x=".5" y="3.5" width="18" height="6"/></svg>
<div class="c" style="left:2826px;top:145.9px;width:73px;text-align:center"><span class="n">0</span></div>
<div class="c" style="left:2340px;top:174.8px;width:54px;text-align:center"><span class="n">3661</span></div>
<div class="c" style="left:2395px;top:174.8px;width:102px;text-align:center">世芯<span class="l">-KY</span></div>
<div class="c" style="left:2571px;top:174.8px;width:178px;padding-left:2px">電子上游<span class="l">-IP/ASIC</span></div>
<svg class="ic" viewBox="0 0 19 12" style="left:2499px;top:180.8px"><path class="pd" d="M.5 .5H18.5V2L11 10V11.5H8V10L.5 2Z"/></svg>
<div class="c" style="left:2498px;top:174.8px;width:72px;text-align:center"><span class="n">-4.05</span></div>
<svg class="ic" viewBox="0 0 19 12" style="left:2750px;top:180.8px"><path class="pd" d="M.5 .5H18.5V2L11 10V11.5H8V10L.5 2Z"/></svg>
<div class="c" style="left:2750px;top:174.8px;width:75px;text-align:center"><span class="n">-1.2</span></div>
<svg class="ic" viewBox="0 0 19 12" style="left:2827px;top:180.8px"><path class="pd" d="M.5 .5H18.5V2L11 10V11.5H8V10L.5 2Z"/></svg>
<div class="c" style="left:2826px;top:174.8px;width:73px;text-align:center"><span class="n">-0.5</span></div>
<div class="c" style="left:2340px;top:203.7px;width:54px;text-align:center"><span class="n">3017</span></div>
<div class="c" style="left:2395px;top:203.7px;width:102px;text-align:center">奇鋐</div>
<div class="c" style="left:2571px;top:203.7px;width:178px;padding-left:2px">電子中游<span class="l">-NB</span>與手機零組件</div>
<svg class="ic" viewBox="0 0 19 12" style="left:2499px;top:209.7px"><path class="pd" d="M.5 .5H18.5V2L11 10V11.5H8V10L.5 2Z"/></svg>
<div class="c" style="left:2498px;top:203.7px;width:72px;text-align:center"><span class="n">-2.82</span></div>
<svg class="ic" viewBox="0 0 19 12" style="left:2750px;top:209.7px"><path class="pd" d="M.5 .5H18.5V2L11 10V11.5H8V10L.5 2Z"/></svg>
<div class="c" style="left:2750px;top:203.7px;width:75px;text-align:center"><span class="n">-0.4</span></div>
<svg class="ic" viewBox="0 0 19 12" style="left:2827px;top:209.7px"><path class="pd" d="M.5 .5H18.5V2L11 10V11.5H8V10L.5 2Z"/></svg>
<div class="c" style="left:2826px;top:203.7px;width:73px;text-align:center"><span class="n">-0.5</span></div>
<div class="c" style="left:2340px;top:232.6px;width:54px;text-align:center"><span class="n">8046</span></div>
<div class="c" style="left:2395px;top:232.6px;width:102px;text-align:center">南電</div>
<div class="c" style="left:2571px;top:232.6px;width:178px;padding-left:2px">電子上游<span class="l">-ABF</span></div>
<svg class="ic" viewBox="0 0 19 12" style="left:2499px;top:238.6px"><path class="pu" d="M8 .5H11V2L18.5 10V11.5H.5V10L8 2Z"/></svg>
<div class="c" style="left:2498px;top:232.6px;width:72px;text-align:center"><span class="n">0.76</span></div>
<svg class="ic" viewBox="0 0 19 12" style="left:2750px;top:238.6px"><path class="pu" d="M8 .5H11V2L18.5 10V11.5H.5V10L8 2Z"/></svg>
<div class="c" style="left:2750px;top:232.6px;width:75px;text-align:center"><span class="n">1.1</span></div>
<svg class="ic" viewBox="0 0 19 12" style="left:2827px;top:238.6px"><path class="pu" d="M8 .5H11V2L18.5 10V11.5H.5V10L8 2Z"/></svg>
<div class="c" style="left:2826px;top:232.6px;width:73px;text-align:center"><span class="n">0.2</span></div>
<div class="c" style="left:2340px;top:261.5px;width:54px;text-align:center"><span class="n">3324</span></div>
<div class="c" style="left:2395px;top:261.5px;width:102px;text-align:center">雙鴻</div>
<div class="c" style="left:2571px;top:261.5px;width:178px;padding-left:2px">電子中游<span class="l">-</span>散熱零組件</div>
<svg class="ic" viewBox="0 0 19 12" style="left:2499px;top:267.5px"><path class="pd" d="M.5 .5H18.5V2L11 10V11.5H8V10L.5 2Z"/></svg>
<div class="c" style="left:2498px;top:261.5px;width:72px;text-align:center"><span class="n">-2.32</span></div>
<svg class="ic" viewBox="0 0 19 12" style="left:2750px;top:267.5px"><path class="pd" d="M.5 .5H18.5V2L11 10V11.5H8V10L.5 2Z"/></svg>
<div class="c" style="left:2750px;top:261.5px;width:75px;text-align:center"><span class="n">-0.7</span></div>
<svg class="ic" viewBox="0 0 19 12" style="left:2827px;top:267.5px"><path class="pd" d="M.5 .5H18.5V2L11 10V11.5H8V10L.5 2Z"/></svg>
<div class="c" style="left:2826px;top:261.5px;width:73px;text-align:center"><span class="n">-0.2</span></div>
<div class="c" style="left:2340px;top:290.4px;width:54px;text-align:center"><span class="n">3231</span></div>
<div class="c" style="left:2395px;top:290.4px;width:102px;text-align:center">緯創</div>
<div class="c" style="left:2571px;top:290.4px;width:178px;padding-left:2px">電子下游<span class="l">-</span>筆記型電腦</div>
<svg class="ic" viewBox="0 0 19 12" style="left:2499px;top:296.4px"><path class="pd" d="M.5 .5H18.5V2L11 10V11.5H8V10L.5 2Z"/></svg>
<div class="c" style="left:2498px;top:290.4px;width:72px;text-align:center"><span class="n">-1.71</span></div>
<svg class="ic" viewBox="0 0 19 12" style="left:2750px;top:296.4px"><path class="pd" d="M.5 .5H18.5V2L11 10V11.5H8V10L.5 2Z"/></svg>
<div class="c" style="left:2750px;top:290.4px;width:75px;text-align:center"><span class="n">-1.6</span></div>
<svg class="ic" viewBox="0 0 19 12" style="left:2827px;top:296.4px"><path class="pd" d="M.5 .5H18.5V2L11 10V11.5H8V10L.5 2Z"/></svg>
<div class="c" style="left:2826px;top:290.4px;width:73px;text-align:center"><span class="n">-0.4</span></div>
<div class="c" style="left:2340px;top:319.3px;width:54px;text-align:center"><span class="n">2379</span></div>
<div class="c" style="left:2395px;top:319.3px;width:102px;text-align:center">瑞昱</div>
<div class="c" style="left:2571px;top:319.3px;width:178px;padding-left:2px">電子上游<span class="l">-IC-</span>設計</div>
<svg class="ic" viewBox="0 0 19 12" style="left:2499px;top:325.3px"><path class="pd" d="M.5 .5H18.5V2L11 10V11.5H8V10L.5 2Z"/></svg>
<div class="c" style="left:2498px;top:319.3px;width:72px;text-align:center"><span class="n">-3.57</span></div>
<svg class="ic" viewBox="0 0 19 12" style="left:2750px;top:325.3px"><path class="pd" d="M.5 .5H18.5V2L11 10V11.5H8V10L.5 2Z"/></svg>
<div class="c" style="left:2750px;top:319.3px;width:75px;text-align:center"><span class="n">-0.3</span></div>
<svg class="ic" viewBox="0 0 19 12" style="left:2827px;top:325.3px"><path class="pd" d="M.5 .5H18.5V2L11 10V11.5H8V10L.5 2Z"/></svg>
<div class="c" style="left:2826px;top:319.3px;width:73px;text-align:center"><span class="n">-0.4</span></div>
<div class="c" style="left:2340px;top:348.2px;width:54px;text-align:center"><span class="n">2301</span></div>
<div class="c" style="left:2395px;top:348.2px;width:102px;text-align:center">光寶科</div>
<div class="c" style="left:2571px;top:348.2px;width:178px;padding-left:2px">電子中游<span class="l">-</span>電源供應器</div>
<svg class="ic" viewBox="0 0 19 12" style="left:2499px;top:354.2px"><path class="pd" d="M.5 .5H18.5V2L11 10V11.5H8V10L.5 2Z"/></svg>
<div class="c" style="left:2498px;top:348.2px;width:72px;text-align:center"><span class="n">-1.2</span></div>
<svg class="ic" viewBox="0 0 19 12" style="left:2750px;top:354.2px"><rect class="pz" x=".5" y="3.5" width="18" height="6"/></svg>
<div class="c" style="left:2750px;top:348.2px;width:75px;text-align:center"><span class="n">0</span></div>
<svg class="ic" viewBox="0 0 19 12" style="left:2827px;top:354.2px"><path class="pd" d="M.5 .5H18.5V2L11 10V11.5H8V10L.5 2Z"/></svg>
<div class="c" style="left:2826px;top:348.2px;width:73px;text-align:center"><span class="n">-0.1</span></div>
<div class="c" style="left:2340px;top:377.1px;width:54px;text-align:center"><span class="n">8210</span></div>
<div class="c" style="left:2395px;top:377.1px;width:102px;text-align:center">勤誠</div>
<div class="c" style="left:2571px;top:377.1px;width:178px;padding-left:2px">電子中游<span class="l">-</span>機殼</div>
<svg class="ic" viewBox="0 0 19 12" style="left:2499px;top:383.1px"><path class="pd" d="M.5 .5H18.5V2L11 10V11.5H8V10L.5 2Z"/></svg>
<div class="c" style="left:2498px;top:377.1px;width:72px;text-align:center"><span class="n">-4.7</span></div>
<svg class="ic" viewBox="0 0 19 12" style="left:2750px;top:383.1px"><path class="pd" d="M.5 .5H18.5V2L11 10V11.5H8V10L.5 2Z"/></svg>
<div class="c" style="left:2750px;top:377.1px;width:75px;text-align:center"><span class="n">-0.9</span></div>
<svg class="ic" viewBox="0 0 19 12" style="left:2827px;top:383.1px"><path class="pu" d="M8 .5H11V2L18.5 10V11.5H.5V10L8 2Z"/></svg>
<div class="c" style="left:2826px;top:377.1px;width:73px;text-align:center"><span class="n">0.5</span></div>
<div class="c" style="left:2340px;top:406.0px;width:54px;text-align:center"><span class="n">2881</span></div>
<div class="c" style="left:2395px;top:406.0px;width:102px;text-align:center">富邦金</div>
<div class="c" style="left:2571px;top:406.0px;width:178px;padding-left:2px">金融<span class="l">-</span>金控</div>
<svg class="ic" viewBox="0 0 19 12" style="left:2499px;top:412.0px"><path class="pu" d="M8 .5H11V2L18.5 10V11.5H.5V10L8 2Z"/></svg>
<div class="c" style="left:2498px;top:406.0px;width:72px;text-align:center"><span class="n">0.32</span></div>
<svg class="ic" viewBox="0 0 19 12" style="left:2750px;top:412.0px"><path class="pu" d="M8 .5H11V2L18.5 10V11.5H.5V10L8 2Z"/></svg>
<div class="c" style="left:2750px;top:406.0px;width:75px;text-align:center"><span class="n">0.1</span></div>
<svg class="ic" viewBox="0 0 19 12" style="left:2827px;top:412.0px"><path class="pd" d="M.5 .5H18.5V2L11 10V11.5H8V10L.5 2Z"/></svg>
<div class="c" style="left:2826px;top:406.0px;width:73px;text-align:center"><span class="n">-0.2</span></div>
<div class="c" style="left:2340px;top:434.9px;width:54px;text-align:center"><span class="n">3045</span></div>
<div class="c" style="left:2395px;top:434.9px;width:102px;text-align:center">台灣大</div>
<div class="c" style="left:2571px;top:434.9px;width:178px;padding-left:2px">電子下游<span class="l">-</span>電信服務</div>
<svg class="ic" viewBox="0 0 19 12" style="left:2499px;top:440.9px"><path class="pu" d="M8 .5H11V2L18.5 10V11.5H.5V10L8 2Z"/></svg>
<div class="c" style="left:2498px;top:434.9px;width:72px;text-align:center"><span class="n">0.47</span></div>
<svg class="ic" viewBox="0 0 19 12" style="left:2750px;top:440.9px"><path class="pu" d="M8 .5H11V2L18.5 10V11.5H.5V10L8 2Z"/></svg>
<div class="c" style="left:2750px;top:434.9px;width:75px;text-align:center"><span class="n">0.1</span></div>
<svg class="ic" viewBox="0 0 19 12" style="left:2827px;top:440.9px"><path class="pd" d="M.5 .5H18.5V2L11 10V11.5H8V10L.5 2Z"/></svg>
<div class="c" style="left:2826px;top:434.9px;width:73px;text-align:center"><span class="n">-0.2</span></div>
<div class="c" style="left:2340px;top:463.8px;width:54px;text-align:center"><span class="n">2382</span></div>
<div class="c" style="left:2395px;top:463.8px;width:102px;text-align:center">廣達</div>
<div class="c" style="left:2571px;top:463.8px;width:178px;padding-left:2px">電子下游<span class="l">-</span>筆記型電腦</div>
<svg class="ic" viewBox="0 0 19 12" style="left:2499px;top:469.8px"><path class="pd" d="M.5 .5H18.5V2L11 10V11.5H8V10L.5 2Z"/></svg>
<div class="c" style="left:2498px;top:463.8px;width:72px;text-align:center"><span class="n">-1.05</span></div>
<svg class="ic" viewBox="0 0 19 12" style="left:2750px;top:469.8px"><path class="pu" d="M8 .5H11V2L18.5 10V11.5H.5V10L8 2Z"/></svg>
<div class="c" style="left:2750px;top:463.8px;width:75px;text-align:center"><span class="n">0.7</span></div>
<svg class="ic" viewBox="0 0 19 12" style="left:2827px;top:469.8px"><rect class="pz" x=".5" y="3.5" width="18" height="6"/></svg>
<div class="c" style="left:2826px;top:463.8px;width:73px;text-align:center"><span class="n">0</span></div>
<div class="c" style="left:2340px;top:492.7px;width:54px;text-align:center"><span class="n">3450</span></div>
<div class="c" style="left:2395px;top:492.7px;width:102px;text-align:center">聯鈞</div>
<div class="c" style="left:2571px;top:492.7px;width:178px;padding-left:2px">電子上游<span class="l">-IC-</span>封測</div>
<svg class="ic" viewBox="0 0 19 12" style="left:2499px;top:498.7px"><path class="pd" d="M.5 .5H18.5V2L11 10V11.5H8V10L.5 2Z"/></svg>
<div class="c" style="left:2498px;top:492.7px;width:72px;text-align:center"><span class="n">-0.78</span></div>
<svg class="ic" viewBox="0 0 19 12" style="left:2750px;top:498.7px"><path class="pd" d="M.5 .5H18.5V2L11 10V11.5H8V10L.5 2Z"/></svg>
<div class="c" style="left:2750px;top:492.7px;width:75px;text-align:center"><span class="n">-1.1</span></div>
<svg class="ic" viewBox="0 0 19 12" style="left:2827px;top:498.7px"><rect class="pz" x=".5" y="3.5" width="18" height="6"/></svg>
<div class="c" style="left:2826px;top:492.7px;width:73px;text-align:center"><span class="n">0</span></div>
<div class="c" style="left:2340px;top:521.6px;width:54px;text-align:center"><span class="n">6191</span></div>
<div class="c" style="left:2395px;top:521.6px;width:102px;text-align:center">精成科</div>
<div class="c" style="left:2571px;top:521.6px;width:178px;padding-left:2px">電子上游<span class="l">-PCB-</span>製造</div>
<svg class="ic" viewBox="0 0 19 12" style="left:2499px;top:527.6px"><path class="pu" d="M8 .5H11V2L18.5 10V11.5H.5V10L8 2Z"/></svg>
<div class="c" style="left:2498px;top:521.6px;width:72px;text-align:center"><span class="n">0.87</span></div>
<svg class="ic" viewBox="0 0 19 12" style="left:2750px;top:527.6px"><path class="pd" d="M.5 .5H18.5V2L11 10V11.5H8V10L.5 2Z"/></svg>
<div class="c" style="left:2750px;top:521.6px;width:75px;text-align:center"><span class="n">-0.1</span></div>
<svg class="ic" viewBox="0 0 19 12" style="left:2827px;top:527.6px"><rect class="pz" x=".5" y="3.5" width="18" height="6"/></svg>
<div class="c" style="left:2826px;top:521.6px;width:73px;text-align:center"><span class="n">0</span></div>
<div class="c" style="left:2340px;top:550.5px;width:54px;text-align:center"><span class="n">5871</span></div>
<div class="c" style="left:2395px;top:550.5px;width:102px;text-align:center">中租<span class="l">-KY</span></div>
<div class="c" style="left:2571px;top:550.5px;width:178px;padding-left:2px">傳產<span class="l">-</span>其他</div>
<svg class="ic" viewBox="0 0 19 12" style="left:2499px;top:556.5px"><path class="pd" d="M.5 .5H18.5V2L11 10V11.5H8V10L.5 2Z"/></svg>
<div class="c" style="left:2498px;top:550.5px;width:72px;text-align:center"><span class="n">-0.48</span></div>
<svg class="ic" viewBox="0 0 19 12" style="left:2750px;top:556.5px"><path class="pd" d="M.5 .5H18.5V2L11 10V11.5H8V10L.5 2Z"/></svg>
<div class="c" style="left:2750px;top:550.5px;width:75px;text-align:center"><span class="n">-0.3</span></div>
<svg class="ic" viewBox="0 0 19 12" style="left:2827px;top:556.5px"><path class="pd" d="M.5 .5H18.5V2L11 10V11.5H8V10L.5 2Z"/></svg>
<div class="c" style="left:2826px;top:550.5px;width:73px;text-align:center"><span class="n">-0.2</span></div>
<div class="c" style="left:2340px;top:579.4px;width:54px;text-align:center"><span class="n">3042</span></div>
<div class="c" style="left:2395px;top:579.4px;width:102px;text-align:center">晶技</div>
<div class="c" style="left:2571px;top:579.4px;width:178px;padding-left:2px">電子上游<span class="l">-</span>被動元件</div>
<svg class="ic" viewBox="0 0 19 12" style="left:2499px;top:585.4px"><path class="pu" d="M8 .5H11V2L18.5 10V11.5H.5V10L8 2Z"/></svg>
<div class="c" style="left:2498px;top:579.4px;width:72px;text-align:center"><span class="n">1.32</span></div>
<svg class="ic" viewBox="0 0 19 12" style="left:2750px;top:585.4px"><path class="pu" d="M8 .5H11V2L18.5 10V11.5H.5V10L8 2Z"/></svg>
<div class="c" style="left:2750px;top:579.4px;width:75px;text-align:center"><span class="n">0.2</span></div>
<svg class="ic" viewBox="0 0 19 12" style="left:2827px;top:585.4px"><path class="pd" d="M.5 .5H18.5V2L11 10V11.5H8V10L.5 2Z"/></svg>
<div class="c" style="left:2826px;top:579.4px;width:73px;text-align:center"><span class="n">-0.1</span></div>
<div class="c" style="left:2340px;top:608.3px;width:54px;text-align:center"><span class="n">3026</span></div>
<div class="c" style="left:2395px;top:608.3px;width:102px;text-align:center">禾伸堂</div>
<div class="c" style="left:2571px;top:608.3px;width:178px;padding-left:2px">電子上游<span class="l">-</span>被動元件</div>
<svg class="ic" viewBox="0 0 19 12" style="left:2499px;top:614.3px"><path class="pd" d="M.5 .5H18.5V2L11 10V11.5H8V10L.5 2Z"/></svg>
<div class="c" style="left:2498px;top:608.3px;width:72px;text-align:center"><span class="n">-1.4</span></div>
<svg class="ic" viewBox="0 0 19 12" style="left:2750px;top:614.3px"><path class="pd" d="M.5 .5H18.5V2L11 10V11.5H8V10L.5 2Z"/></svg>
<div class="c" style="left:2750px;top:608.3px;width:75px;text-align:center"><span class="n">-0.1</span></div>
<svg class="ic" viewBox="0 0 19 12" style="left:2827px;top:614.3px"><rect class="pz" x=".5" y="3.5" width="18" height="6"/></svg>
<div class="c" style="left:2826px;top:608.3px;width:73px;text-align:center"><span class="n">0</span></div>
<div class="c" style="left:2340px;top:637.2px;width:54px;text-align:center"><span class="n">2886</span></div>
<div class="c" style="left:2395px;top:637.2px;width:102px;text-align:center">兆豐金</div>
<div class="c" style="left:2571px;top:637.2px;width:178px;padding-left:2px">金融<span class="l">-</span>金控</div>
<svg class="ic" viewBox="0 0 19 12" style="left:2499px;top:643.2px"><path class="pu" d="M8 .5H11V2L18.5 10V11.5H.5V10L8 2Z"/></svg>
<div class="c" style="left:2498px;top:637.2px;width:72px;text-align:center"><span class="n">0.37</span></div>
<svg class="ic" viewBox="0 0 19 12" style="left:2750px;top:643.2px"><rect class="pz" x=".5" y="3.5" width="18" height="6"/></svg>
<div class="c" style="left:2750px;top:637.2px;width:75px;text-align:center"><span class="n">0</span></div>
<svg class="ic" viewBox="0 0 19 12" style="left:2827px;top:643.2px"><rect class="pz" x=".5" y="3.5" width="18" height="6"/></svg>
<div class="c" style="left:2826px;top:637.2px;width:73px;text-align:center"><span class="n">0</span></div>
<div class="c" style="left:2340px;top:666.1px;width:54px;text-align:center"><span class="n">4938</span></div>
<div class="c" style="left:2395px;top:666.1px;width:102px;text-align:center">和碩</div>
<div class="c" style="left:2571px;top:666.1px;width:178px;padding-left:2px">電子中游<span class="l">-EMS</span></div>
<svg class="ic" viewBox="0 0 19 12" style="left:2499px;top:672.1px"><path class="pd" d="M.5 .5H18.5V2L11 10V11.5H8V10L.5 2Z"/></svg>
<div class="c" style="left:2498px;top:666.1px;width:72px;text-align:center"><span class="n">-0.14</span></div>
<svg class="ic" viewBox="0 0 19 12" style="left:2750px;top:672.1px"><path class="pu" d="M8 .5H11V2L18.5 10V11.5H.5V10L8 2Z"/></svg>
<div class="c" style="left:2750px;top:666.1px;width:75px;text-align:center"><span class="n">0.3</span></div>
<svg class="ic" viewBox="0 0 19 12" style="left:2827px;top:672.1px"><path class="pd" d="M.5 .5H18.5V2L11 10V11.5H8V10L.5 2Z"/></svg>
<div class="c" style="left:2826px;top:666.1px;width:73px;text-align:center"><span class="n">-0.1</span></div>
<div class="c" style="left:2340px;top:695.0px;width:54px;text-align:center"><span class="n">2316</span></div>
<div class="c" style="left:2395px;top:695.0px;width:102px;text-align:center">楠梓電</div>
<div class="c" style="left:2571px;top:695.0px;width:178px;padding-left:2px">電子上游<span class="l">-PCB-</span>製造</div>
<svg class="ic" viewBox="0 0 19 12" style="left:2499px;top:701.0px"><path class="pu" d="M8 .5H11V2L18.5 10V11.5H.5V10L8 2Z"/></svg>
<div class="c" style="left:2498px;top:695.0px;width:72px;text-align:center"><span class="n">1.01</span></div>
<svg class="ic" viewBox="0 0 19 12" style="left:2750px;top:701.0px"><path class="pu" d="M8 .5H11V2L18.5 10V11.5H.5V10L8 2Z"/></svg>
<div class="c" style="left:2750px;top:695.0px;width:75px;text-align:center"><span class="n">0.3</span></div>
<svg class="ic" viewBox="0 0 19 12" style="left:2827px;top:701.0px"><path class="pd" d="M.5 .5H18.5V2L11 10V11.5H8V10L.5 2Z"/></svg>
<div class="c" style="left:2826px;top:695.0px;width:73px;text-align:center"><span class="n">-0.1</span></div>
<div class="c" style="left:2340px;top:723.9px;width:54px;text-align:center"><span class="n">9958</span></div>
<div class="c" style="left:2395px;top:723.9px;width:102px;text-align:center">世紀鋼</div>
<div class="c" style="left:2571px;top:723.9px;width:178px;padding-left:2px">傳產<span class="l">-</span>鋼鐵</div>
<svg class="ic" viewBox="0 0 19 12" style="left:2499px;top:729.9px"><rect class="pz" x=".5" y="3.5" width="18" height="6"/></svg>
<div class="c" style="left:2498px;top:723.9px;width:72px;text-align:center"><span class="n">0</span></div>
<svg class="ic" viewBox="0 0 19 12" style="left:2750px;top:729.9px"><path class="pu" d="M8 .5H11V2L18.5 10V11.5H.5V10L8 2Z"/></svg>
<div class="c" style="left:2750px;top:723.9px;width:75px;text-align:center"><span class="n">0.7</span></div>
<svg class="ic" viewBox="0 0 19 12" style="left:2827px;top:729.9px"><rect class="pz" x=".5" y="3.5" width="18" height="6"/></svg>
<div class="c" style="left:2826px;top:723.9px;width:73px;text-align:center"><span class="n">0</span></div>
<div class="c" style="left:2340px;top:752.8px;width:54px;text-align:center"><span class="n">2457</span></div>
<div class="c" style="left:2395px;top:752.8px;width:102px;text-align:center">飛宏</div>
<div class="c" style="left:2571px;top:752.8px;width:178px;padding-left:2px">電子中游<span class="l">-</span>電源供應器</div>
<svg class="ic" viewBox="0 0 19 12" style="left:2499px;top:758.8px"><path class="pu" d="M8 .5H11V2L18.5 10V11.5H.5V10L8 2Z"/></svg>
<div class="c" style="left:2498px;top:752.8px;width:72px;text-align:center"><span class="n">1.03</span></div>
<svg class="ic" viewBox="0 0 19 12" style="left:2750px;top:758.8px"><path class="pu" d="M8 .5H11V2L18.5 10V11.5H.5V10L8 2Z"/></svg>
<div class="c" style="left:2750px;top:752.8px;width:75px;text-align:center"><span class="n">1.2</span></div>
<svg class="ic" viewBox="0 0 19 12" style="left:2827px;top:758.8px"><rect class="pz" x=".5" y="3.5" width="18" height="6"/></svg>
<div class="c" style="left:2826px;top:752.8px;width:73px;text-align:center"><span class="n">0</span></div>
<div class="c" style="left:2340px;top:781.7px;width:54px;text-align:center"><span class="n">5876</span></div>
<div class="c" style="left:2395px;top:781.7px;width:102px;text-align:center">上海商銀</div>
<div class="c" style="left:2571px;top:781.7px;width:178px;padding-left:2px">金融<span class="l">-</span>銀行</div>
<svg class="ic" viewBox="0 0 19 12" style="left:2499px;top:787.7px"><path class="pu" d="M8 .5H11V2L18.5 10V11.5H.5V10L8 2Z"/></svg>
<div class="c" style="left:2498px;top:781.7px;width:72px;text-align:center"><span class="n">0.63</span></div>
<svg class="ic" viewBox="0 0 19 12" style="left:2750px;top:787.7px"><path class="pd" d="M.5 .5H18.5V2L11 10V11.5H8V10L.5 2Z"/></svg>
<div class="c" style="left:2750px;top:781.7px;width:75px;text-align:center"><span class="n">-0.3</span></div>
<svg class="ic" viewBox="0 0 19 12" style="left:2827px;top:787.7px"><path class="pd" d="M.5 .5H18.5V2L11 10V11.5H8V10L.5 2Z"/></svg>
<div class="c" style="left:2826px;top:781.7px;width:73px;text-align:center"><span class="n">-0.1</span></div>
<div class="c" style="left:2340px;top:810.6px;width:54px;text-align:center"><span class="n">6176</span></div>
<div class="c" style="left:2395px;top:810.6px;width:102px;text-align:center">瑞儀</div>
<div class="c" style="left:2571px;top:810.6px;width:178px;padding-left:2px">電子中游<span class="l">-LCD-</span>零組件</div>
<svg class="ic" viewBox="0 0 19 12" style="left:2499px;top:816.6px"><path class="pu" d="M8 .5H11V2L18.5 10V11.5H.5V10L8 2Z"/></svg>
<div class="c" style="left:2498px;top:810.6px;width:72px;text-align:center"><span class="n">0.82</span></div>
<svg class="ic" viewBox="0 0 19 12" style="left:2750px;top:816.6px"><path class="pu" d="M8 .5H11V2L18.5 10V11.5H.5V10L8 2Z"/></svg>
<div class="c" style="left:2750px;top:810.6px;width:75px;text-align:center"><span class="n">0.3</span></div>
<svg class="ic" viewBox="0 0 19 12" style="left:2827px;top:816.6px"><path class="pd" d="M.5 .5H18.5V2L11 10V11.5H8V10L.5 2Z"/></svg>
<div class="c" style="left:2826px;top:810.6px;width:73px;text-align:center"><span class="n">-0.3</span></div>
<div class="c" style="left:2340px;top:839.5px;width:54px;text-align:center"><span class="n">2834</span></div>
<div class="c" style="left:2395px;top:839.5px;width:102px;text-align:center">臺企銀</div>
<div class="c" style="left:2571px;top:839.5px;width:178px;padding-left:2px">金融<span class="l">-</span>銀行</div>
<svg class="ic" viewBox="0 0 19 12" style="left:2499px;top:845.5px"><rect class="pz" x=".5" y="3.5" width="18" height="6"/></svg>
<div class="c" style="left:2498px;top:839.5px;width:72px;text-align:center"><span class="n">0</span></div>
<svg class="ic" viewBox="0 0 19 12" style="left:2750px;top:845.5px"><path class="pd" d="M.5 .5H18.5V2L11 10V11.5H8V10L.5 2Z"/></svg>
<div class="c" style="left:2750px;top:839.5px;width:75px;text-align:center"><span class="n">-0.3</span></div>
<svg class="ic" viewBox="0 0 19 12" style="left:2827px;top:845.5px"><rect class="pz" x=".5" y="3.5" width="18" height="6"/></svg>
<div class="c" style="left:2826px;top:839.5px;width:73px;text-align:center"><span class="n">0</span></div>
<div class="c" style="left:2340px;top:868.4px;width:54px;text-align:center"><span class="n">6217</span></div>
<div class="c" style="left:2395px;top:868.4px;width:102px;text-align:center">中探針</div>
<div class="c" style="left:2571px;top:868.4px;width:178px;padding-left:2px">電子上游<span class="l">-PCB-</span>材料設備</div>
<svg class="ic" viewBox="0 0 19 12" style="left:2499px;top:874.4px"><path class="pd" d="M.5 .5H18.5V2L11 10V11.5H8V10L.5 2Z"/></svg>
<div class="c" style="left:2498px;top:868.4px;width:72px;text-align:center"><span class="n">-0.96</span></div>
<svg class="ic" viewBox="0 0 19 12" style="left:2750px;top:874.4px"><path class="pu" d="M8 .5H11V2L18.5 10V11.5H.5V10L8 2Z"/></svg>
<div class="c" style="left:2750px;top:868.4px;width:75px;text-align:center"><span class="n">2.4</span></div>
<svg class="ic" viewBox="0 0 19 12" style="left:2827px;top:874.4px"><rect class="pz" x=".5" y="3.5" width="18" height="6"/></svg>
<div class="c" style="left:2826px;top:868.4px;width:73px;text-align:center"><span class="n">0</span></div>
<div class="c" style="left:2340px;top:897.3px;width:54px;text-align:center"><span class="n">1216</span></div>
<div class="c" style="left:2395px;top:897.3px;width:102px;text-align:center">統一</div>
<div class="c" style="left:2571px;top:897.3px;width:178px;padding-left:2px">傳產<span class="l">-</span>食品</div>
<svg class="ic" viewBox="0 0 19 12" style="left:2499px;top:903.3px"><path class="pu" d="M8 .5H11V2L18.5 10V11.5H.5V10L8 2Z"/></svg>
<div class="c" style="left:2498px;top:897.3px;width:72px;text-align:center"><span class="n">0.66</span></div>
<svg class="ic" viewBox="0 0 19 12" style="left:2750px;top:903.3px"><path class="pu" d="M8 .5H11V2L18.5 10V11.5H.5V10L8 2Z"/></svg>
<div class="c" style="left:2750px;top:897.3px;width:75px;text-align:center"><span class="n">0.1</span></div>
<svg class="ic" viewBox="0 0 19 12" style="left:2827px;top:903.3px"><path class="pd" d="M.5 .5H18.5V2L11 10V11.5H8V10L.5 2Z"/></svg>
<div class="c" style="left:2826px;top:897.3px;width:73px;text-align:center"><span class="n">-0.3</span></div>
<div class="c" style="left:2340px;top:926.2px;width:54px;text-align:center"><span class="n">1589</span></div>
<div class="c" style="left:2395px;top:926.2px;width:102px;text-align:center">永冠<span class="l">-KY</span></div>
<div class="c" style="left:2571px;top:926.2px;width:178px;padding-left:2px">傳產<span class="l">-</span>電機</div>
<svg class="ic" viewBox="0 0 19 12" style="left:2499px;top:932.2px"><path class="pd" d="M.5 .5H18.5V2L11 10V11.5H8V10L.5 2Z"/></svg>
<div class="c" style="left:2498px;top:926.2px;width:72px;text-align:center"><span class="n">-1.39</span></div>
<svg class="ic" viewBox="0 0 19 12" style="left:2750px;top:932.2px"><path class="pd" d="M.5 .5H18.5V2L11 10V11.5H8V10L.5 2Z"/></svg>
<div class="c" style="left:2750px;top:926.2px;width:75px;text-align:center"><span class="n">-0.3</span></div>
<svg class="ic" viewBox="0 0 19 12" style="left:2827px;top:932.2px"><rect class="pz" x=".5" y="3.5" width="18" height="6"/></svg>
<div class="c" style="left:2826px;top:926.2px;width:73px;text-align:center"><span class="n">0</span></div>
<div class="c" style="left:2340px;top:955.1px;width:54px;text-align:center"><span class="n">2646</span></div>
<div class="c" style="left:2395px;top:955.1px;width:102px;text-align:center">星宇航空</div>
<div class="c" style="left:2571px;top:955.1px;width:178px;padding-left:2px">傳產<span class="l">-</span>航運</div>
<svg class="ic" viewBox="0 0 19 12" style="left:2499px;top:961.1px"><path class="pu" d="M8 .5H11V2L18.5 10V11.5H.5V10L8 2Z"/></svg>
<div class="c" style="left:2498px;top:955.1px;width:72px;text-align:center"><span class="n">0.64</span></div>
<svg class="ic" viewBox="0 0 19 12" style="left:2750px;top:961.1px"><rect class="pz" x=".5" y="3.5" width="18" height="6"/></svg>
<div class="c" style="left:2750px;top:955.1px;width:75px;text-align:center"><span class="n">0</span></div>
<svg class="ic" viewBox="0 0 19 12" style="left:2827px;top:961.1px"><rect class="pz" x=".5" y="3.5" width="18" height="6"/></svg>
<div class="c" style="left:2826px;top:955.1px;width:73px;text-align:center"><span class="n">0</span></div>
<div class="c" style="left:2340px;top:984.0px;width:54px;text-align:center"><span class="n">1722</span></div>
<div class="c" style="left:2395px;top:984.0px;width:102px;text-align:center">台肥</div>
<div class="c" style="left:2571px;top:984.0px;width:178px;padding-left:2px">傳產<span class="l">-</span>化學工業</div>
<svg class="ic" viewBox="0 0 19 12" style="left:2499px;top:990.0px"><path class="pu" d="M8 .5H11V2L18.5 10V11.5H.5V10L8 2Z"/></svg>
<div class="c" style="left:2498px;top:984.0px;width:72px;text-align:center"><span class="n">1.07</span></div>
<svg class="ic" viewBox="0 0 19 12" style="left:2750px;top:990.0px"><path class="pd" d="M.5 .5H18.5V2L11 10V11.5H8V10L.5 2Z"/></svg>
<div class="c" style="left:2750px;top:984.0px;width:75px;text-align:center"><span class="n">-0.3</span></div>
<svg class="ic" viewBox="0 0 19 12" style="left:2827px;top:990.0px"><rect class="pz" x=".5" y="3.5" width="18" height="6"/></svg>
<div class="c" style="left:2826px;top:984.0px;width:73px;text-align:center"><span class="n">0</span></div>
<div class="c" style="left:2340px;top:1012.9px;width:54px;text-align:center"><span class="n">3545</span></div>
<div class="c" style="left:2395px;top:1012.9px;width:102px;text-align:center">敦泰</div>
<div class="c" style="left:2571px;top:1012.9px;width:178px;padding-left:2px">電子上游<span class="l">-IC-</span>設計</div>
<svg class="ic" viewBox="0 0 19 12" style="left:2499px;top:1018.9px"><path class="pd" d="M.5 .5H18.5V2L11 10V11.5H8V10L.5 2Z"/></svg>
<div class="c" style="left:2498px;top:1012.9px;width:72px;text-align:center"><span class="n">-0.56</span></div>
<svg class="ic" viewBox="0 0 19 12" style="left:2750px;top:1018.9px"><path class="pd" d="M.5 .5H18.5V2L11 10V11.5H8V10L.5 2Z"/></svg>
<div class="c" style="left:2750px;top:1012.9px;width:75px;text-align:center"><span class="n">-0.1</span></div>
<svg class="ic" viewBox="0 0 19 12" style="left:2827px;top:1018.9px"><rect class="pz" x=".5" y="3.5" width="18" height="6"/></svg>
<div class="c" style="left:2826px;top:1012.9px;width:73px;text-align:center"><span class="n">0</span></div>
<div class="c" style="left:2340px;top:1041.8px;width:54px;text-align:center"><span class="n">2801</span></div>
<div class="c" style="left:2395px;top:1041.8px;width:102px;text-align:center">彰銀</div>
<div class="c" style="left:2571px;top:1041.8px;width:178px;padding-left:2px">金融<span class="l">-</span>銀行</div>
<svg class="ic" viewBox="0 0 19 12" style="left:2499px;top:1047.8px"><path class="pu" d="M8 .5H11V2L18.5 10V11.5H.5V10L8 2Z"/></svg>
<div class="c" style="left:2498px;top:1041.8px;width:72px;text-align:center"><span class="n">0.25</span></div>
<svg class="ic" viewBox="0 0 19 12" style="left:2750px;top:1047.8px"><path class="pd" d="M.5 .5H18.5V2L11 10V11.5H8V10L.5 2Z"/></svg>
<div class="c" style="left:2750px;top:1041.8px;width:75px;text-align:center"><span class="n">-0.2</span></div>
<svg class="ic" viewBox="0 0 19 12" style="left:2827px;top:1047.8px"><rect class="pz" x=".5" y="3.5" width="18" height="6"/></svg>
<div class="c" style="left:2826px;top:1041.8px;width:73px;text-align:center"><span class="n">0</span></div>
<div class="c" style="left:2340px;top:1070.7px;width:54px;text-align:center"><span class="n">3323</span></div>
<div class="c" style="left:2395px;top:1070.7px;width:102px;text-align:center">加百裕</div>
<div class="c" style="left:2571px;top:1070.7px;width:178px;padding-left:2px">電子中游<span class="l">-NB</span>與手機零組件</div>
<svg class="ic" viewBox="0 0 19 12" style="left:2499px;top:1076.7px"><path class="pu" d="M8 .5H11V2L18.5 10V11.5H.5V10L8 2Z"/></svg>
<div class="c" style="left:2498px;top:1070.7px;width:72px;text-align:center"><span class="n">0.25</span></div>
<svg class="ic" viewBox="0 0 19 12" style="left:2750px;top:1076.7px"><path class="pu" d="M8 .5H11V2L18.5 10V11.5H.5V10L8 2Z"/></svg>
<div class="c" style="left:2750px;top:1070.7px;width:75px;text-align:center"><span class="n">0.1</span></div>
<svg class="ic" viewBox="0 0 19 12" style="left:2827px;top:1076.7px"><rect class="pz" x=".5" y="3.5" width="18" height="6"/></svg>
<div class="c" style="left:2826px;top:1070.7px;width:73px;text-align:center"><span class="n">0</span></div>
<div class="c" style="left:2340px;top:1099.6px;width:54px;text-align:center"><span class="n">2520</span></div>
<div class="c" style="left:2395px;top:1099.6px;width:102px;text-align:center">冠德</div>
<div class="c" style="left:2571px;top:1099.6px;width:178px;padding-left:2px">傳產<span class="l">-</span>營建</div>
<svg class="ic" viewBox="0 0 19 12" style="left:2499px;top:1105.6px"><path class="pd" d="M.5 .5H18.5V2L11 10V11.5H8V10L.5 2Z"/></svg>
<div class="c" style="left:2498px;top:1099.6px;width:72px;text-align:center"><span class="n">-0.6</span></div>
<svg class="ic" viewBox="0 0 19 12" style="left:2750px;top:1105.6px"><path class="pu" d="M8 .5H11V2L18.5 10V11.5H.5V10L8 2Z"/></svg>
<div class="c" style="left:2750px;top:1099.6px;width:75px;text-align:center"><span class="n">0.4</span></div>
<svg class="ic" viewBox="0 0 19 12" style="left:2827px;top:1105.6px"><path class="pd" d="M.5 .5H18.5V2L11 10V11.5H8V10L.5 2Z"/></svg>
<div class="c" style="left:2826px;top:1099.6px;width:73px;text-align:center"><span class="n">-0.1</span></div>
<div class="c" style="left:2340px;top:1128.5px;width:54px;text-align:center"><span class="n">2442</span></div>
<div class="c" style="left:2395px;top:1128.5px;width:102px;text-align:center">新美齊</div>
<div class="c" style="left:2571px;top:1128.5px;width:178px;padding-left:2px">傳產<span class="l">-</span>營建</div>
<svg class="ic" viewBox="0 0 19 12" style="left:2499px;top:1134.5px"><rect class="pz" x=".5" y="3.5" width="18" height="6"/></svg>
<div class="c" style="left:2498px;top:1128.5px;width:72px;text-align:center"><span class="n">0</span></div>
<svg class="ic" viewBox="0 0 19 12" style="left:2750px;top:1134.5px"><path class="pd" d="M.5 .5H18.5V2L11 10V11.5H8V10L.5 2Z"/></svg>
<div class="c" style="left:2750px;top:1128.5px;width:75px;text-align:center"><span class="n">-0.2</span></div>
<svg class="ic" viewBox="0 0 19 12" style="left:2827px;top:1134.5px"><rect class="pz" x=".5" y="3.5" width="18" height="6"/></svg>
<div class="c" style="left:2826px;top:1128.5px;width:73px;text-align:center"><span class="n">0</span></div>
<div class="c" style="left:2340px;top:1157.4px;width:54px;text-align:center"><span class="n">2845</span></div>
<div class="c" style="left:2395px;top:1157.4px;width:102px;text-align:center">遠東銀</div>
<div class="c" style="left:2571px;top:1157.4px;width:178px;padding-left:2px">金融<span class="l">-</span>銀行</div>
<svg class="ic" viewBox="0 0 19 12" style="left:2499px;top:1163.4px"><rect class="pz" x=".5" y="3.5" width="18" height="6"/></svg>
<div class="c" style="left:2498px;top:1157.4px;width:72px;text-align:center"><span class="n">0</span></div>
<svg class="ic" viewBox="0 0 19 12" style="left:2750px;top:1163.4px"><path class="pd" d="M.5 .5H18.5V2L11 10V11.5H8V10L.5 2Z"/></svg>
<div class="c" style="left:2750px;top:1157.4px;width:75px;text-align:center"><span class="n">-0.1</span></div>
<svg class="ic" viewBox="0 0 19 12" style="left:2827px;top:1163.4px"><rect class="pz" x=".5" y="3.5" width="18" height="6"/></svg>
<div class="c" style="left:2826px;top:1157.4px;width:73px;text-align:center"><span class="n">0</span></div>
<div class="c" style="left:2340px;top:1186.3px;width:54px;text-align:center"><span class="n">2897</span></div>
<div class="c" style="left:2395px;top:1186.3px;width:102px;text-align:center">王道銀行</div>
<div class="c" style="left:2571px;top:1186.3px;width:178px;padding-left:2px">金融<span class="l">-</span>銀行</div>
<svg class="ic" viewBox="0 0 19 12" style="left:2499px;top:1192.3px"><rect class="pz" x=".5" y="3.5" width="18" height="6"/></svg>
<div class="c" style="left:2498px;top:1186.3px;width:72px;text-align:center"><span class="n">0</span></div>
<svg class="ic" viewBox="0 0 19 12" style="left:2750px;top:1192.3px"><path class="pd" d="M.5 .5H18.5V2L11 10V11.5H8V10L.5 2Z"/></svg>
<div class="c" style="left:2750px;top:1186.3px;width:75px;text-align:center"><span class="n">-0.2</span></div>
<svg class="ic" viewBox="0 0 19 12" style="left:2827px;top:1192.3px"><rect class="pz" x=".5" y="3.5" width="18" height="6"/></svg>
<div class="c" style="left:2826px;top:1186.3px;width:73px;text-align:center"><span class="n">0</span></div>
<div class="c" style="left:2340px;top:1215.2px;width:54px;text-align:center"><span class="n">2836</span></div>
<div class="c" style="left:2395px;top:1215.2px;width:102px;text-align:center">高雄銀</div>
<div class="c" style="left:2571px;top:1215.2px;width:178px;padding-left:2px">金融<span class="l">-</span>銀行</div>
<svg class="ic" viewBox="0 0 19 12" style="left:2499px;top:1221.2px"><rect class="pz" x=".5" y="3.5" width="18" height="6"/></svg>
<div class="c" style="left:2498px;top:1215.2px;width:72px;text-align:center"><span class="n">0</span></div>
<svg class="ic" viewBox="0 0 19 12" style="left:2750px;top:1221.2px"><path class="pd" d="M.5 .5H18.5V2L11 10V11.5H8V10L.5 2Z"/></svg>
<div class="c" style="left:2750px;top:1215.2px;width:75px;text-align:center"><span class="n">-0.1</span></div>
<svg class="ic" viewBox="0 0 19 12" style="left:2827px;top:1221.2px"><rect class="pz" x=".5" y="3.5" width="18" height="6"/></svg>
<div class="c" style="left:2826px;top:1215.2px;width:73px;text-align:center"><span class="n">0</span></div>
<div class="c" style="left:2340px;top:1244.1px;width:54px;text-align:center"><span class="n">5880</span></div>
<div class="c" style="left:2395px;top:1244.1px;width:102px;text-align:center">合庫金</div>
<div class="c" style="left:2571px;top:1244.1px;width:178px;padding-left:2px">金融<span class="l">-</span>金控</div>
<svg class="ic" viewBox="0 0 19 12" style="left:2499px;top:1250.1px"><path class="pu" d="M8 .5H11V2L18.5 10V11.5H.5V10L8 2Z"/></svg>
<div class="c" style="left:2498px;top:1244.1px;width:72px;text-align:center"><span class="n">0.42</span></div>
<svg class="ic" viewBox="0 0 19 12" style="left:2750px;top:1250.1px"><rect class="pz" x=".5" y="3.5" width="18" height="6"/></svg>
<div class="c" style="left:2750px;top:1244.1px;width:75px;text-align:center"><span class="n">0</span></div>
<svg class="ic" viewBox="0 0 19 12" style="left:2827px;top:1250.1px"><rect class="pz" x=".5" y="3.5" width="18" height="6"/></svg>
<div class="c" style="left:2826px;top:1244.1px;width:73px;text-align:center"><span class="n">0</span></div>
<div class="c" style="left:2340px;top:1273.0px;width:54px;text-align:center"><span class="n">1909</span></div>
<div class="c" style="left:2395px;top:1273.0px;width:102px;text-align:center">榮成</div>
<div class="c" style="left:2571px;top:1273.0px;width:178px;padding-left:2px">傳產<span class="l">-</span>紙業</div>
<svg class="ic" viewBox="0 0 19 12" style="left:2499px;top:1279.0px"><path class="pu" d="M8 .5H11V2L18.5 10V11.5H.5V10L8 2Z"/></svg>
<div class="c" style="left:2498px;top:1273.0px;width:72px;text-align:center"><span class="n">0.49</span></div>
<svg class="ic" viewBox="0 0 19 12" style="left:2750px;top:1279.0px"><rect class="pz" x=".5" y="3.5" width="18" height="6"/></svg>
<div class="c" style="left:2750px;top:1273.0px;width:75px;text-align:center"><span class="n">0</span></div>
<svg class="ic" viewBox="0 0 19 12" style="left:2827px;top:1279.0px"><rect class="pz" x=".5" y="3.5" width="18" height="6"/></svg>
<div class="c" style="left:2826px;top:1273.0px;width:73px;text-align:center"><span class="n">0</span></div>
</body></html>
